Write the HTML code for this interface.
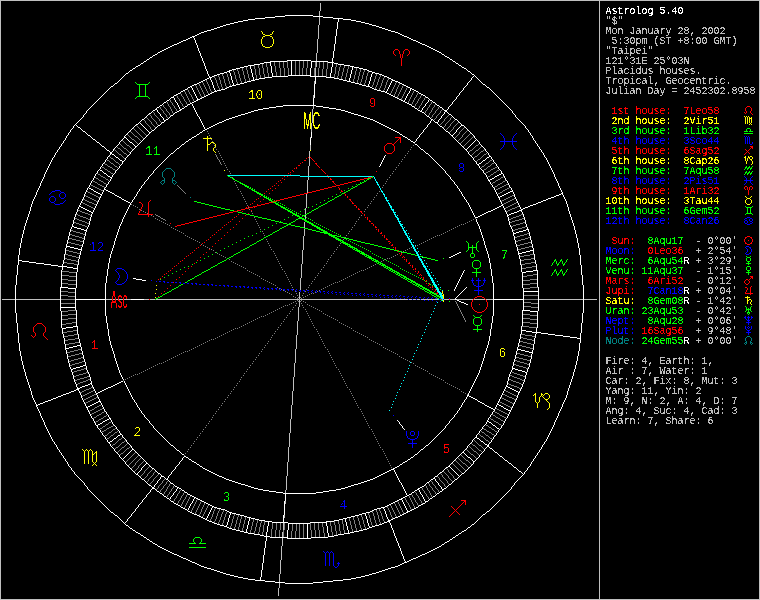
<!DOCTYPE html>
<html><head><meta charset="utf-8"><title>Astrolog 5.40</title>
<style>
html,body{margin:0;padding:0;background:#000;overflow:hidden}
svg{display:block}
.px path{fill:none;stroke-width:1;shape-rendering:crispEdges}
.sb text{font-family:"Liberation Mono",monospace;font-size:10px;white-space:pre}
.hn text{font-family:"Liberation Mono",monospace;font-size:13px}
.lb text{font-family:"Liberation Sans",sans-serif}
</style></head><body>
<svg width="760" height="600" viewBox="0 0 760 600">
<defs><filter id="bin" x="0" y="0" width="100%" height="100%" color-interpolation-filters="sRGB"><feComponentTransfer><feFuncA type="discrete" tableValues="0 0 1 1 1"/></feComponentTransfer></filter><filter id="bin2" x="0" y="0" width="100%" height="100%" color-interpolation-filters="sRGB"><feComponentTransfer><feFuncA type="discrete" tableValues="0 0 0 1 1"/></feComponentTransfer></filter><filter id="bin3" x="0" y="0" width="100%" height="100%" color-interpolation-filters="sRGB"><feComponentTransfer><feFuncA type="discrete" tableValues="0 1"/></feComponentTransfer></filter><filter id="bin4" x="0" y="0" width="100%" height="100%" color-interpolation-filters="sRGB"><feComponentTransfer><feFuncA type="discrete" tableValues="0 0 0 1"/></feComponentTransfer></filter></defs>
<rect width="760" height="600" fill="#000"/>
<g class="px" transform="translate(0,0.5)">
<path stroke="#bfbfbf" d="M0 0h760m-760 1h1m598 0h1m159 0h1m-760 1h1m598 0h1m159 0h1m-760 1h1m319 0h1m278 0h1m159 0h1m-760 1h1m319 0h1m278 0h1m159 0h1m-760 1h1m319 0h1m278 0h1m159 0h1m-760 1h1m319 0h1m278 0h1m159 0h1m-760 1h1m319 0h1m278 0h1m159 0h1m-760 1h1m319 0h1m278 0h1m159 0h1m-760 1h1m319 0h1m278 0h1m159 0h1m-760 1h1m319 0h1m278 0h1m159 0h1m-760 1h1m318 0h1m279 0h1m159 0h1m-760 1h1m318 0h1m279 0h1m159 0h1m-760 1h1m318 0h1m279 0h1m159 0h1m-760 1h1m318 0h1m279 0h1m159 0h1m-760 1h1m318 0h1m279 0h1m159 0h1m-760 1h1m598 0h1m159 0h1m-760 1h1m318 0h1m279 0h1m159 0h1m-760 1h1m318 0h1m279 0h1m159 0h1m-760 1h1m318 0h1m279 0h1m159 0h1m-760 1h1m318 0h1m279 0h1m159 0h1m-760 1h1m318 0h1m279 0h1m159 0h1m-760 1h1m318 0h1m279 0h1m159 0h1m-760 1h1m318 0h1m279 0h1m159 0h1m-760 1h1m318 0h1m279 0h1m159 0h1m-760 1h1m317 0h1m280 0h1m159 0h1m-760 1h1m317 0h1m280 0h1m159 0h1m-760 1h1m317 0h1m280 0h1m159 0h1m-760 1h1m317 0h1m280 0h1m159 0h1m-760 1h1m317 0h1m280 0h1m159 0h1m-760 1h1m317 0h1m280 0h1m159 0h1m-760 1h1m317 0h1m280 0h1m159 0h1m-760 1h1m317 0h1m280 0h1m159 0h1m-760 1h1m317 0h1m280 0h1m159 0h1m-760 1h1m317 0h1m280 0h1m159 0h1m-760 1h1m317 0h1m280 0h1m159 0h1m-760 1h1m317 0h1m280 0h1m159 0h1m-760 1h1m317 0h1m280 0h1m159 0h1m-760 1h1m317 0h1m280 0h1m159 0h1m-760 1h1m316 0h1m281 0h1m159 0h1m-760 1h1m316 0h1m281 0h1m159 0h1m-760 1h1m316 0h1m281 0h1m159 0h1m-760 1h1m316 0h1m281 0h1m159 0h1m-760 1h1m316 0h1m281 0h1m159 0h1m-760 1h1m316 0h1m281 0h1m159 0h1m-760 1h1m316 0h1m281 0h1m159 0h1m-760 1h1m316 0h1m281 0h1m159 0h1m-760 1h1m316 0h1m281 0h1m159 0h1m-760 1h1m316 0h1m281 0h1m159 0h1m-760 1h1m316 0h1m281 0h1m159 0h1m-760 1h1m316 0h1m281 0h1m159 0h1m-760 1h1m316 0h1m281 0h1m159 0h1m-760 1h1m316 0h1m281 0h1m159 0h1m-760 1h1m315 0h1m282 0h1m159 0h1m-760 1h1m315 0h1m282 0h1m159 0h1m-760 1h1m315 0h1m282 0h1m159 0h1m-760 1h1m315 0h1m282 0h1m159 0h1m-760 1h1m315 0h1m282 0h1m159 0h1m-760 1h1m315 0h1m282 0h1m159 0h1m-760 1h1m315 0h1m282 0h1m159 0h1m-760 1h1m315 0h1m282 0h1m159 0h1m-760 1h1m598 0h1m159 0h1m-760 1h1m315 0h1m282 0h1m159 0h1m-760 1h1m315 0h1m282 0h1m159 0h1m-760 1h1m315 0h1m282 0h1m159 0h1m-760 1h1m315 0h1m282 0h1m159 0h1m-760 1h1m315 0h1m282 0h1m159 0h1m-760 1h1m598 0h1m159 0h1m-760 1h1m314 0h1m283 0h1m159 0h1m-760 1h1m314 0h1m283 0h1m159 0h1m-760 1h1m314 0h1m283 0h1m159 0h1m-760 1h1m314 0h1m283 0h1m159 0h1m-760 1h1m314 0h1m283 0h1m159 0h1m-760 1h1m314 0h1m283 0h1m159 0h1m-760 1h1m314 0h1m283 0h1m159 0h1m-760 1h1m314 0h1m283 0h1m159 0h1m-760 1h1m598 0h1m159 0h1m-760 1h1m598 0h1m159 0h1m-760 1h1m598 0h1m159 0h1m-760 1h1m598 0h1m159 0h1m-760 1h1m598 0h1m159 0h1m-760 1h1m313 0h1m284 0h1m159 0h1m-760 1h1m313 0h1m284 0h1m159 0h1m-760 1h1m313 0h1m284 0h1m159 0h1m-760 1h1m598 0h1m159 0h1m-760 1h1m598 0h1m159 0h1m-760 1h1m598 0h1m159 0h1m-760 1h1m598 0h1m159 0h1m-760 1h1m598 0h1m159 0h1m-760 1h1m598 0h1m159 0h1m-760 1h1m598 0h1m159 0h1m-760 1h1m598 0h1m159 0h1m-760 1h1m598 0h1m159 0h1m-760 1h1m598 0h1m159 0h1m-760 1h1m598 0h1m159 0h1m-760 1h1m312 0h1m285 0h1m159 0h1m-760 1h1m312 0h1m285 0h1m159 0h1m-760 1h1m312 0h1m285 0h1m159 0h1m-760 1h1m598 0h1m159 0h1m-760 1h1m598 0h1m159 0h1m-760 1h1m598 0h1m159 0h1m-760 1h1m598 0h1m159 0h1m-760 1h1m598 0h1m159 0h1m-760 1h1m598 0h1m159 0h1m-760 1h1m598 0h1m159 0h1m-760 1h1m598 0h1m159 0h1m-760 1h1m312 0h1m285 0h1m159 0h1m-760 1h1m312 0h1m285 0h1m159 0h1m-760 1h1m312 0h1m285 0h1m159 0h1m-760 1h1m311 0h1m286 0h1m159 0h1m-760 1h1m311 0h1m286 0h1m159 0h1m-760 1h1m311 0h1m286 0h1m159 0h1m-760 1h1m311 0h1m286 0h1m159 0h1m-760 1h1m311 0h1m286 0h1m159 0h1m-760 1h1m311 0h1m286 0h1m159 0h1m-760 1h1m311 0h1m286 0h1m159 0h1m-760 1h1m311 0h1m286 0h1m159 0h1m-760 1h1m311 0h1m286 0h1m159 0h1m-760 1h1m311 0h1m286 0h1m159 0h1m-760 1h1m311 0h1m286 0h1m159 0h1m-760 1h1m311 0h1m286 0h1m159 0h1m-760 1h1m311 0h1m286 0h1m159 0h1m-760 1h1m311 0h1m286 0h1m159 0h1m-760 1h1m310 0h1m287 0h1m159 0h1m-760 1h1m310 0h1m287 0h1m159 0h1m-760 1h1m310 0h1m287 0h1m159 0h1m-760 1h1m310 0h1m287 0h1m159 0h1m-760 1h1m310 0h1m287 0h1m159 0h1m-760 1h1m310 0h1m287 0h1m159 0h1m-760 1h1m310 0h1m287 0h1m159 0h1m-760 1h1m310 0h1m287 0h1m159 0h1m-760 1h1m310 0h1m287 0h1m159 0h1m-760 1h1m598 0h1m159 0h1m-760 1h1m598 0h1m159 0h1m-760 1h1m598 0h1m159 0h1m-760 1h1m598 0h1m159 0h1m-760 1h1m598 0h1m159 0h1m-760 1h1m309 0h1m288 0h1m159 0h1m-760 1h1m598 0h1m159 0h1m-760 1h1m598 0h1m159 0h1m-760 1h1m598 0h1m159 0h1m-760 1h1m598 0h1m159 0h1m-760 1h1m598 0h1m159 0h1m-760 1h1m598 0h1m159 0h1m-760 1h1m598 0h1m159 0h1m-760 1h1m309 0h1m288 0h1m159 0h1m-760 1h1m309 0h1m288 0h1m159 0h1m-760 1h1m309 0h1m288 0h1m159 0h1m-760 1h1m309 0h1m288 0h1m159 0h1m-760 1h1m309 0h1m288 0h1m159 0h1m-760 1h1m598 0h1m159 0h1m-760 1h1m308 0h1m289 0h1m159 0h1m-760 1h1m308 0h1m289 0h1m159 0h1m-760 1h1m308 0h1m289 0h1m159 0h1m-760 1h1m308 0h1m289 0h1m159 0h1m-760 1h1m308 0h1m289 0h1m159 0h1m-760 1h1m308 0h1m289 0h1m159 0h1m-760 1h1m308 0h1m289 0h1m159 0h1m-760 1h1m308 0h1m289 0h1m159 0h1m-760 1h1m308 0h1m289 0h1m159 0h1m-760 1h1m308 0h1m289 0h1m159 0h1m-760 1h1m308 0h1m289 0h1m159 0h1m-760 1h1m308 0h1m289 0h1m159 0h1m-760 1h1m308 0h1m289 0h1m159 0h1m-760 1h1m308 0h1m289 0h1m159 0h1m-760 1h1m308 0h1m289 0h1m159 0h1m-760 1h1m307 0h1m290 0h1m159 0h1m-760 1h1m307 0h1m290 0h1m159 0h1m-760 1h1m307 0h1m290 0h1m159 0h1m-760 1h1m307 0h1m290 0h1m159 0h1m-760 1h1m307 0h1m290 0h1m159 0h1m-760 1h1m307 0h1m290 0h1m159 0h1m-760 1h1m307 0h1m290 0h1m159 0h1m-760 1h1m307 0h1m290 0h1m159 0h1m-760 1h1m307 0h1m290 0h1m159 0h1m-760 1h1m307 0h1m290 0h1m159 0h1m-760 1h1m598 0h1m159 0h1m-760 1h1m307 0h1m290 0h1m159 0h1m-760 1h1m307 0h1m290 0h1m159 0h1m-760 1h1m307 0h1m290 0h1m159 0h1m-760 1h1m306 0h1m291 0h1m159 0h1m-760 1h1m306 0h1m291 0h1m159 0h1m-760 1h1m306 0h1m291 0h1m159 0h1m-760 1h1m306 0h1m291 0h1m159 0h1m-760 1h1m306 0h1m291 0h1m159 0h1m-760 1h1m306 0h1m291 0h1m159 0h1m-760 1h1m306 0h1m291 0h1m159 0h1m-760 1h1m306 0h1m291 0h1m159 0h1m-760 1h1m306 0h1m291 0h1m159 0h1m-760 1h1m306 0h1m291 0h1m159 0h1m-760 1h1m306 0h1m291 0h1m159 0h1m-760 1h1m306 0h1m291 0h1m159 0h1m-760 1h1m306 0h1m291 0h1m159 0h1m-760 1h1m598 0h1m159 0h1m-760 1h1m305 0h1m292 0h1m159 0h1m-760 1h1m305 0h1m292 0h1m159 0h1m-760 1h1m305 0h1m292 0h1m159 0h1m-760 1h1m305 0h1m292 0h1m159 0h1m-760 1h1m305 0h1m292 0h1m159 0h1m-760 1h1m305 0h1m292 0h1m159 0h1m-760 1h1m305 0h1m292 0h1m159 0h1m-760 1h1m305 0h1m292 0h1m159 0h1m-760 1h1m305 0h1m292 0h1m159 0h1m-760 1h1m305 0h1m292 0h1m159 0h1m-760 1h1m305 0h1m292 0h1m159 0h1m-760 1h1m305 0h1m292 0h1m159 0h1m-760 1h1m305 0h1m292 0h1m159 0h1m-760 1h1m305 0h1m292 0h1m159 0h1m-760 1h1m304 0h1m293 0h1m159 0h1m-760 1h1m304 0h1m293 0h1m159 0h1m-760 1h1m304 0h1m293 0h1m159 0h1m-760 1h1m304 0h1m293 0h1m159 0h1m-760 1h1m304 0h1m293 0h1m159 0h1m-760 1h1m304 0h1m293 0h1m159 0h1m-760 1h1m598 0h1m159 0h1m-760 1h1m304 0h1m293 0h1m159 0h1m-760 1h1m304 0h1m293 0h1m159 0h1m-760 1h1m304 0h1m293 0h1m159 0h1m-760 1h1m304 0h1m293 0h1m159 0h1m-760 1h1m598 0h1m159 0h1m-760 1h1m598 0h1m159 0h1m-760 1h1m598 0h1m159 0h1m-760 1h1m303 0h1m294 0h1m159 0h1m-760 1h1m303 0h1m294 0h1m159 0h1m-760 1h1m303 0h1m294 0h1m159 0h1m-760 1h1m303 0h1m294 0h1m159 0h1m-760 1h1m303 0h1m294 0h1m159 0h1m-760 1h1m303 0h1m294 0h1m159 0h1m-760 1h1m598 0h1m159 0h1m-760 1h1m303 0h1m294 0h1m159 0h1m-760 1h1m303 0h1m294 0h1m159 0h1m-760 1h1m303 0h1m294 0h1m159 0h1m-760 1h1m303 0h1m294 0h1m159 0h1m-760 1h1m303 0h1m294 0h1m159 0h1m-760 1h1m303 0h1m294 0h1m159 0h1m-760 1h1m303 0h1m294 0h1m159 0h1m-760 1h1m302 0h1m295 0h1m159 0h1m-760 1h1m302 0h1m295 0h1m159 0h1m-760 1h1m302 0h1m295 0h1m159 0h1m-760 1h1m302 0h1m295 0h1m159 0h1m-760 1h1m302 0h1m295 0h1m159 0h1m-760 1h1m302 0h1m295 0h1m159 0h1m-760 1h1m302 0h1m295 0h1m159 0h1m-760 1h1m302 0h1m295 0h1m159 0h1m-760 1h1m302 0h1m295 0h1m159 0h1m-760 1h1m302 0h1m295 0h1m159 0h1m-760 1h1m302 0h1m295 0h1m159 0h1m-760 1h1m302 0h1m295 0h1m159 0h1m-760 1h1m302 0h1m295 0h1m159 0h1m-760 1h1m302 0h1m295 0h1m159 0h1m-760 1h1m301 0h1m296 0h1m159 0h1m-760 1h1m301 0h1m296 0h1m159 0h1m-760 1h1m301 0h1m296 0h1m159 0h1m-760 1h1m301 0h1m296 0h1m159 0h1m-760 1h1m301 0h1m296 0h1m159 0h1m-760 1h1m301 0h1m296 0h1m159 0h1m-760 1h1m301 0h1m296 0h1m159 0h1m-760 1h1m301 0h1m296 0h1m159 0h1m-760 1h1m301 0h1m296 0h1m159 0h1m-760 1h1m301 0h1m296 0h1m159 0h1m-760 1h1m301 0h1m296 0h1m159 0h1m-760 1h1m301 0h1m296 0h1m159 0h1m-760 1h1m301 0h1m296 0h1m159 0h1m-760 1h1m301 0h1m296 0h1m159 0h1m-760 1h1m300 0h1m297 0h1m159 0h1m-760 1h1m300 0h1m297 0h1m159 0h1m-760 1h1m300 0h1m297 0h1m159 0h1m-760 1h1m300 0h1m297 0h1m159 0h1m-760 1h1m300 0h1m297 0h1m159 0h1m-760 1h1m300 0h1m297 0h1m159 0h1m-760 1h1m300 0h1m297 0h1m159 0h1m-760 1h1m300 0h1m297 0h1m159 0h1m-760 1h1m300 0h1m297 0h1m159 0h1m-760 1h1m300 0h1m297 0h1m159 0h1m-760 1h1m300 0h1m297 0h1m159 0h1m-760 1h1m300 0h1m297 0h1m159 0h1m-760 1h1m300 0h1m297 0h1m159 0h1m-760 1h1m300 0h1m297 0h1m159 0h1m-760 1h1m299 0h1m298 0h1m159 0h1m-760 1h1m299 0h1m298 0h1m159 0h1m-760 1h1m299 0h1m298 0h1m159 0h1m-760 1h1m299 0h1m298 0h1m159 0h1m-760 1h1m299 0h1m298 0h1m159 0h1m-760 1h1m299 0h1m298 0h1m159 0h1m-760 1h1m299 0h1m298 0h1m159 0h1m-760 1h1m299 0h1m298 0h1m159 0h1m-760 1h1m299 0h1m298 0h1m159 0h1m-760 1h1m299 0h1m298 0h1m159 0h1m-760 1h1m299 0h1m298 0h1m159 0h1m-760 1h1m299 0h1m298 0h1m159 0h1m-760 1h1m598 0h1m159 0h1m-760 1h1m598 0h1m159 0h1m-760 1h1m298 0h1m299 0h1m159 0h1m-760 1h1m298 0h1m299 0h1m159 0h1m-760 1h1m298 0h1m299 0h1m159 0h1m-760 1h1m298 0h1m299 0h1m159 0h1m-760 1h1m298 0h1m299 0h1m159 0h1m-760 1h1m298 0h1m299 0h1m159 0h1m-760 1h1m298 0h1m299 0h1m159 0h1m-760 1h1m1 0h13m1 0h44m46 0h25m13 0h5m1 0h5m1 0h143m1 0h108m1 0h3m1 0h3m1 0h3m1 0h17m6 0h5m1 0h5m2 0h16m1 0h11m1 0h7m46 0h44m1 0h13m2 0h1m159 0h1m-760 1h1m298 0h1m299 0h1m159 0h1m-760 1h1m298 0h1m299 0h1m159 0h1m-760 1h1m298 0h1m299 0h1m159 0h1m-760 1h1m298 0h1m299 0h1m159 0h1m-760 1h1m298 0h1m299 0h1m159 0h1m-760 1h1m298 0h1m299 0h1m159 0h1m-760 1h1m298 0h1m299 0h1m159 0h1m-760 1h1m297 0h1m300 0h1m159 0h1m-760 1h1m297 0h1m300 0h1m159 0h1m-760 1h1m297 0h1m300 0h1m159 0h1m-760 1h1m297 0h1m300 0h1m159 0h1m-760 1h1m297 0h1m300 0h1m159 0h1m-760 1h1m297 0h1m300 0h1m159 0h1m-760 1h1m297 0h1m300 0h1m159 0h1m-760 1h1m297 0h1m300 0h1m159 0h1m-760 1h1m297 0h1m300 0h1m159 0h1m-760 1h1m297 0h1m300 0h1m159 0h1m-760 1h1m297 0h1m300 0h1m159 0h1m-760 1h1m297 0h1m300 0h1m159 0h1m-760 1h1m297 0h1m300 0h1m159 0h1m-760 1h1m297 0h1m300 0h1m159 0h1m-760 1h1m296 0h1m301 0h1m159 0h1m-760 1h1m296 0h1m301 0h1m159 0h1m-760 1h1m296 0h1m301 0h1m159 0h1m-760 1h1m296 0h1m301 0h1m159 0h1m-760 1h1m296 0h1m301 0h1m159 0h1m-760 1h1m296 0h1m301 0h1m159 0h1m-760 1h1m296 0h1m301 0h1m159 0h1m-760 1h1m296 0h1m301 0h1m159 0h1m-760 1h1m296 0h1m301 0h1m159 0h1m-760 1h1m296 0h1m301 0h1m159 0h1m-760 1h1m296 0h1m301 0h1m159 0h1m-760 1h1m296 0h1m301 0h1m159 0h1m-760 1h1m296 0h1m301 0h1m159 0h1m-760 1h1m296 0h1m301 0h1m159 0h1m-760 1h1m295 0h1m302 0h1m159 0h1m-760 1h1m295 0h1m302 0h1m159 0h1m-760 1h1m295 0h1m302 0h1m159 0h1m-760 1h1m295 0h1m302 0h1m159 0h1m-760 1h1m295 0h1m302 0h1m159 0h1m-760 1h1m295 0h1m302 0h1m159 0h1m-760 1h1m295 0h1m302 0h1m159 0h1m-760 1h1m295 0h1m302 0h1m159 0h1m-760 1h1m295 0h1m302 0h1m159 0h1m-760 1h1m295 0h1m302 0h1m159 0h1m-760 1h1m295 0h1m302 0h1m159 0h1m-760 1h1m295 0h1m302 0h1m159 0h1m-760 1h1m295 0h1m302 0h1m159 0h1m-760 1h1m295 0h1m302 0h1m159 0h1m-760 1h1m294 0h1m303 0h1m159 0h1m-760 1h1m294 0h1m303 0h1m159 0h1m-760 1h1m294 0h1m303 0h1m159 0h1m-760 1h1m294 0h1m303 0h1m159 0h1m-760 1h1m294 0h1m303 0h1m159 0h1m-760 1h1m294 0h1m303 0h1m159 0h1m-760 1h1m294 0h1m303 0h1m159 0h1m-760 1h1m294 0h1m303 0h1m159 0h1m-760 1h1m294 0h1m303 0h1m159 0h1m-760 1h1m294 0h1m303 0h1m159 0h1m-760 1h1m294 0h1m303 0h1m159 0h1m-760 1h1m294 0h1m303 0h1m159 0h1m-760 1h1m294 0h1m303 0h1m159 0h1m-760 1h1m294 0h1m303 0h1m159 0h1m-760 1h1m293 0h1m304 0h1m159 0h1m-760 1h1m293 0h1m304 0h1m159 0h1m-760 1h1m293 0h1m304 0h1m159 0h1m-760 1h1m293 0h1m304 0h1m159 0h1m-760 1h1m293 0h1m304 0h1m159 0h1m-760 1h1m293 0h1m304 0h1m159 0h1m-760 1h1m293 0h1m304 0h1m159 0h1m-760 1h1m293 0h1m304 0h1m159 0h1m-760 1h1m293 0h1m304 0h1m159 0h1m-760 1h1m293 0h1m304 0h1m159 0h1m-760 1h1m293 0h1m304 0h1m159 0h1m-760 1h1m293 0h1m304 0h1m159 0h1m-760 1h1m293 0h1m304 0h1m159 0h1m-760 1h1m293 0h1m304 0h1m159 0h1m-760 1h1m292 0h1m305 0h1m159 0h1m-760 1h1m292 0h1m305 0h1m159 0h1m-760 1h1m292 0h1m305 0h1m159 0h1m-760 1h1m292 0h1m305 0h1m159 0h1m-760 1h1m292 0h1m305 0h1m159 0h1m-760 1h1m292 0h1m305 0h1m159 0h1m-760 1h1m292 0h1m305 0h1m159 0h1m-760 1h1m292 0h1m305 0h1m159 0h1m-760 1h1m292 0h1m305 0h1m159 0h1m-760 1h1m292 0h1m305 0h1m159 0h1m-760 1h1m292 0h1m305 0h1m159 0h1m-760 1h1m292 0h1m305 0h1m159 0h1m-760 1h1m292 0h1m305 0h1m159 0h1m-760 1h1m292 0h1m305 0h1m159 0h1m-760 1h1m291 0h1m306 0h1m159 0h1m-760 1h1m291 0h1m306 0h1m159 0h1m-760 1h1m291 0h1m306 0h1m159 0h1m-760 1h1m291 0h1m306 0h1m159 0h1m-760 1h1m291 0h1m306 0h1m159 0h1m-760 1h1m291 0h1m306 0h1m159 0h1m-760 1h1m291 0h1m306 0h1m159 0h1m-760 1h1m291 0h1m306 0h1m159 0h1m-760 1h1m291 0h1m306 0h1m159 0h1m-760 1h1m291 0h1m306 0h1m159 0h1m-760 1h1m291 0h1m306 0h1m159 0h1m-760 1h1m291 0h1m306 0h1m159 0h1m-760 1h1m291 0h1m306 0h1m159 0h1m-760 1h1m291 0h1m306 0h1m159 0h1m-760 1h1m290 0h1m307 0h1m159 0h1m-760 1h1m290 0h1m307 0h1m159 0h1m-760 1h1m290 0h1m307 0h1m159 0h1m-760 1h1m290 0h1m307 0h1m159 0h1m-760 1h1m290 0h1m307 0h1m159 0h1m-760 1h1m290 0h1m307 0h1m159 0h1m-760 1h1m290 0h1m307 0h1m159 0h1m-760 1h1m290 0h1m307 0h1m159 0h1m-760 1h1m290 0h1m307 0h1m159 0h1m-760 1h1m290 0h1m307 0h1m159 0h1m-760 1h1m290 0h1m307 0h1m159 0h1m-760 1h1m290 0h1m307 0h1m159 0h1m-760 1h1m290 0h1m307 0h1m159 0h1m-760 1h1m290 0h1m307 0h1m159 0h1m-760 1h1m289 0h1m308 0h1m159 0h1m-760 1h1m289 0h1m308 0h1m159 0h1m-760 1h1m289 0h1m308 0h1m159 0h1m-760 1h1m289 0h1m308 0h1m159 0h1m-760 1h1m289 0h1m308 0h1m159 0h1m-760 1h1m289 0h1m308 0h1m159 0h1m-760 1h1m289 0h1m308 0h1m159 0h1m-760 1h1m289 0h1m308 0h1m159 0h1m-760 1h1m289 0h1m308 0h1m159 0h1m-760 1h1m289 0h1m308 0h1m159 0h1m-760 1h1m289 0h1m308 0h1m159 0h1m-760 1h1m289 0h1m308 0h1m159 0h1m-760 1h1m289 0h1m308 0h1m159 0h1m-760 1h1m289 0h1m308 0h1m159 0h1m-760 1h1m288 0h1m309 0h1m159 0h1m-760 1h1m288 0h1m309 0h1m159 0h1m-760 1h1m288 0h1m309 0h1m159 0h1m-760 1h1m288 0h1m309 0h1m159 0h1m-760 1h1m288 0h1m309 0h1m159 0h1m-760 1h1m288 0h1m309 0h1m159 0h1m-760 1h1m288 0h1m309 0h1m159 0h1m-760 1h1m288 0h1m309 0h1m159 0h1m-760 1h1m288 0h1m309 0h1m159 0h1m-760 1h1m288 0h1m309 0h1m159 0h1m-760 1h1m288 0h1m309 0h1m159 0h1m-760 1h1m288 0h1m309 0h1m159 0h1m-760 1h1m288 0h1m309 0h1m159 0h1m-760 1h1m288 0h1m309 0h1m159 0h1m-760 1h1m287 0h1m310 0h1m159 0h1m-760 1h1m287 0h1m310 0h1m159 0h1m-760 1h1m287 0h1m310 0h1m159 0h1m-760 1h1m287 0h1m310 0h1m159 0h1m-760 1h1m287 0h1m310 0h1m159 0h1m-760 1h1m287 0h1m310 0h1m159 0h1m-760 1h1m287 0h1m310 0h1m159 0h1m-760 1h1m287 0h1m310 0h1m159 0h1m-760 1h1m287 0h1m310 0h1m159 0h1m-760 1h1m287 0h1m310 0h1m159 0h1m-760 1h1m287 0h1m310 0h1m159 0h1m-760 1h1m287 0h1m310 0h1m159 0h1m-760 1h1m287 0h1m310 0h1m159 0h1m-760 1h1m287 0h1m310 0h1m159 0h1m-760 1h1m287 0h1m310 0h1m159 0h1m-760 1h1m286 0h1m311 0h1m159 0h1m-760 1h1m286 0h1m311 0h1m159 0h1m-760 1h1m286 0h1m311 0h1m159 0h1m-760 1h1m286 0h1m311 0h1m159 0h1m-760 1h1m286 0h1m311 0h1m159 0h1m-760 1h1m286 0h1m311 0h1m159 0h1m-760 1h1m286 0h1m311 0h1m159 0h1m-760 1h1m286 0h1m311 0h1m159 0h1m-760 1h1m286 0h1m311 0h1m159 0h1m-760 1h1m286 0h1m311 0h1m159 0h1m-760 1h1m286 0h1m311 0h1m159 0h1m-760 1h1m286 0h1m311 0h1m159 0h1m-760 1h1m286 0h1m311 0h1m159 0h1m-760 1h1m286 0h1m311 0h1m159 0h1m-760 1h1m285 0h1m312 0h1m159 0h1m-760 1h1m285 0h1m312 0h1m159 0h1m-760 1h1m285 0h1m312 0h1m159 0h1m-760 1h1m285 0h1m312 0h1m159 0h1m-760 1h1m285 0h1m312 0h1m159 0h1m-760 1h1m285 0h1m312 0h1m159 0h1m-760 1h1m285 0h1m312 0h1m159 0h1m-760 1h1m285 0h1m312 0h1m159 0h1m-760 1h1m285 0h1m312 0h1m159 0h1m-760 1h1m285 0h1m312 0h1m159 0h1m-760 1h1m285 0h1m312 0h1m159 0h1m-760 1h1m285 0h1m312 0h1m159 0h1m-760 1h1m285 0h1m312 0h1m159 0h1m-760 1h1m285 0h1m312 0h1m159 0h1m-760 1h1m284 0h1m313 0h1m159 0h1m-760 1h1m284 0h1m313 0h1m159 0h1m-760 1h1m284 0h1m313 0h1m159 0h1m-760 1h1m598 0h1m159 0h1m-760 1h1m598 0h1m159 0h1m-760 1h1m598 0h1m159 0h1m-760 1h1m598 0h1m159 0h1m-760 1h1m598 0h1m159 0h1m-760 1h1m598 0h1m159 0h1m-760 1h1m598 0h1m159 0h1m-760 1h1m598 0h1m159 0h1m-760 1h1m284 0h1m313 0h1m159 0h1m-760 1h1m284 0h1m313 0h1m159 0h1m-760 1h1m284 0h1m313 0h1m159 0h1m-760 1h1m598 0h1m159 0h1m-760 1h1m598 0h1m159 0h1m-760 1h1m598 0h1m159 0h1m-760 1h1m598 0h1m159 0h1m-760 1h1m598 0h1m159 0h1m-760 1h1m598 0h1m159 0h1m-760 1h1m598 0h1m159 0h1m-760 1h1m598 0h1m159 0h1m-760 1h1m598 0h1m159 0h1m-760 1h1m598 0h1m159 0h1m-760 1h1m598 0h1m159 0h1m-760 1h1m283 0h1m314 0h1m159 0h1m-760 1h1m283 0h1m314 0h1m159 0h1m-760 1h1m283 0h1m314 0h1m159 0h1m-760 1h1m598 0h1m159 0h1m-760 1h1m598 0h1m159 0h1m-760 1h1m598 0h1m159 0h1m-760 1h1m598 0h1m159 0h1m-760 1h1m598 0h1m159 0h1m-760 1h1m282 0h1m315 0h1m159 0h1m-760 1h1m282 0h1m315 0h1m159 0h1m-760 1h1m282 0h1m315 0h1m159 0h1m-760 1h1m282 0h1m315 0h1m159 0h1m-760 1h1m282 0h1m315 0h1m159 0h1m-760 1h1m282 0h1m315 0h1m159 0h1m-760 1h1m282 0h1m315 0h1m159 0h1m-760 1h1m598 0h1m159 0h1m-760 1h1m598 0h1m159 0h1m-760 1h1m281 0h1m316 0h1m159 0h1m-760 1h1m281 0h1m316 0h1m159 0h1m-760 1h1m281 0h1m316 0h1m159 0h1m-760 1h1m281 0h1m316 0h1m159 0h1m-760 1h1m281 0h1m316 0h1m159 0h1m-760 1h1m598 0h1m159 0h1m-760 1h1m281 0h1m316 0h1m159 0h1m-760 1h1m281 0h1m316 0h1m159 0h1m-760 1h1m281 0h1m316 0h1m159 0h1m-760 1h1m281 0h1m316 0h1m159 0h1m-760 1h1m281 0h1m316 0h1m159 0h1m-760 1h1m281 0h1m316 0h1m159 0h1m-760 1h1m281 0h1m316 0h1m159 0h1m-760 1h1m281 0h1m316 0h1m159 0h1m-760 1h1m280 0h1m317 0h1m159 0h1m-760 1h1m280 0h1m317 0h1m159 0h1m-760 1h1m280 0h1m317 0h1m159 0h1m-760 1h1m280 0h1m317 0h1m159 0h1m-760 1h1m280 0h1m317 0h1m159 0h1m-760 1h1m280 0h1m317 0h1m159 0h1m-760 1h1m280 0h1m317 0h1m159 0h1m-760 1h1m280 0h1m317 0h1m159 0h1m-760 1h1m280 0h1m317 0h1m159 0h1m-760 1h1m280 0h1m317 0h1m159 0h1m-760 1h1m280 0h1m317 0h1m159 0h1m-760 1h1m280 0h1m317 0h1m159 0h1m-760 1h1m280 0h1m317 0h1m159 0h1m-760 1h1m280 0h1m317 0h1m159 0h1m-760 1h1m279 0h1m318 0h1m159 0h1m-760 1h1m279 0h1m318 0h1m159 0h1m-760 1h1m279 0h1m318 0h1m159 0h1m-760 1h1m279 0h1m318 0h1m159 0h1m-760 1h1m279 0h1m318 0h1m159 0h1m-760 1h1m279 0h1m318 0h1m159 0h1m-760 1h1m279 0h1m318 0h1m159 0h1m-760 1h1m279 0h1m318 0h1m159 0h1m-760 1h1m279 0h1m318 0h1m159 0h1m-760 1h1m279 0h1m318 0h1m159 0h1m-760 1h1m279 0h1m318 0h1m159 0h1m-760 1h1m279 0h1m318 0h1m159 0h1m-760 1h1m279 0h1m318 0h1m159 0h1m-760 1h1m279 0h1m318 0h1m159 0h1m-760 1h1m278 0h1m319 0h1m159 0h1m-760 1h1m278 0h1m319 0h1m159 0h1m-760 1h1m278 0h1m319 0h1m159 0h1m-760 1h1m278 0h1m319 0h1m159 0h1m-760 1h1m278 0h1m319 0h1m159 0h1m-760 1h1m278 0h1m319 0h1m159 0h1m-760 1h1m278 0h1m319 0h1m159 0h1m-760 1h1m278 0h1m319 0h1m159 0h1m-760 1h1m598 0h1m159 0h1m-760 1h1m278 0h1m319 0h1m159 0h1m-760 1h1m278 0h1m319 0h1m159 0h1m-760 1h1m278 0h1m319 0h1m159 0h1m-760 1h1m278 0h1m319 0h1m159 0h1m-760 1h1m278 0h1m319 0h1m159 0h1m-760 1h1m277 0h1m320 0h1m159 0h1m-760 1h1m277 0h1m320 0h1m159 0h1m-760 1h1m277 0h1m320 0h1m159 0h1m-760 1h1m277 0h1m320 0h1m159 0h1m-760 1h1m277 0h1m320 0h1m159 0h1m-760 1h1m277 0h1m320 0h1m159 0h1m-760 1h1m277 0h1m320 0h1m159 0h1m-760 1h1m277 0h1m320 0h1m159 0h1m-760 1h1m598 0h1m159 0h1m-760 1h1m598 0h1m159 0h1m-760 1h1m598 0h1m159 0h1m-760 1h760"/>
<path stroke="#fff" d="M285 15h28m-38 1h10m28 0h10m-58 1h10m48 0h10m-78 1h10m68 0h10m-95 1h7m83 0h1m4 0h8m-108 1h5m90 0h1m12 0h5m-118 1h5m95 0h1m17 0h5m-127 1h4m99 0h1m23 0h4m-135 1h4m103 0h1m27 0h4m-143 1h4m107 0h1m31 0h3m-149 1h3m111 0h1m34 0h4m-156 1h3m114 0h1m38 0h3m-162 1h3m117 0h1m41 0h3m-168 1h3m120 0h1m44 0h3m-174 1h3m122 0h1m48 0h3m-181 1h4m125 0h1m51 0h3m-187 1h3m129 0h1m54 0h4m-194 1h3m132 0h1m58 0h3m-199 1h2m135 0h1m61 0h2m-203 1h2m137 0h1m63 0h2m-207 1h2m139 0h1m65 0h2m-212 1h3m140 0h1m68 0h3m-217 1h2m1 0h1m141 0h1m71 0h2m-221 1h2m4 0h1m140 0h1m73 0h2m-225 1h2m6 0h1m140 0h1m75 0h2m-230 1h3m9 0h1m139 0h1m77 0h3m-235 1h2m12 0h1m139 0h1m80 0h2m-239 1h2m14 0h1m139 0h1m82 0h2m-243 1h2m17 0h1m138 0h1m84 0h2m-248 1h3m19 0h1m137 0h1m87 0h3m-253 1h2m23 0h1m136 0h1m90 0h2m-257 1h2m25 0h1m136 0h1m92 0h2m-261 1h2m27 0h1m136 0h1m94 0h2m-265 1h2m30 0h1m135 0h1m96 0h2m-269 1h2m32 0h1m135 0h1m98 0h2m-273 1h2m34 0h1m135 0h1m100 0h2m-277 1h2m37 0h1m133 0h1m103 0h2m-281 1h2m39 0h1m133 0h1m105 0h2m-284 1h1m42 0h1m132 0h1m107 0h1m-287 1h2m43 0h1m132 0h1m108 0h2m-291 1h2m45 0h1m132 0h1m110 0h1m-293 1h1m48 0h1m131 0h1m111 0h2m-297 1h2m49 0h1m131 0h1m113 0h2m-300 1h1m52 0h1m129 0h1m116 0h1m-303 1h2m53 0h1m129 0h1m117 0h2m-306 1h1m55 0h1m84 0h24m21 0h1m119 0h1m-309 1h2m57 0h1m66 0h17m4 0h1m19 0h17m4 0h1m120 0h2m-312 1h1m59 0h1m60 0h7m20 0h1m19 0h1m16 0h6m121 0h1m-315 1h2m61 0h1m55 0h4m6 0h1m20 0h1m19 0h1m20 0h1m1 0h4m118 0h2m-318 1h1m63 0h1m49 0h6m10 0h1m20 0h1m19 0h1m20 0h1m5 0h6m114 0h1m-321 1h2m64 0h1m43 0h6m16 0h1m20 0h1m19 0h1m20 0h1m11 0h6m109 0h2m-325 1h2m67 0h1m38 0h4m2 0h1m20 0h1m19 0h1m19 0h1m20 0h1m17 0h4m107 0h1m-327 1h1m69 0h1m34 0h4m6 0h1m20 0h1m19 0h1m19 0h1m19 0h1m20 0h1m1 0h5m103 0h2m-331 1h2m70 0h1m30 0h4m10 0h1m20 0h1m19 0h1m18 0h1m20 0h1m20 0h1m6 0h4m101 0h2m-334 1h1m73 0h1m25 0h4m15 0h1m19 0h1m19 0h1m18 0h1m20 0h1m20 0h1m10 0h4m99 0h1m-337 1h2m74 0h1m22 0h3m19 0h1m19 0h1m19 0h1m18 0h1m20 0h1m19 0h1m15 0h2m98 0h1m-339 1h1m77 0h1m19 0h3m21 0h1m19 0h1m19 0h1m18 0h1m20 0h1m19 0h1m17 0h3m96 0h2m-342 1h1m78 0h1m16 0h3m2 0h1m21 0h1m19 0h1m19 0h1m18 0h1m20 0h1m19 0h1m20 0h3m95 0h1m-345 1h2m79 0h1m12 0h4m6 0h1m21 0h1m19 0h1m18 0h1m18 0h1m19 0h1m20 0h1m20 0h1m2 0h4m92 0h1m-347 1h1m82 0h1m8 0h3m10 0h1m21 0h1m19 0h1m18 0h1m18 0h1m19 0h1m19 0h1m20 0h1m7 0h3m90 0h2m-350 1h1m83 0h1m5 0h3m13 0h1m21 0h1m19 0h1m15 0h23m19 0h1m19 0h1m20 0h1m10 0h2m90 0h1m-352 1h1m85 0h1m2 0h2m17 0h1m20 0h1m19 0h16m22 0h16m4 0h1m19 0h1m20 0h1m12 0h3m86 0h1m1 0h1m-354 1h1m86 0h3m19 0h1m21 0h1m11 0h7m43 0h1m10 0h8m16 0h1m19 0h1m16 0h2m83 0h1m3 0h1m-356 1h1m85 0h2m1 0h1m20 0h1m21 0h1m5 0h6m50 0h1m18 0h5m10 0h1m20 0h1m18 0h2m80 0h1m5 0h1m-358 1h1m84 0h2m3 0h1m20 0h1m21 0h1m1 0h4m56 0h1m23 0h4m6 0h1m20 0h1m20 0h2m78 0h1m6 0h1m-360 1h1m83 0h2m6 0h1m20 0h1m18 0h4m60 0h1m27 0h4m2 0h1m20 0h1m21 0h3m75 0h1m8 0h1m-362 1h1m82 0h2m8 0h1m20 0h1m14 0h4m64 0h1m31 0h4m18 0h1m21 0h1m3 0h3m71 0h1m10 0h1m-364 1h1m81 0h2m11 0h1m19 0h1m11 0h3m68 0h1m35 0h4m14 0h1m21 0h1m6 0h2m68 0h1m12 0h1m-367 1h2m80 0h2m13 0h1m20 0h1m6 0h4m71 0h1m39 0h4m10 0h1m20 0h1m9 0h2m65 0h1m14 0h1m-369 1h1m79 0h3m15 0h1m20 0h1m2 0h4m74 0h1m44 0h3m6 0h1m21 0h1m11 0h2m63 0h1m15 0h2m-372 1h1m78 0h2m19 0h1m18 0h4m78 0h1m47 0h4m2 0h1m20 0h1m14 0h2m60 0h1m18 0h1m-375 1h2m77 0h2m21 0h1m15 0h3m82 0h1m51 0h4m19 0h1m16 0h2m57 0h1m20 0h1m-377 1h1m77 0h2m1 0h1m21 0h1m13 0h2m85 0h1m55 0h2m16 0h1m19 0h2m54 0h1m22 0h2m-380 1h1m77 0h1m4 0h1m21 0h1m10 0h2m87 0h1m57 0h2m14 0h1m21 0h2m51 0h1m25 0h1m-382 1h1m76 0h2m5 0h1m21 0h1m6 0h4m89 0h1m59 0h3m10 0h1m22 0h1m1 0h2m49 0h1m26 0h1m-384 1h1m75 0h2m8 0h1m21 0h1m1 0h4m93 0h1m62 0h4m6 0h1m22 0h1m3 0h2m46 0h1m28 0h1m-386 1h1m74 0h2m10 0h1m20 0h3m97 0h1m66 0h4m1 0h1m22 0h1m6 0h2m43 0h1m30 0h1m-388 1h1m74 0h1m13 0h1m17 0h2m100 0h1m70 0h2m22 0h1m8 0h1m41 0h1m32 0h1m-390 1h1m73 0h2m14 0h1m15 0h2m102 0h1m72 0h2m19 0h1m10 0h2m38 0h1m34 0h1m-392 1h1m72 0h2m17 0h1m12 0h2m104 0h1m74 0h2m16 0h1m13 0h2m36 0h1m35 0h1m-394 1h1m71 0h2m19 0h1m10 0h2m106 0h1m76 0h2m14 0h1m15 0h2m33 0h1m37 0h1m-396 1h1m71 0h1m22 0h1m7 0h2m108 0h1m78 0h2m11 0h1m18 0h1m31 0h1m39 0h1m-398 1h1m70 0h3m22 0h1m5 0h2m110 0h1m80 0h2m9 0h1m19 0h2m28 0h1m41 0h1m-400 1h1m70 0h1m3 0h1m22 0h1m2 0h2m111 0h1m83 0h2m6 0h1m22 0h1m27 0h1m42 0h1m-402 1h1m70 0h1m4 0h1m22 0h3m113 0h1m85 0h2m4 0h1m23 0h1m25 0h1m44 0h1m-404 1h1m69 0h2m6 0h1m20 0h2m115 0h1m87 0h2m1 0h1m23 0h1m1 0h2m22 0h1m46 0h1m-406 1h1m69 0h1m8 0h1m18 0h2m117 0h1m89 0h2m23 0h1m3 0h1m20 0h1m48 0h1m-408 1h1m68 0h2m10 0h1m15 0h2m119 0h1m91 0h2m20 0h1m5 0h2m17 0h1m50 0h1m-410 1h1m68 0h1m13 0h1m12 0h2m121 0h1m93 0h2m17 0h1m8 0h1m16 0h1m51 0h1m-412 1h1m68 0h1m14 0h1m10 0h2m2 0h1m120 0h1m95 0h2m14 0h1m10 0h1m14 0h1m53 0h1m-414 1h1m67 0h2m16 0h1m8 0h1m4 0h1m90 0h33m95 0h1m13 0h1m11 0h2m11 0h1m55 0h1m-416 1h1m67 0h1m18 0h1m6 0h2m6 0h1m82 0h7m33 0h7m89 0h2m10 0h1m14 0h1m9 0h1m57 0h1m-418 1h1m66 0h2m20 0h1m4 0h1m8 0h1m75 0h7m47 0h6m85 0h1m8 0h1m16 0h2m6 0h1m59 0h1m-420 1h1m66 0h1m22 0h1m2 0h2m10 0h1m68 0h6m60 0h7m79 0h2m5 0h1m19 0h1m5 0h1m60 0h1m-422 1h1m66 0h2m23 0h2m12 0h1m63 0h5m73 0h5m76 0h1m4 0h1m20 0h1m3 0h1m62 0h1m-424 1h1m65 0h2m2 0h1m21 0h2m14 0h1m58 0h4m83 0h4m73 0h2m1 0h1m22 0h3m64 0h1m-426 1h1m65 0h1m4 0h1m19 0h2m16 0h1m55 0h3m91 0h3m72 0h2m23 0h2m65 0h1m-427 1h1m64 0h1m6 0h1m16 0h2m19 0h1m51 0h3m97 0h3m71 0h2m20 0h1m2 0h1m64 0h1m-428 1h1m63 0h2m8 0h1m14 0h1m21 0h1m48 0h3m103 0h3m70 0h1m19 0h1m3 0h1m64 0h1m-430 1h1m63 0h1m11 0h1m12 0h1m23 0h1m43 0h4m109 0h4m67 0h1m17 0h1m5 0h2m63 0h1m-432 1h1m63 0h1m12 0h1m10 0h2m24 0h1m40 0h3m117 0h3m65 0h1m15 0h1m8 0h1m63 0h1m-433 1h1m62 0h1m14 0h1m8 0h1m27 0h1m36 0h3m123 0h3m63 0h2m12 0h1m10 0h1m62 0h1m-434 1h1m62 0h1m16 0h1m6 0h1m29 0h1m32 0h3m129 0h3m62 0h1m11 0h1m11 0h1m62 0h1m-436 1h1m62 0h1m18 0h1m4 0h1m30 0h1m29 0h3m135 0h3m60 0h1m9 0h1m13 0h1m62 0h1m-438 1h1m61 0h2m19 0h1m2 0h2m32 0h1m25 0h3m141 0h3m58 0h2m6 0h1m15 0h2m61 0h1m-440 1h1m61 0h1m22 0h2m34 0h1m23 0h2m147 0h2m56 0h1m1 0h1m4 0h1m18 0h1m61 0h1m-442 1h1m61 0h1m23 0h1m36 0h1m20 0h2m151 0h2m53 0h1m3 0h1m3 0h1m19 0h1m61 0h1m-444 1h1m61 0h1m22 0h2m37 0h1m17 0h3m155 0h2m51 0h1m4 0h3m21 0h1m61 0h1m-446 1h1m61 0h1m1 0h1m20 0h1m40 0h1m14 0h2m160 0h2m48 0h1m7 0h1m22 0h1m61 0h1m-448 1h1m60 0h2m3 0h1m18 0h1m41 0h1m12 0h2m164 0h2m45 0h1m9 0h1m22 0h1m61 0h1m-450 1h1m1 0h1m58 0h1m6 0h1m15 0h2m43 0h1m9 0h2m168 0h2m42 0h1m11 0h1m21 0h3m60 0h1m-452 1h1m3 0h1m56 0h1m8 0h1m13 0h1m45 0h1m7 0h2m172 0h2m40 0h1m12 0h2m18 0h1m3 0h1m60 0h1m-453 1h1m4 0h2m53 0h1m10 0h1m11 0h1m47 0h1m4 0h2m176 0h2m37 0h1m15 0h1m16 0h1m5 0h1m59 0h1m-454 1h1m7 0h1m51 0h1m12 0h1m9 0h1m48 0h1m2 0h2m180 0h2m34 0h1m17 0h1m14 0h1m7 0h1m59 0h1m-456 1h1m9 0h1m49 0h1m14 0h1m7 0h1m50 0h2m184 0h2m31 0h1m19 0h1m12 0h1m9 0h1m59 0h1m-458 1h1m11 0h1m47 0h1m16 0h1m4 0h2m49 0h2m188 0h2m28 0h1m21 0h1m10 0h1m11 0h1m59 0h1m-459 1h1m12 0h2m44 0h1m18 0h1m2 0h1m50 0h1m192 0h2m26 0h1m22 0h2m8 0h1m12 0h1m58 0h1m-460 1h1m15 0h1m42 0h1m20 0h2m49 0h2m109 0h1m85 0h2m23 0h1m25 0h1m6 0h1m14 0h1m58 0h1m-462 1h1m17 0h1m40 0h1m21 0h1m49 0h1m111 0h1m87 0h1m21 0h1m27 0h1m4 0h1m16 0h1m58 0h1m-463 1h1m18 0h1m38 0h1m21 0h1m48 0h2m112 0h1m88 0h2m18 0h1m29 0h1m2 0h1m18 0h1m57 0h1m-464 1h1m20 0h2m35 0h1m21 0h1m48 0h1m114 0h1m90 0h1m16 0h1m31 0h2m20 0h1m57 0h1m-466 1h1m23 0h1m33 0h1m21 0h1m47 0h2m115 0h1m91 0h2m14 0h1m32 0h1m21 0h1m57 0h1m-467 1h1m24 0h1m32 0h2m19 0h1m46 0h2m117 0h1m93 0h2m11 0h1m34 0h1m20 0h1m57 0h1m-468 1h1m26 0h1m30 0h1m2 0h1m17 0h1m46 0h1m118 0h1m96 0h1m9 0h1m36 0h1m20 0h1m57 0h1m-469 1h1m27 0h2m27 0h1m4 0h1m15 0h1m45 0h2m119 0h1m97 0h2m6 0h1m38 0h1m20 0h1m56 0h1m-470 1h1m30 0h1m25 0h1m6 0h1m13 0h1m45 0h1m121 0h1m99 0h1m5 0h1m39 0h1m18 0h1m1 0h1m56 0h1m-472 1h1m32 0h1m23 0h1m8 0h1m11 0h1m44 0h2m122 0h1m100 0h2m2 0h1m41 0h1m16 0h1m3 0h1m56 0h1m-473 1h1m33 0h2m20 0h1m10 0h2m8 0h1m44 0h1m124 0h1m102 0h2m43 0h1m14 0h1m5 0h1m55 0h1m-474 1h1m36 0h1m19 0h1m12 0h1m6 0h1m44 0h1m125 0h1m148 0h1m12 0h1m6 0h1m56 0h1m-476 1h1m38 0h1m17 0h1m14 0h1m4 0h1m43 0h2m126 0h1m104 0h2m43 0h1m10 0h1m8 0h1m56 0h1m-477 1h1m39 0h1m15 0h1m16 0h1m2 0h1m43 0h1m235 0h1m43 0h1m8 0h1m10 0h1m55 0h1m-478 1h1m41 0h2m12 0h1m18 0h2m43 0h1m237 0h1m43 0h1m6 0h1m12 0h1m55 0h1m-480 1h1m44 0h1m10 0h1m19 0h1m43 0h1m239 0h1m43 0h1m4 0h1m14 0h1m55 0h1m-481 1h1m45 0h1m8 0h1m19 0h1m42 0h2m241 0h1m43 0h1m2 0h1m16 0h1m54 0h1m-482 1h1m47 0h1m6 0h1m19 0h1m42 0h1m244 0h2m42 0h2m18 0h1m54 0h1m-484 1h1m49 0h2m4 0h1m18 0h1m42 0h1m247 0h1m42 0h1m18 0h1m55 0h1m-485 1h1m51 0h1m2 0h1m18 0h1m42 0h1m249 0h1m42 0h1m18 0h1m54 0h1m-486 1h1m53 0h2m18 0h1m42 0h1m251 0h1m42 0h1m18 0h1m54 0h1m-488 1h1m54 0h2m18 0h1m40 0h2m253 0h2m40 0h1m19 0h1m54 0h1m-489 1h1m54 0h1m1 0h2m15 0h1m40 0h1m257 0h1m40 0h1m18 0h1m54 0h1m-490 1h1m54 0h1m4 0h1m13 0h1m40 0h1m215 0h1m43 0h1m40 0h1m18 0h1m54 0h1m-491 1h1m53 0h1m6 0h1m11 0h1m40 0h1m215 0h1m45 0h1m40 0h1m17 0h2m53 0h1m-492 1h1m53 0h1m8 0h2m8 0h1m40 0h1m216 0h1m46 0h1m40 0h1m14 0h2m2 0h1m53 0h1m-494 1h1m54 0h1m10 0h1m6 0h1m40 0h1m216 0h1m48 0h1m40 0h1m12 0h1m4 0h1m54 0h1m-495 1h1m53 0h1m12 0h1m5 0h1m39 0h1m217 0h1m49 0h1m39 0h1m11 0h1m6 0h1m53 0h1m-496 1h1m53 0h1m14 0h2m2 0h1m39 0h1m217 0h1m51 0h1m39 0h1m8 0h2m8 0h1m53 0h1m-497 1h1m53 0h1m16 0h2m39 0h1m218 0h1m52 0h1m39 0h1m6 0h1m10 0h1m53 0h1m-498 1h1m53 0h1m17 0h1m39 0h1m218 0h1m54 0h1m39 0h1m4 0h1m12 0h1m53 0h1m-499 1h1m52 0h1m18 0h1m38 0h1m219 0h1m55 0h1m38 0h1m2 0h2m14 0h1m52 0h1m-500 1h1m52 0h1m18 0h1m38 0h1m219 0h1m57 0h1m38 0h2m17 0h1m52 0h1m-501 1h1m52 0h1m17 0h1m38 0h1m220 0h1m58 0h1m38 0h1m17 0h1m52 0h1m-502 1h1m52 0h1m17 0h1m38 0h1m220 0h1m60 0h1m38 0h1m17 0h1m52 0h1m-503 1h1m51 0h1m18 0h1m37 0h1m283 0h1m37 0h1m18 0h1m51 0h1m-504 1h1m52 0h1m17 0h1m37 0h1m285 0h1m37 0h1m17 0h1m52 0h1m-505 1h1m51 0h1m17 0h1m37 0h1m287 0h1m37 0h1m17 0h1m51 0h1m-506 1h1m51 0h1m1 0h2m14 0h1m37 0h1m289 0h1m37 0h1m17 0h1m51 0h1m-507 1h1m50 0h1m4 0h1m12 0h1m37 0h1m291 0h1m37 0h1m17 0h1m50 0h1m-508 1h1m51 0h1m5 0h1m11 0h1m37 0h1m291 0h1m37 0h1m17 0h1m51 0h1m-509 1h1m50 0h1m7 0h2m8 0h1m37 0h1m293 0h1m37 0h1m16 0h2m50 0h1m-510 1h1m50 0h1m10 0h1m6 0h1m37 0h1m295 0h1m37 0h1m13 0h2m2 0h1m50 0h1m-511 1h1m50 0h1m11 0h1m4 0h1m37 0h1m297 0h1m37 0h1m10 0h2m4 0h1m50 0h1m-511 1h1m49 0h1m13 0h2m2 0h1m36 0h1m299 0h1m36 0h1m8 0h2m7 0h1m49 0h1m-512 1h1m50 0h1m15 0h2m36 0h1m301 0h1m36 0h1m6 0h1m9 0h1m50 0h1m-513 1h1m49 0h1m17 0h1m36 0h1m301 0h1m36 0h1m4 0h2m11 0h1m49 0h1m-514 1h1m50 0h1m16 0h1m36 0h1m303 0h1m36 0h1m1 0h2m13 0h1m50 0h1m-515 1h1m49 0h1m17 0h1m35 0h1m305 0h1m35 0h2m16 0h1m49 0h1m-516 1h1m49 0h1m17 0h1m35 0h1m307 0h1m35 0h1m17 0h1m49 0h1m-517 1h1m49 0h1m16 0h1m35 0h1m309 0h1m35 0h1m16 0h1m49 0h1m-518 1h1m49 0h1m17 0h1m35 0h1m309 0h1m35 0h1m17 0h1m49 0h1m-519 1h1m49 0h1m16 0h1m35 0h1m311 0h1m35 0h1m16 0h1m49 0h1m-519 1h1m48 0h1m16 0h1m35 0h1m313 0h1m35 0h1m16 0h1m48 0h1m-520 1h1m49 0h1m16 0h1m34 0h1m315 0h1m34 0h1m16 0h1m49 0h1m-521 1h1m48 0h1m16 0h1m35 0h1m315 0h1m35 0h1m16 0h1m48 0h1m-522 1h1m48 0h1m1 0h2m13 0h1m35 0h1m317 0h1m35 0h1m16 0h1m48 0h1m-523 1h1m48 0h1m3 0h2m11 0h2m33 0h1m319 0h1m34 0h1m16 0h1m48 0h1m-524 1h1m48 0h1m6 0h1m9 0h1m2 0h2m31 0h1m319 0h1m35 0h1m16 0h1m48 0h1m-525 1h1m48 0h1m7 0h2m7 0h1m4 0h2m28 0h1m321 0h1m34 0h1m14 0h3m48 0h1m-526 1h1m48 0h1m10 0h2m4 0h1m7 0h2m25 0h1m323 0h1m34 0h1m11 0h2m3 0h1m48 0h1m-527 1h1m48 0h1m12 0h2m2 0h1m9 0h2m23 0h1m323 0h1m34 0h1m9 0h2m5 0h1m47 0h2m-527 1h1m47 0h1m15 0h2m12 0h1m21 0h1m325 0h1m34 0h1m6 0h2m8 0h1m44 0h2m1 0h1m-528 1h1m48 0h1m16 0h1m13 0h2m19 0h1m325 0h1m34 0h1m4 0h2m10 0h1m41 0h3m4 0h1m-529 1h1m48 0h1m15 0h1m16 0h2m16 0h1m327 0h1m34 0h1m1 0h2m12 0h1m39 0h2m7 0h1m-530 1h1m48 0h1m16 0h1m18 0h2m13 0h1m329 0h1m33 0h2m15 0h1m35 0h3m10 0h1m-531 1h1m48 0h1m15 0h1m21 0h1m12 0h1m329 0h1m34 0h1m15 0h1m32 0h3m13 0h1m-532 1h1m48 0h1m16 0h1m22 0h2m9 0h1m331 0h1m33 0h1m16 0h1m29 0h2m17 0h1m-533 1h1m48 0h1m15 0h1m25 0h2m6 0h1m333 0h1m33 0h1m15 0h1m26 0h3m19 0h1m-534 1h1m48 0h1m16 0h1m27 0h2m4 0h1m333 0h1m33 0h1m16 0h1m23 0h2m23 0h1m-535 1h1m48 0h1m15 0h1m30 0h2m1 0h1m335 0h1m33 0h1m15 0h1m20 0h3m25 0h1m-535 1h1m47 0h1m16 0h1m32 0h1m337 0h1m32 0h1m16 0h1m17 0h2m28 0h1m-536 1h1m48 0h1m15 0h1m33 0h1m337 0h1m33 0h1m15 0h1m14 0h3m31 0h1m-537 1h1m47 0h1m16 0h1m32 0h1m339 0h1m31 0h2m16 0h1m10 0h3m34 0h1m-537 1h1m47 0h2m14 0h1m33 0h1m339 0h1m29 0h2m2 0h1m15 0h1m8 0h2m37 0h1m-538 1h1m47 0h1m2 0h2m12 0h1m32 0h1m341 0h1m26 0h2m4 0h1m16 0h1m4 0h3m40 0h1m-539 1h1m47 0h1m4 0h2m9 0h1m33 0h1m341 0h1m24 0h2m7 0h1m15 0h1m2 0h2m43 0h1m-539 1h1m46 0h1m7 0h2m7 0h1m32 0h1m343 0h1m21 0h2m9 0h1m16 0h2m45 0h1m-539 1h1m46 0h1m9 0h2m4 0h1m33 0h1m343 0h1m19 0h2m12 0h1m13 0h3m46 0h1m-540 1h1m47 0h1m11 0h2m2 0h1m32 0h1m345 0h1m15 0h3m14 0h1m11 0h2m2 0h1m47 0h1m-541 1h1m46 0h1m14 0h2m33 0h1m345 0h1m13 0h2m18 0h1m7 0h3m5 0h1m46 0h1m-541 1h1m46 0h1m15 0h1m32 0h1m347 0h1m10 0h2m20 0h1m4 0h3m8 0h1m46 0h1m-542 1h1m46 0h1m15 0h1m33 0h1m347 0h1m8 0h2m23 0h1m1 0h2m12 0h1m46 0h1m-543 1h1m46 0h1m15 0h1m32 0h1m349 0h1m5 0h2m25 0h2m14 0h1m46 0h1m-543 1h1m46 0h1m15 0h1m32 0h1m349 0h1m3 0h2m27 0h1m15 0h1m46 0h1m-544 1h1m46 0h1m15 0h1m32 0h1m351 0h3m30 0h1m15 0h1m46 0h1m-545 1h1m46 0h1m15 0h1m32 0h1m384 0h1m15 0h1m46 0h1m-545 1h1m46 0h1m15 0h1m31 0h1m353 0h1m31 0h1m15 0h1m46 0h1m-546 1h1m46 0h1m16 0h1m31 0h1m353 0h1m31 0h1m16 0h1m46 0h1m-547 1h1m46 0h1m15 0h1m32 0h1m353 0h1m32 0h1m15 0h1m46 0h1m-547 1h1m46 0h1m15 0h1m31 0h1m355 0h1m31 0h1m15 0h1m46 0h1m-548 1h1m47 0h1m15 0h1m31 0h1m355 0h1m31 0h1m15 0h1m47 0h1m-549 1h1m46 0h1m16 0h1m30 0h1m357 0h1m30 0h1m16 0h1m46 0h1m-549 1h1m46 0h1m15 0h1m31 0h1m357 0h1m31 0h1m15 0h1m46 0h1m-550 1h1m47 0h2m14 0h1m30 0h1m359 0h1m30 0h1m15 0h1m47 0h1m-551 1h1m46 0h1m2 0h3m10 0h1m31 0h1m359 0h1m31 0h1m15 0h1m46 0h1m-551 1h1m46 0h1m5 0h4m6 0h1m31 0h1m359 0h1m31 0h1m15 0h1m46 0h1m-551 1h1m45 0h1m10 0h3m2 0h1m31 0h1m361 0h1m31 0h1m13 0h3m45 0h1m-552 1h1m46 0h1m13 0h3m31 0h1m361 0h1m31 0h1m10 0h3m2 0h1m46 0h1m-553 1h1m46 0h1m15 0h1m31 0h1m361 0h1m31 0h1m6 0h4m5 0h1m46 0h1m-553 1h1m45 0h1m15 0h1m31 0h1m363 0h1m31 0h1m2 0h3m10 0h1m45 0h1m-553 1h1m45 0h1m15 0h1m31 0h1m363 0h1m31 0h3m13 0h1m45 0h1m-554 1h1m46 0h1m15 0h1m31 0h1m363 0h1m31 0h1m15 0h1m46 0h1m-555 1h1m46 0h1m15 0h1m30 0h1m365 0h1m30 0h1m15 0h1m46 0h1m-555 1h1m45 0h1m15 0h1m31 0h1m365 0h1m31 0h1m15 0h1m45 0h1m-555 1h1m45 0h1m15 0h1m31 0h1m365 0h1m31 0h1m15 0h1m45 0h1m-556 1h1m46 0h1m15 0h1m30 0h1m367 0h1m30 0h1m15 0h1m46 0h1m-557 1h1m46 0h1m15 0h1m30 0h1m367 0h1m30 0h1m15 0h1m46 0h1m-557 1h1m45 0h1m15 0h1m31 0h1m367 0h1m31 0h1m15 0h1m45 0h1m-557 1h1m45 0h1m15 0h1m30 0h1m369 0h1m30 0h1m15 0h1m45 0h1m-557 1h1m45 0h1m15 0h1m30 0h1m369 0h1m30 0h1m15 0h1m45 0h1m-558 1h1m46 0h1m15 0h1m30 0h1m369 0h1m30 0h1m15 0h1m46 0h1m-559 1h1m45 0h1m15 0h1m31 0h1m369 0h1m31 0h1m15 0h1m45 0h1m-559 1h1m45 0h1m15 0h1m30 0h1m371 0h1m30 0h1m15 0h1m45 0h1m-559 1h1m45 0h4m12 0h1m30 0h1m371 0h1m30 0h1m15 0h1m45 0h1m-559 1h1m45 0h1m3 0h4m7 0h1m31 0h1m371 0h1m31 0h1m14 0h1m45 0h1m-560 1h1m45 0h1m8 0h4m3 0h1m30 0h1m373 0h1m30 0h1m15 0h1m45 0h1m-561 1h1m45 0h1m12 0h4m30 0h1m373 0h1m30 0h1m15 0h1m45 0h1m-561 1h1m45 0h1m15 0h1m30 0h1m373 0h1m30 0h1m12 0h4m45 0h1m-561 1h1m45 0h1m14 0h1m30 0h1m375 0h1m30 0h1m7 0h4m3 0h1m45 0h1m-561 1h1m45 0h1m14 0h1m30 0h1m347 0h2m26 0h1m30 0h1m3 0h4m7 0h1m45 0h1m-561 1h1m45 0h1m14 0h1m30 0h1m345 0h2m28 0h1m30 0h4m11 0h1m45 0h1m-561 1h1m44 0h1m15 0h1m29 0h1m344 0h2m31 0h1m29 0h1m15 0h1m44 0h1m-562 1h1m45 0h1m14 0h1m30 0h1m342 0h2m33 0h1m30 0h1m14 0h1m45 0h1m-563 1h1m45 0h1m14 0h1m30 0h1m340 0h2m35 0h1m30 0h1m14 0h1m45 0h1m-563 1h1m45 0h1m14 0h1m30 0h1m338 0h2m37 0h1m30 0h1m14 0h1m45 0h1m-563 1h1m45 0h1m14 0h1m29 0h1m379 0h1m29 0h1m14 0h1m45 0h1m-563 1h1m45 0h1m13 0h1m30 0h1m379 0h1m30 0h1m13 0h1m45 0h1m-563 1h4m41 0h1m14 0h1m30 0h1m379 0h1m30 0h1m14 0h1m44 0h1m-563 1h1m3 0h7m34 0h1m14 0h1m30 0h1m379 0h1m30 0h1m14 0h1m44 0h1m-563 1h1m10 0h7m27 0h1m14 0h1m30 0h1m379 0h1m30 0h1m14 0h1m44 0h1m-563 1h1m17 0h8m19 0h1m14 0h1m29 0h1m381 0h1m29 0h1m14 0h1m44 0h1m-563 1h1m25 0h7m11 0h1m15 0h1m29 0h1m381 0h1m29 0h1m15 0h1m43 0h1m-564 1h1m33 0h7m4 0h1m14 0h1m30 0h1m381 0h1m30 0h1m14 0h1m44 0h1m-565 1h1m40 0h9m10 0h1m30 0h1m381 0h1m30 0h1m14 0h1m44 0h1m-565 1h1m44 0h1m4 0h6m4 0h1m30 0h1m381 0h1m30 0h1m14 0h1m44 0h1m-565 1h1m44 0h1m10 0h5m30 0h1m381 0h1m30 0h1m14 0h1m44 0h1m-565 1h1m44 0h1m14 0h1m29 0h1m383 0h1m29 0h1m14 0h1m44 0h1m-565 1h1m43 0h1m15 0h1m29 0h1m356 0h1m26 0h1m29 0h1m11 0h5m43 0h1m-565 1h1m43 0h1m15 0h1m29 0h1m355 0h1m27 0h1m29 0h1m4 0h7m4 0h1m43 0h1m-565 1h1m43 0h1m14 0h1m30 0h1m355 0h1m27 0h1m30 0h4m11 0h1m43 0h1m-565 1h1m43 0h1m14 0h1m30 0h1m354 0h1m28 0h1m30 0h1m14 0h1m43 0h1m-565 1h1m43 0h1m14 0h1m30 0h1m354 0h1m28 0h1m30 0h1m14 0h1m43 0h1m-566 1h1m44 0h1m14 0h1m30 0h1m353 0h1m29 0h1m30 0h1m14 0h1m44 0h1m-567 1h1m44 0h1m14 0h1m29 0h1m354 0h1m30 0h1m29 0h1m14 0h1m44 0h1m-567 1h1m44 0h1m14 0h1m29 0h1m353 0h1m31 0h1m29 0h1m14 0h1m44 0h1m-567 1h1m44 0h1m14 0h1m29 0h1m26 0h3m324 0h1m31 0h1m29 0h1m14 0h1m44 0h1m-567 1h1m44 0h1m14 0h1m29 0h1m29 0h6m317 0h1m32 0h1m29 0h1m14 0h1m44 0h1m-567 1h1m44 0h1m14 0h1m29 0h1m35 0h4m313 0h1m32 0h1m29 0h1m14 0h1m44 0h1m-567 1h1m44 0h1m14 0h1m29 0h1m351 0h1m33 0h1m29 0h1m14 0h1m44 0h1m-567 1h1m44 0h1m14 0h1m29 0h1m351 0h1m33 0h1m29 0h1m14 0h1m44 0h1m-567 1h1m44 0h1m14 0h1m28 0h1m351 0h1m35 0h1m28 0h1m14 0h1m44 0h1m-567 1h1m44 0h1m14 0h1m28 0h1m351 0h1m35 0h1m28 0h1m14 0h1m44 0h1m-568 1h1m45 0h1m14 0h1m28 0h1m350 0h1m36 0h1m28 0h1m14 0h1m45 0h1m-569 1h1m45 0h1m14 0h1m28 0h1m350 0h1m36 0h1m28 0h1m14 0h1m45 0h1m-569 1h1m44 0h8m8 0h1m28 0h1m349 0h1m10 0h1m26 0h1m28 0h1m15 0h1m44 0h1m-569 1h1m44 0h1m7 0h8m29 0h1m349 0h1m9 0h1m27 0h1m29 0h1m14 0h1m44 0h1m-569 1h1m44 0h1m14 0h1m29 0h1m348 0h1m9 0h1m28 0h1m29 0h1m14 0h1m44 0h1m-569 1h1m44 0h1m14 0h1m29 0h1m348 0h1m8 0h1m29 0h1m29 0h1m14 0h1m44 0h1m-569 1h1m44 0h1m14 0h1m29 0h1m356 0h1m30 0h1m29 0h16m44 0h1m-569 1h1m44 0h1m14 0h1m29 0h1m355 0h1m31 0h1m29 0h1m14 0h1m44 0h1m-569 1h1m44 0h1m14 0h1m29 0h1m354 0h1m32 0h1m29 0h1m14 0h1m44 0h1m-569 1h1m44 0h1m14 0h1m29 0h1m353 0h1m33 0h1m29 0h1m14 0h1m44 0h1m-569 1h1m44 0h1m14 0h1m29 0h1m352 0h1m34 0h1m29 0h1m14 0h1m44 0h1m-569 1h1m44 0h1m14 0h1m29 0h1m351 0h1m35 0h1m29 0h1m14 0h1m44 0h1m-569 1h1m44 0h1m14 0h1m29 0h1m350 0h1m36 0h1m29 0h1m14 0h1m44 0h1m-569 1h1m44 0h1m14 0h1m29 0h1m349 0h1m37 0h1m29 0h1m14 0h1m44 0h1m-569 1h1m44 0h1m14 0h31m25 0h13m311 0h2m36 0h31m14 0h1m44 0h1m-569 1h1m44 0h1m14 0h1m29 0h1m351 0h2m34 0h1m29 0h1m14 0h1m44 0h1m-569 1h1m44 0h1m14 0h1m29 0h1m353 0h2m32 0h1m29 0h1m14 0h1m44 0h1m-569 1h1m44 0h1m14 0h1m29 0h1m355 0h3m29 0h1m29 0h1m14 0h1m44 0h1m-569 1h1m44 0h1m14 0h1m29 0h1m358 0h2m27 0h1m29 0h1m14 0h1m44 0h1m-569 1h1m44 0h1m14 0h1m29 0h1m360 0h2m25 0h1m29 0h1m14 0h1m44 0h1m-569 1h1m44 0h1m14 0h1m29 0h1m387 0h1m29 0h1m14 0h1m44 0h1m-569 1h1m44 0h1m14 0h1m29 0h1m387 0h1m29 0h1m14 0h1m44 0h1m-569 1h1m44 0h16m29 0h1m387 0h1m29 0h1m14 0h1m44 0h1m-569 1h1m44 0h1m14 0h1m29 0h1m387 0h1m29 0h1m14 0h1m44 0h1m-569 1h1m44 0h1m14 0h1m29 0h1m387 0h1m29 0h1m14 0h1m44 0h1m-569 1h1m44 0h1m15 0h1m28 0h1m387 0h1m28 0h8m8 0h1m44 0h1m-569 1h1m45 0h1m14 0h1m28 0h1m387 0h1m28 0h1m7 0h8m45 0h1m-569 1h1m45 0h1m14 0h1m28 0h1m387 0h1m28 0h1m14 0h1m45 0h1m-568 1h1m44 0h1m14 0h1m28 0h1m387 0h1m28 0h1m14 0h1m44 0h1m-567 1h1m44 0h1m14 0h1m28 0h1m387 0h1m28 0h1m14 0h1m44 0h1m-567 1h1m44 0h1m14 0h1m28 0h1m387 0h1m28 0h1m14 0h1m44 0h1m-567 1h1m44 0h1m14 0h1m29 0h1m385 0h1m29 0h1m14 0h1m44 0h1m-567 1h1m44 0h1m14 0h1m29 0h1m385 0h1m29 0h1m14 0h1m44 0h1m-567 1h1m44 0h1m14 0h1m29 0h1m385 0h1m29 0h1m14 0h1m44 0h1m-567 1h1m44 0h1m14 0h1m29 0h1m385 0h1m29 0h1m14 0h1m44 0h1m-567 1h1m44 0h1m14 0h1m29 0h1m385 0h1m29 0h1m14 0h1m44 0h1m-567 1h1m44 0h1m14 0h1m29 0h1m385 0h1m29 0h1m14 0h1m44 0h1m-567 1h1m44 0h1m14 0h1m29 0h1m385 0h1m29 0h1m14 0h1m44 0h1m-566 1h1m43 0h1m14 0h1m30 0h1m383 0h1m30 0h1m14 0h1m43 0h1m-565 1h1m43 0h1m14 0h1m30 0h1m383 0h1m30 0h1m14 0h1m43 0h1m-565 1h1m43 0h1m14 0h1m30 0h1m383 0h1m30 0h1m14 0h1m43 0h1m-565 1h1m43 0h1m11 0h5m29 0h1m383 0h1m29 0h1m15 0h1m43 0h1m-565 1h1m43 0h1m4 0h7m4 0h1m29 0h1m383 0h1m29 0h1m15 0h1m43 0h1m-565 1h1m44 0h4m11 0h1m29 0h1m383 0h1m29 0h1m14 0h1m44 0h1m-565 1h1m44 0h1m14 0h1m30 0h1m381 0h1m30 0h1m14 0h1m44 0h1m-565 1h1m44 0h1m14 0h1m30 0h1m381 0h1m30 0h5m10 0h1m44 0h1m-565 1h1m44 0h1m14 0h1m30 0h1m381 0h1m30 0h1m4 0h6m4 0h1m44 0h1m-565 1h1m44 0h1m14 0h1m30 0h1m381 0h1m30 0h1m10 0h9m40 0h1m-564 1h1m43 0h1m14 0h1m30 0h1m381 0h1m30 0h1m14 0h1m4 0h7m32 0h1m-563 1h1m44 0h1m14 0h1m29 0h1m381 0h1m29 0h1m14 0h1m12 0h7m25 0h1m-563 1h1m44 0h1m14 0h1m29 0h1m381 0h1m29 0h1m14 0h1m19 0h8m17 0h1m-563 1h1m44 0h1m14 0h1m30 0h1m379 0h1m30 0h1m14 0h1m27 0h7m10 0h1m-563 1h1m44 0h1m14 0h1m30 0h1m379 0h1m30 0h1m14 0h1m34 0h7m3 0h1m-563 1h1m45 0h1m13 0h1m30 0h1m379 0h1m30 0h1m13 0h1m42 0h4m-563 1h1m45 0h1m14 0h1m29 0h1m379 0h1m29 0h1m14 0h1m45 0h1m-563 1h1m45 0h1m14 0h1m29 0h1m379 0h1m29 0h1m14 0h1m45 0h1m-563 1h1m45 0h1m14 0h1m30 0h1m377 0h1m30 0h1m14 0h1m45 0h1m-563 1h1m45 0h1m14 0h1m30 0h1m377 0h1m30 0h1m14 0h1m45 0h1m-562 1h1m44 0h1m15 0h1m29 0h1m377 0h1m29 0h1m15 0h1m44 0h1m-561 1h1m45 0h1m14 0h1m29 0h1m377 0h1m29 0h1m14 0h1m45 0h1m-561 1h1m45 0h1m11 0h4m30 0h1m375 0h1m30 0h1m14 0h1m45 0h1m-561 1h1m45 0h1m7 0h4m3 0h1m30 0h1m375 0h1m30 0h1m14 0h1m45 0h1m-561 1h1m45 0h1m3 0h4m8 0h1m29 0h1m375 0h1m29 0h1m15 0h1m45 0h1m-561 1h1m45 0h4m12 0h1m30 0h1m373 0h1m30 0h1m15 0h1m45 0h1m-561 1h1m45 0h1m15 0h1m30 0h1m373 0h1m30 0h4m12 0h1m45 0h1m-561 1h1m46 0h1m14 0h1m30 0h1m373 0h1m30 0h1m3 0h4m7 0h1m46 0h1m-560 1h1m45 0h1m15 0h1m30 0h1m371 0h1m30 0h1m8 0h4m3 0h1m45 0h1m-559 1h1m45 0h1m15 0h1m30 0h1m371 0h1m30 0h1m12 0h4m45 0h1m-559 1h1m45 0h1m15 0h1m30 0h1m371 0h1m30 0h1m15 0h1m45 0h1m-559 1h1m46 0h1m14 0h1m31 0h1m369 0h1m31 0h1m14 0h1m46 0h1m-559 1h1m46 0h1m15 0h1m30 0h1m369 0h1m30 0h1m15 0h1m46 0h1m-558 1h1m45 0h1m15 0h1m30 0h1m369 0h1m30 0h1m15 0h1m45 0h1m-557 1h1m45 0h1m15 0h1m30 0h1m369 0h1m30 0h1m15 0h1m45 0h1m-557 1h1m45 0h1m15 0h1m31 0h1m367 0h1m31 0h1m15 0h1m45 0h1m-557 1h1m46 0h1m15 0h1m30 0h1m367 0h1m30 0h1m15 0h1m46 0h1m-557 1h1m46 0h1m15 0h1m30 0h1m367 0h1m30 0h1m15 0h1m46 0h1m-556 1h1m45 0h1m15 0h1m31 0h1m365 0h1m31 0h1m15 0h1m45 0h1m-555 1h1m45 0h1m16 0h1m30 0h1m365 0h1m30 0h1m16 0h1m45 0h1m-555 1h1m46 0h1m15 0h1m30 0h1m365 0h1m30 0h1m15 0h1m46 0h1m-555 1h1m46 0h1m15 0h1m31 0h1m363 0h1m31 0h1m15 0h1m46 0h1m-554 1h1m45 0h1m13 0h3m31 0h1m363 0h1m31 0h1m15 0h1m45 0h1m-553 1h1m45 0h1m10 0h3m3 0h1m30 0h1m363 0h1m30 0h1m16 0h1m45 0h1m-553 1h1m46 0h1m5 0h4m6 0h1m31 0h1m361 0h1m31 0h1m15 0h1m46 0h1m-553 1h1m46 0h1m2 0h3m10 0h1m31 0h1m361 0h1m31 0h3m13 0h1m46 0h1m-552 1h1m46 0h2m13 0h1m31 0h1m361 0h1m31 0h1m2 0h3m9 0h1m46 0h1m-551 1h1m46 0h1m15 0h1m31 0h1m359 0h1m31 0h1m6 0h4m5 0h1m46 0h1m-551 1h1m46 0h1m15 0h1m31 0h1m359 0h1m31 0h1m10 0h3m2 0h1m46 0h1m-550 1h1m46 0h1m15 0h1m30 0h1m359 0h1m30 0h1m14 0h2m46 0h1m-549 1h1m46 0h1m15 0h1m31 0h1m357 0h1m31 0h1m15 0h1m46 0h1m-549 1h1m46 0h1m16 0h1m30 0h1m357 0h1m30 0h1m16 0h1m46 0h1m-549 1h1m47 0h1m15 0h1m31 0h1m355 0h1m31 0h1m15 0h1m47 0h1m-548 1h1m46 0h1m15 0h1m31 0h1m355 0h1m31 0h1m15 0h1m46 0h1m-547 1h1m46 0h1m16 0h1m31 0h1m353 0h1m31 0h1m16 0h1m46 0h1m-547 1h1m46 0h1m16 0h1m31 0h1m353 0h1m31 0h1m16 0h1m46 0h1m-546 1h1m46 0h1m15 0h1m32 0h1m351 0h1m32 0h1m15 0h1m46 0h1m-545 1h1m46 0h1m15 0h1m384 0h1m32 0h1m15 0h1m46 0h1m-545 1h1m46 0h1m16 0h1m29 0h2m1 0h1m349 0h1m32 0h1m16 0h1m46 0h1m-544 1h1m46 0h1m15 0h1m27 0h2m3 0h1m349 0h1m32 0h1m15 0h1m46 0h1m-543 1h1m46 0h1m14 0h2m25 0h2m6 0h1m347 0h1m33 0h1m15 0h1m46 0h1m-543 1h1m47 0h1m11 0h2m1 0h1m23 0h2m8 0h1m347 0h1m33 0h1m14 0h1m47 0h1m-542 1h1m46 0h1m8 0h3m4 0h1m20 0h2m11 0h1m345 0h1m33 0h1m15 0h1m46 0h1m-541 1h1m46 0h1m5 0h3m7 0h1m18 0h2m13 0h1m345 0h1m33 0h2m14 0h1m46 0h1m-541 1h1m47 0h1m2 0h2m11 0h1m14 0h3m16 0h1m343 0h1m33 0h1m2 0h2m11 0h1m47 0h1m-540 1h1m46 0h3m13 0h1m12 0h2m19 0h1m343 0h1m33 0h1m4 0h2m9 0h1m46 0h1m-539 1h1m45 0h3m15 0h1m9 0h2m22 0h1m341 0h1m33 0h1m7 0h2m6 0h1m47 0h1m-539 1h1m43 0h2m2 0h1m15 0h1m7 0h2m24 0h1m341 0h1m33 0h1m9 0h2m4 0h1m47 0h1m-538 1h1m39 0h3m5 0h1m15 0h1m4 0h2m27 0h1m339 0h1m33 0h1m12 0h2m1 0h1m47 0h1m-537 1h1m37 0h2m8 0h1m15 0h1m2 0h2m29 0h1m339 0h1m33 0h1m14 0h2m47 0h1m-537 1h1m34 0h3m11 0h1m15 0h2m32 0h1m337 0h1m33 0h1m15 0h1m48 0h1m-537 1h1m31 0h3m14 0h1m15 0h1m33 0h1m337 0h1m33 0h1m15 0h1m48 0h1m-536 1h1m28 0h2m18 0h1m15 0h1m33 0h1m335 0h2m32 0h1m15 0h1m48 0h1m-535 1h1m25 0h3m20 0h1m15 0h1m33 0h1m335 0h1m1 0h2m30 0h1m15 0h1m48 0h1m-535 1h1m23 0h2m23 0h1m16 0h1m33 0h1m333 0h1m4 0h2m27 0h1m16 0h1m48 0h1m-534 1h1m19 0h3m26 0h1m15 0h1m33 0h1m333 0h1m6 0h2m25 0h1m15 0h1m48 0h1m-533 1h1m17 0h2m29 0h1m16 0h1m33 0h1m331 0h1m9 0h2m22 0h1m16 0h1m48 0h1m-532 1h1m13 0h3m32 0h1m15 0h1m34 0h1m329 0h1m12 0h1m21 0h1m15 0h1m48 0h1m-531 1h1m10 0h3m35 0h1m14 0h3m33 0h1m329 0h1m13 0h2m18 0h1m16 0h1m48 0h1m-530 1h1m7 0h2m39 0h1m11 0h2m2 0h1m34 0h1m327 0h1m16 0h2m16 0h1m15 0h1m48 0h1m-529 1h1m4 0h3m41 0h1m9 0h2m5 0h1m34 0h1m325 0h1m19 0h2m13 0h1m16 0h1m48 0h1m-528 1h1m1 0h2m45 0h1m6 0h2m7 0h1m34 0h1m325 0h1m21 0h1m12 0h2m14 0h1m48 0h1m-527 1h2m47 0h1m4 0h2m10 0h1m34 0h1m323 0h1m23 0h2m9 0h1m2 0h2m12 0h1m48 0h1m-527 1h1m49 0h1m1 0h2m12 0h1m34 0h1m323 0h1m25 0h2m7 0h1m4 0h2m9 0h1m49 0h1m-526 1h1m48 0h2m15 0h1m34 0h1m321 0h1m28 0h2m4 0h1m7 0h1m8 0h1m48 0h1m-525 1h1m49 0h1m15 0h1m35 0h1m319 0h1m31 0h2m2 0h1m8 0h2m5 0h1m49 0h1m-524 1h1m48 0h1m16 0h1m34 0h1m319 0h1m33 0h2m11 0h2m3 0h1m48 0h1m-523 1h1m49 0h1m15 0h1m35 0h1m317 0h1m35 0h1m13 0h3m49 0h1m-522 1h1m48 0h1m16 0h1m35 0h1m315 0h1m35 0h1m16 0h1m48 0h1m-521 1h1m49 0h1m16 0h1m34 0h1m315 0h1m34 0h1m16 0h1m49 0h1m-520 1h1m48 0h1m16 0h1m35 0h1m313 0h1m35 0h1m16 0h1m48 0h1m-519 1h1m49 0h1m16 0h1m35 0h1m311 0h1m35 0h1m16 0h1m49 0h1m-519 1h1m49 0h1m17 0h1m35 0h1m309 0h1m35 0h1m17 0h1m49 0h1m-518 1h1m49 0h1m16 0h1m35 0h1m309 0h1m35 0h1m16 0h1m49 0h1m-517 1h1m49 0h1m17 0h1m35 0h1m307 0h1m35 0h1m17 0h1m49 0h1m-516 1h1m49 0h1m16 0h2m35 0h1m305 0h1m35 0h1m17 0h1m49 0h1m-515 1h1m50 0h1m13 0h2m1 0h1m36 0h1m303 0h1m36 0h1m16 0h1m50 0h1m-514 1h1m49 0h1m11 0h2m4 0h1m36 0h1m248 0h1m52 0h1m36 0h1m17 0h1m49 0h1m-513 1h1m50 0h1m8 0h2m6 0h1m37 0h1m248 0h1m50 0h1m37 0h2m15 0h1m50 0h1m-512 1h1m49 0h1m7 0h1m9 0h1m36 0h1m249 0h1m49 0h1m36 0h1m2 0h2m13 0h1m49 0h1m-511 1h1m50 0h1m4 0h2m10 0h1m37 0h1m248 0h1m48 0h1m37 0h1m4 0h1m11 0h1m50 0h1m-511 1h1m50 0h1m2 0h2m13 0h1m37 0h1m248 0h1m46 0h1m37 0h1m6 0h1m10 0h1m50 0h1m-510 1h1m50 0h2m16 0h1m37 0h1m248 0h1m44 0h1m37 0h1m8 0h2m7 0h1m50 0h1m-509 1h1m51 0h1m17 0h1m37 0h1m248 0h1m42 0h1m37 0h1m11 0h1m5 0h1m51 0h1m-508 1h1m50 0h1m18 0h1m36 0h1m248 0h1m42 0h1m36 0h1m13 0h1m4 0h1m50 0h1m-507 1h1m51 0h1m17 0h1m37 0h1m248 0h1m40 0h1m37 0h1m14 0h2m1 0h1m51 0h1m-506 1h1m51 0h1m17 0h1m37 0h1m248 0h1m38 0h1m37 0h1m17 0h1m51 0h1m-505 1h1m52 0h1m17 0h1m37 0h1m285 0h1m37 0h1m17 0h1m52 0h1m-504 1h1m51 0h1m18 0h1m37 0h1m283 0h1m37 0h1m18 0h1m51 0h1m-503 1h1m52 0h1m17 0h1m38 0h1m281 0h1m38 0h1m17 0h1m52 0h1m-502 1h1m52 0h1m17 0h1m38 0h1m279 0h1m38 0h1m17 0h1m52 0h1m-501 1h1m52 0h1m17 0h2m38 0h1m277 0h1m38 0h1m18 0h1m52 0h1m-500 1h1m52 0h1m14 0h2m2 0h1m38 0h1m275 0h1m38 0h1m18 0h1m52 0h1m-499 1h1m53 0h1m12 0h1m4 0h1m39 0h1m273 0h1m39 0h1m17 0h1m53 0h1m-498 1h1m53 0h1m10 0h1m6 0h1m39 0h1m271 0h1m39 0h2m16 0h1m53 0h1m-497 1h1m53 0h1m8 0h2m8 0h1m39 0h1m269 0h1m39 0h1m2 0h2m14 0h1m53 0h1m-496 1h1m53 0h1m6 0h1m11 0h1m39 0h1m267 0h1m39 0h1m5 0h1m12 0h1m53 0h1m-495 1h1m54 0h1m4 0h1m13 0h1m39 0h1m265 0h1m39 0h1m7 0h1m10 0h1m54 0h1m-494 1h1m53 0h1m2 0h2m14 0h1m40 0h1m263 0h1m40 0h1m8 0h2m8 0h1m53 0h1m-492 1h1m53 0h2m17 0h1m40 0h1m261 0h1m40 0h1m11 0h1m6 0h1m53 0h1m-491 1h1m54 0h1m18 0h1m40 0h1m259 0h1m40 0h1m13 0h1m4 0h1m54 0h1m-490 1h1m54 0h1m18 0h1m40 0h1m257 0h1m40 0h1m15 0h2m1 0h1m54 0h1m-488 1h1m53 0h1m19 0h1m40 0h2m253 0h2m40 0h1m18 0h2m53 0h1m-487 1h1m54 0h1m19 0h1m41 0h1m251 0h1m41 0h1m19 0h2m53 0h1m-486 1h1m54 0h1m18 0h1m42 0h1m249 0h1m42 0h1m18 0h1m2 0h1m51 0h1m-485 1h1m55 0h1m18 0h1m42 0h1m247 0h1m42 0h1m18 0h1m4 0h2m49 0h1m-484 1h1m55 0h1m17 0h2m42 0h1m244 0h2m42 0h1m18 0h1m7 0h1m47 0h1m-482 1h1m54 0h1m16 0h1m2 0h1m42 0h2m241 0h1m43 0h1m19 0h1m8 0h1m45 0h1m-481 1h1m55 0h1m14 0h1m4 0h1m43 0h1m239 0h1m43 0h1m19 0h1m10 0h1m44 0h1m-480 1h1m55 0h1m12 0h1m6 0h1m43 0h1m237 0h1m43 0h2m18 0h1m12 0h2m41 0h1m-478 1h1m55 0h1m10 0h1m8 0h1m43 0h1m235 0h1m43 0h1m2 0h1m16 0h1m15 0h1m39 0h1m-477 1h1m56 0h1m8 0h1m10 0h1m43 0h2m231 0h2m43 0h1m4 0h1m14 0h1m17 0h1m38 0h1m-476 1h1m56 0h1m6 0h1m12 0h1m274 0h1m44 0h1m6 0h1m12 0h1m19 0h1m36 0h1m-474 1h1m55 0h1m5 0h1m14 0h1m43 0h2m227 0h1m44 0h1m8 0h1m11 0h1m20 0h2m33 0h1m-473 1h1m56 0h1m3 0h1m16 0h1m41 0h1m2 0h2m223 0h2m44 0h1m10 0h2m8 0h1m23 0h1m32 0h1m-472 1h1m56 0h1m1 0h1m18 0h1m39 0h1m5 0h1m221 0h1m45 0h1m13 0h1m6 0h1m25 0h1m30 0h1m-470 1h1m56 0h1m20 0h1m38 0h1m6 0h2m217 0h2m45 0h1m15 0h1m4 0h1m27 0h1m28 0h1m-469 1h1m57 0h1m20 0h1m36 0h1m9 0h1m215 0h1m46 0h1m17 0h1m2 0h1m29 0h2m26 0h1m-468 1h1m57 0h1m20 0h1m34 0h1m11 0h2m211 0h2m46 0h1m19 0h2m32 0h1m24 0h1m-466 1h1m57 0h1m20 0h1m32 0h1m14 0h2m207 0h2m47 0h1m20 0h1m34 0h1m22 0h1m-465 1h1m57 0h1m20 0h2m31 0h1m16 0h1m205 0h1m48 0h1m21 0h1m35 0h2m20 0h1m-464 1h1m57 0h1m18 0h1m2 0h1m29 0h1m18 0h2m201 0h2m48 0h1m21 0h1m38 0h1m18 0h1m-463 1h1m58 0h1m16 0h1m4 0h1m27 0h1m21 0h1m199 0h1m49 0h1m21 0h1m40 0h1m17 0h1m-462 1h1m58 0h1m14 0h1m6 0h1m25 0h1m23 0h2m195 0h2m49 0h2m20 0h1m42 0h1m15 0h1m-460 1h1m58 0h1m12 0h1m8 0h1m23 0h1m26 0h1m192 0h2m49 0h2m2 0h1m18 0h1m44 0h2m12 0h1m-458 1h1m58 0h1m10 0h1m10 0h2m21 0h1m27 0h2m188 0h2m50 0h1m5 0h1m16 0h1m47 0h1m10 0h1m-457 1h1m59 0h1m9 0h1m12 0h1m19 0h1m30 0h2m184 0h3m50 0h1m7 0h1m14 0h1m49 0h1m9 0h1m-456 1h1m59 0h1m7 0h1m14 0h1m17 0h1m33 0h2m180 0h2m3 0h1m48 0h1m9 0h1m12 0h1m51 0h1m7 0h1m-454 1h1m59 0h1m5 0h1m16 0h1m15 0h1m36 0h2m176 0h2m5 0h1m47 0h1m11 0h1m10 0h1m53 0h2m4 0h1m-452 1h1m59 0h1m3 0h1m18 0h1m13 0h1m39 0h2m172 0h2m8 0h1m44 0h2m13 0h1m8 0h1m56 0h1m2 0h1m-451 1h1m60 0h1m1 0h1m20 0h2m11 0h1m41 0h2m168 0h2m10 0h1m43 0h1m16 0h1m5 0h2m58 0h1m1 0h1m-450 1h1m60 0h2m22 0h1m9 0h1m44 0h2m164 0h2m13 0h1m41 0h1m18 0h1m3 0h1m61 0h1m-448 1h1m61 0h1m22 0h1m7 0h1m47 0h2m160 0h2m15 0h1m40 0h1m20 0h1m1 0h1m61 0h1m-446 1h1m61 0h1m21 0h3m4 0h1m50 0h3m155 0h2m18 0h1m37 0h2m22 0h1m61 0h1m-444 1h1m61 0h1m19 0h1m3 0h1m3 0h1m53 0h2m151 0h2m20 0h1m36 0h1m23 0h1m61 0h1m-442 1h1m61 0h1m18 0h1m4 0h1m1 0h1m56 0h2m147 0h2m23 0h1m34 0h2m22 0h1m61 0h1m-440 1h1m61 0h2m15 0h1m6 0h2m58 0h3m141 0h3m25 0h1m32 0h2m2 0h1m19 0h2m61 0h1m-438 1h1m62 0h1m13 0h1m9 0h1m60 0h3m135 0h3m29 0h1m30 0h1m4 0h1m18 0h1m62 0h1m-436 1h1m62 0h1m11 0h1m11 0h1m62 0h3m129 0h3m32 0h1m29 0h1m6 0h1m16 0h1m62 0h1m-434 1h1m62 0h1m10 0h1m12 0h1m64 0h3m123 0h3m36 0h1m26 0h2m8 0h1m14 0h1m62 0h1m-432 1h1m62 0h1m8 0h1m14 0h2m65 0h3m117 0h3m40 0h1m24 0h1m11 0h1m12 0h1m62 0h1m-431 1h1m63 0h1m6 0h1m17 0h1m67 0h4m109 0h4m43 0h1m23 0h1m12 0h1m10 0h2m63 0h1m-430 1h1m63 0h2m3 0h1m19 0h1m70 0h3m103 0h3m48 0h1m21 0h1m14 0h1m8 0h1m64 0h1m-428 1h1m64 0h1m2 0h1m20 0h2m71 0h3m97 0h3m51 0h1m19 0h2m16 0h1m6 0h1m64 0h1m-426 1h1m64 0h2m23 0h2m72 0h3m91 0h3m55 0h1m16 0h2m19 0h1m4 0h1m64 0h1m-425 1h1m64 0h3m22 0h1m1 0h2m73 0h4m83 0h4m58 0h1m14 0h2m21 0h1m2 0h2m65 0h1m-424 1h1m62 0h1m3 0h1m20 0h1m4 0h1m76 0h5m73 0h5m63 0h1m12 0h2m23 0h2m66 0h1m-422 1h1m60 0h1m5 0h1m19 0h1m5 0h2m79 0h6m60 0h7m68 0h1m10 0h2m2 0h1m22 0h1m66 0h1m-420 1h1m59 0h1m6 0h2m16 0h1m8 0h1m84 0h7m47 0h6m76 0h1m8 0h1m4 0h1m20 0h2m66 0h1m-418 1h1m57 0h1m9 0h1m14 0h1m10 0h2m89 0h7m33 0h7m82 0h1m6 0h2m6 0h1m18 0h1m67 0h1m-416 1h1m55 0h1m11 0h2m11 0h1m13 0h1m95 0h33m90 0h1m4 0h1m8 0h1m16 0h2m67 0h1m-414 1h1m53 0h1m14 0h1m10 0h1m14 0h2m95 0h1m120 0h1m2 0h2m10 0h1m14 0h1m68 0h1m-412 1h1m51 0h1m16 0h1m8 0h1m17 0h2m93 0h1m121 0h2m13 0h1m12 0h1m68 0h1m-410 1h1m50 0h1m17 0h2m5 0h1m20 0h2m91 0h1m119 0h2m15 0h1m10 0h2m68 0h1m-408 1h1m48 0h1m20 0h1m3 0h1m23 0h2m89 0h1m117 0h2m18 0h1m8 0h1m69 0h1m-406 1h1m46 0h1m22 0h2m1 0h1m23 0h1m1 0h2m87 0h1m115 0h2m20 0h1m6 0h2m69 0h1m-404 1h1m44 0h1m25 0h1m23 0h1m4 0h2m85 0h1m113 0h3m22 0h1m4 0h1m70 0h1m-402 1h1m42 0h1m27 0h1m22 0h1m6 0h2m83 0h1m111 0h2m3 0h1m21 0h1m3 0h1m70 0h1m-400 1h1m41 0h1m28 0h2m19 0h1m9 0h2m80 0h1m110 0h2m5 0h1m22 0h3m70 0h1m-398 1h1m39 0h1m31 0h1m18 0h1m11 0h2m78 0h1m108 0h2m8 0h1m21 0h1m71 0h1m-396 1h1m37 0h1m33 0h2m15 0h1m14 0h2m76 0h1m106 0h2m10 0h1m19 0h2m71 0h1m-394 1h1m35 0h1m36 0h2m12 0h1m17 0h2m74 0h1m104 0h2m13 0h1m16 0h2m72 0h1m-392 1h1m33 0h1m39 0h2m10 0h1m19 0h2m72 0h1m102 0h2m15 0h1m14 0h2m73 0h1m-390 1h1m32 0h1m41 0h1m8 0h1m22 0h2m70 0h1m100 0h2m18 0h1m12 0h1m74 0h1m-388 1h1m30 0h1m43 0h2m6 0h1m22 0h1m1 0h3m67 0h1m96 0h4m20 0h1m10 0h2m74 0h1m-386 1h1m28 0h1m46 0h2m3 0h1m22 0h1m5 0h4m63 0h1m92 0h4m2 0h1m22 0h1m7 0h2m75 0h1m-384 1h1m26 0h1m49 0h2m1 0h1m22 0h1m9 0h4m59 0h1m89 0h3m7 0h1m21 0h1m5 0h2m76 0h1m-382 1h1m25 0h1m51 0h1m22 0h1m14 0h2m57 0h1m87 0h2m10 0h1m22 0h1m2 0h2m77 0h1m-380 1h1m23 0h1m53 0h2m20 0h1m16 0h2m55 0h1m85 0h2m13 0h1m21 0h3m77 0h2m-378 1h2m20 0h1m56 0h2m17 0h1m19 0h3m52 0h1m81 0h4m15 0h1m20 0h2m78 0h1m-374 1h1m18 0h1m59 0h2m15 0h1m20 0h1m1 0h4m48 0h1m77 0h4m19 0h1m18 0h2m79 0h1m-372 1h1m16 0h1m62 0h3m11 0h1m21 0h1m5 0h4m44 0h1m74 0h3m3 0h1m20 0h1m15 0h2m79 0h2m-370 1h2m14 0h1m65 0h2m9 0h1m20 0h1m10 0h4m39 0h1m71 0h4m6 0h1m20 0h1m13 0h2m80 0h1m-366 1h1m12 0h1m68 0h2m6 0h1m21 0h1m14 0h3m36 0h1m67 0h4m11 0h1m19 0h1m11 0h2m81 0h1m-364 1h1m10 0h1m71 0h2m4 0h1m21 0h1m17 0h4m32 0h1m63 0h4m15 0h1m20 0h1m7 0h3m82 0h1m-362 1h1m8 0h1m74 0h2m1 0h1m21 0h1m20 0h1m1 0h4m28 0h1m59 0h4m19 0h1m20 0h1m5 0h2m84 0h1m-360 1h1m6 0h1m77 0h2m21 0h1m20 0h1m5 0h4m24 0h1m55 0h4m2 0h1m21 0h1m20 0h1m2 0h2m85 0h1m-358 1h1m5 0h1m79 0h2m19 0h1m20 0h1m9 0h6m18 0h1m50 0h5m6 0h1m21 0h1m20 0h3m86 0h1m-356 1h1m3 0h1m82 0h3m16 0h1m19 0h1m16 0h7m11 0h1m42 0h8m11 0h1m21 0h1m19 0h3m86 0h1m-354 1h1m1 0h1m86 0h2m13 0h1m20 0h1m19 0h1m3 0h16m22 0h17m19 0h1m20 0h1m16 0h3m2 0h1m85 0h1m-352 1h1m89 0h3m10 0h1m20 0h1m19 0h1m19 0h22m16 0h1m19 0h1m21 0h1m13 0h2m6 0h1m83 0h1m-350 1h1m91 0h3m7 0h1m20 0h1m19 0h1m19 0h1m18 0h1m18 0h1m19 0h1m21 0h1m10 0h3m8 0h1m81 0h2m-348 1h2m92 0h4m2 0h1m20 0h1m20 0h1m19 0h1m18 0h1m18 0h1m19 0h1m21 0h1m6 0h4m12 0h1m79 0h1m-344 1h1m95 0h3m20 0h1m19 0h1m20 0h1m18 0h1m19 0h1m19 0h1m21 0h1m2 0h3m16 0h1m78 0h1m-342 1h1m97 0h2m18 0h1m19 0h1m20 0h1m18 0h1m19 0h1m19 0h1m21 0h3m19 0h1m76 0h2m-340 1h2m97 0h3m15 0h1m19 0h1m20 0h1m18 0h1m19 0h1m19 0h1m19 0h2m23 0h1m74 0h1m-336 1h1m99 0h4m10 0h1m20 0h1m20 0h1m18 0h1m19 0h1m19 0h1m15 0h4m25 0h1m73 0h1m-334 1h2m101 0h4m6 0h1m20 0h1m19 0h1m19 0h1m19 0h1m20 0h1m10 0h4m30 0h1m70 0h2m-331 1h1m104 0h4m2 0h1m20 0h1m19 0h1m19 0h1m19 0h1m20 0h1m5 0h5m34 0h1m68 0h2m-328 1h2m106 0h4m18 0h1m20 0h1m19 0h1m19 0h1m20 0h1m1 0h4m39 0h1m67 0h1m-324 1h2m108 0h6m12 0h1m20 0h1m19 0h1m20 0h1m15 0h6m44 0h1m64 0h2m-321 1h1m113 0h6m6 0h1m20 0h1m19 0h1m20 0h1m9 0h6m50 0h1m63 0h1m-318 1h2m117 0h4m2 0h1m20 0h1m19 0h1m20 0h1m5 0h4m56 0h1m61 0h2m-315 1h1m120 0h6m17 0h1m19 0h1m20 0h6m61 0h1m59 0h1m-312 1h2m120 0h1m3 0h18m19 0h1m3 0h17m67 0h1m57 0h2m-309 1h1m119 0h1m20 0h24m85 0h1m55 0h1m-306 1h2m117 0h1m129 0h1m53 0h2m-303 1h1m116 0h1m129 0h1m52 0h1m-300 1h2m113 0h1m131 0h1m49 0h2m-297 1h1m112 0h1m131 0h1m47 0h2m-294 1h2m110 0h1m132 0h1m45 0h1m-290 1h2m108 0h1m132 0h1m43 0h2m-287 1h1m107 0h1m132 0h1m42 0h1m-284 1h2m105 0h1m133 0h1m39 0h2m-281 1h2m103 0h1m133 0h1m37 0h2m-277 1h2m100 0h1m135 0h1m34 0h2m-273 1h2m98 0h1m135 0h1m32 0h2m-269 1h2m96 0h1m135 0h1m30 0h2m-265 1h2m94 0h1m136 0h1m27 0h2m-261 1h2m92 0h1m136 0h1m25 0h2m-257 1h2m90 0h1m136 0h1m23 0h2m-253 1h3m87 0h1m137 0h1m19 0h3m-248 1h2m84 0h1m138 0h1m17 0h2m-243 1h2m82 0h1m139 0h1m14 0h2m-239 1h2m80 0h1m139 0h1m12 0h2m-235 1h3m77 0h1m139 0h1m9 0h3m-230 1h2m75 0h1m140 0h1m6 0h2m-225 1h2m73 0h1m140 0h1m4 0h2m-221 1h2m71 0h1m141 0h1m1 0h2m-217 1h3m68 0h1m140 0h3m-212 1h2m65 0h1m139 0h2m-207 1h2m63 0h1m137 0h2m-203 1h2m61 0h1m135 0h2m-199 1h3m58 0h1m132 0h3m-194 1h3m55 0h1m128 0h4m-188 1h4m51 0h1m125 0h3m-180 1h3m48 0h1m122 0h3m-174 1h3m44 0h1m120 0h3m-168 1h3m41 0h1m117 0h3m-162 1h3m38 0h1m114 0h3m-156 1h3m35 0h1m110 0h4m-150 1h4m31 0h1m107 0h3m-142 1h4m27 0h1m103 0h4m-135 1h4m23 0h1m99 0h4m-127 1h5m17 0h1m95 0h5m-118 1h5m12 0h1m90 0h5m-108 1h7m5 0h1m82 0h8m-96 1h10m68 0h10m-78 1h10m48 0h10m-58 1h10m28 0h10m-38 1h28"/>
<path stroke="#7f7f7f" d="M287 61h1m7 0h1m3 0h1m3 0h1m3 0h1m-34 1h1m4 0h1m3 0h1m3 0h1m7 0h1m3 0h1m3 0h1m3 0h1m7 0h1m3 0h1m3 0h1m3 0h1m-62 1h1m7 0h1m4 0h1m3 0h1m3 0h1m7 0h1m3 0h1m3 0h1m3 0h1m7 0h1m3 0h1m3 0h1m3 0h1m-66 1h1m3 0h1m7 0h1m4 0h1m3 0h1m3 0h1m7 0h1m3 0h1m3 0h1m3 0h1m7 0h1m3 0h1m3 0h1m3 0h1m8 0h1m-83 1h1m3 0h1m3 0h1m3 0h1m7 0h1m4 0h1m3 0h1m3 0h1m7 0h1m3 0h1m3 0h1m3 0h1m7 0h1m3 0h1m3 0h1m3 0h1m8 0h1m3 0h1m-87 1h1m3 0h1m3 0h1m3 0h1m8 0h1m3 0h1m3 0h1m3 0h1m7 0h1m3 0h1m3 0h1m3 0h1m7 0h1m3 0h1m3 0h1m3 0h1m8 0h1m3 0h1m3 0h1m3 0h1m-103 1h1m7 0h1m3 0h1m3 0h1m4 0h1m7 0h1m3 0h1m3 0h1m3 0h1m7 0h1m3 0h1m3 0h1m3 0h1m7 0h1m3 0h1m3 0h1m3 0h1m7 0h1m3 0h1m4 0h1m3 0h1m-107 1h1m3 0h1m7 0h1m4 0h1m3 0h1m3 0h1m7 0h1m4 0h1m3 0h1m3 0h1m6 0h1m3 0h1m2 0h1m3 0h1m7 0h1m3 0h1m4 0h1m3 0h1m7 0h1m3 0h1m3 0h1m4 0h1m7 0h1m-120 1h1m4 0h1m3 0h1m8 0h1m3 0h1m3 0h1m3 0h1m7 0h1m4 0h1m3 0h1m3 0h1m6 0h1m3 0h1m2 0h1m3 0h1m7 0h1m3 0h1m3 0h1m3 0h1m8 0h1m3 0h1m3 0h1m3 0h1m8 0h1m3 0h1m-128 1h1m3 0h1m4 0h1m4 0h1m7 0h1m3 0h1m3 0h1m3 0h1m7 0h1m4 0h1m3 0h1m3 0h1m6 0h1m3 0h1m2 0h1m3 0h1m7 0h1m3 0h1m3 0h1m3 0h1m8 0h1m3 0h1m3 0h1m3 0h1m8 0h1m3 0h1m3 0h1m-132 1h1m4 0h1m4 0h1m3 0h1m7 0h1m3 0h1m3 0h1m3 0h1m7 0h1m4 0h1m3 0h1m3 0h1m6 0h1m3 0h1m2 0h1m3 0h1m7 0h1m3 0h1m3 0h1m3 0h1m8 0h1m2 0h1m4 0h1m3 0h1m7 0h1m4 0h1m3 0h1m3 0h1m-135 1h1m3 0h1m4 0h1m3 0h1m7 0h1m3 0h1m3 0h1m3 0h1m8 0h1m3 0h1m3 0h1m3 0h1m6 0h1m3 0h1m2 0h1m3 0h1m7 0h1m3 0h1m3 0h1m3 0h1m8 0h1m2 0h1m3 0h1m4 0h1m7 0h1m3 0h1m3 0h1m4 0h1m-143 1h1m7 0h1m3 0h1m4 0h1m3 0h1m7 0h1m3 0h1m3 0h1m4 0h1m7 0h1m3 0h1m3 0h1m3 0h1m6 0h1m3 0h1m2 0h1m3 0h1m7 0h1m3 0h1m3 0h1m3 0h1m8 0h1m2 0h1m3 0h1m3 0h1m8 0h1m3 0h1m3 0h1m3 0h1m-146 1h1m4 0h1m6 0h1m4 0h1m3 0h1m4 0h1m6 0h1m3 0h1m4 0h1m3 0h1m7 0h1m3 0h1m3 0h1m3 0h1m6 0h1m3 0h1m2 0h1m3 0h1m7 0h1m3 0h1m3 0h1m3 0h1m7 0h1m3 0h1m3 0h1m3 0h1m8 0h1m3 0h1m3 0h1m3 0h1m8 0h1m-159 1h1m3 0h1m4 0h1m7 0h1m3 0h1m4 0h1m3 0h1m7 0h1m3 0h1m3 0h1m3 0h1m7 0h1m3 0h1m3 0h1m29 0h1m3 0h1m3 0h1m3 0h1m7 0h1m3 0h1m3 0h1m3 0h1m7 0h1m4 0h1m2 0h1m4 0h1m8 0h1m3 0h1m-167 1h1m3 0h1m4 0h1m3 0h1m7 0h1m3 0h1m4 0h1m3 0h1m7 0h1m3 0h1m3 0h1m3 0h1m57 0h1m7 0h1m2 0h1m3 0h1m4 0h1m7 0h1m3 0h1m3 0h1m3 0h1m8 0h1m4 0h1m-167 1h1m4 0h1m3 0h1m4 0h1m6 0h1m3 0h1m4 0h1m3 0h1m7 0h1m3 0h1m3 0h1m69 0h1m2 0h1m3 0h1m3 0h1m8 0h1m3 0h1m3 0h1m3 0h1m8 0h1m3 0h1m4 0h1m-170 1h1m3 0h1m3 0h1m4 0h1m6 0h1m4 0h1m3 0h1m4 0h1m6 0h1m84 0h1m3 0h1m8 0h1m3 0h1m3 0h1m3 0h1m8 0h1m3 0h1m3 0h1m4 0h1m-174 1h1m3 0h1m4 0h1m3 0h1m7 0h1m3 0h1m4 0h1m3 0h1m95 0h1m7 0h1m4 0h1m2 0h1m4 0h1m7 0h1m3 0h1m4 0h1m4 0h1m-183 1h1m9 0h1m3 0h1m3 0h1m3 0h1m7 0h1m3 0h1m4 0h1m3 0h1m103 0h1m3 0h1m3 0h1m3 0h1m8 0h1m3 0h1m3 0h1m4 0h1m-182 1h1m9 0h1m3 0h1m3 0h1m4 0h1m6 0h1m4 0h1m3 0h1m107 0h1m3 0h1m3 0h1m3 0h1m8 0h1m3 0h1m3 0h1m4 0h1m-186 1h1m4 0h1m8 0h1m3 0h1m3 0h1m4 0h1m7 0h1m3 0h1m115 0h1m2 0h1m4 0h1m7 0h1m3 0h1m4 0h1m3 0h1m9 0h1m-194 1h1m3 0h1m9 0h1m2 0h1m4 0h1m3 0h1m7 0h1m122 0h1m3 0h1m8 0h1m3 0h1m3 0h1m4 0h1m8 0h1m3 0h1m-201 1h1m3 0h1m4 0h1m8 0h1m3 0h1m3 0h1m4 0h1m133 0h1m8 0h1m3 0h1m3 0h1m4 0h1m8 0h1m3 0h1m-205 1h1m3 0h1m4 0h1m3 0h1m8 0h1m3 0h1m3 0h1m4 0h1m141 0h1m3 0h1m4 0h1m3 0h1m8 0h1m3 0h1m4 0h1m-208 1h1m3 0h1m3 0h1m4 0h1m8 0h1m2 0h1m4 0h1m145 0h1m3 0h1m3 0h1m4 0h1m8 0h1m3 0h1m3 0h1m-207 1h1m3 0h1m4 0h1m3 0h1m8 0h1m3 0h1m3 0h1m148 0h1m4 0h1m4 0h1m7 0h1m3 0h1m4 0h1m4 0h1m-211 1h1m3 0h1m3 0h1m3 0h1m9 0h1m2 0h1m152 0h1m3 0h1m4 0h1m8 0h1m3 0h1m3 0h1m4 0h1m-220 1h1m9 0h1m3 0h1m4 0h1m3 0h1m8 0h1m159 0h1m4 0h1m7 0h1m3 0h1m4 0h1m4 0h1m-219 1h1m9 0h1m3 0h1m3 0h1m3 0h1m172 0h1m8 0h1m3 0h1m3 0h1m4 0h1m-222 1h1m3 0h1m9 0h1m3 0h1m4 0h1m3 0h1m179 0h1m4 0h1m3 0h1m4 0h1m7 0h1m-229 1h1m3 0h1m9 0h1m3 0h1m3 0h1m3 0h1m179 0h1m3 0h1m3 0h1m4 0h1m8 0h1m-234 1h1m4 0h1m3 0h1m9 0h1m3 0h1m4 0h1m181 0h1m4 0h1m3 0h1m4 0h1m7 0h1m4 0h1m-237 1h1m4 0h1m3 0h1m9 0h1m3 0h1m189 0h1m3 0h1m4 0h1m8 0h1m4 0h1m-242 1h1m4 0h1m4 0h1m4 0h1m8 0h1m3 0h1m189 0h1m3 0h1m4 0h1m7 0h1m4 0h1m4 0h1m-245 1h1m4 0h1m4 0h1m3 0h1m9 0h1m195 0h1m4 0h1m8 0h1m4 0h1m3 0h1m-244 1h1m5 0h1m3 0h1m4 0h1m8 0h1m195 0h1m4 0h1m7 0h1m4 0h1m4 0h1m4 0h1m-248 1h1m4 0h1m4 0h1m3 0h1m208 0h1m8 0h1m3 0h1m4 0h1m4 0h1m-246 1h1m4 0h1m3 0h1m4 0h1m207 0h1m7 0h1m4 0h1m3 0h1m5 0h1m-255 1h1m8 0h1m4 0h1m4 0h1m3 0h1m215 0h1m3 0h1m4 0h1m4 0h1m-254 1h1m9 0h1m4 0h1m3 0h1m218 0h1m4 0h1m3 0h1m4 0h1m-256 1h1m3 0h1m8 0h1m5 0h1m3 0h1m217 0h1m3 0h1m4 0h1m4 0h1m8 0h1m-265 1h1m4 0h1m8 0h1m4 0h1m225 0h1m3 0h1m4 0h1m9 0h1m-264 1h1m3 0h1m9 0h1m4 0h1m223 0h1m3 0h1m5 0h1m8 0h1m4 0h1m-273 1h1m4 0h1m4 0h1m8 0h1m232 0h1m4 0h1m8 0h1m4 0h1m-272 1h1m5 0h1m4 0h1m8 0h1m230 0h1m4 0h1m9 0h1m4 0h1m-275 1h1m3 0h1m5 0h1m3 0h1m244 0h1m8 0h1m4 0h1m4 0h1m-279 1h1m4 0h1m4 0h1m4 0h1m242 0h1m8 0h1m4 0h1m5 0h1m-278 1h1m4 0h1m4 0h1m4 0h1m250 0h1m4 0h1m4 0h1m4 0h1m-281 1h1m3 0h1m4 0h1m4 0h1m249 0h1m4 0h1m4 0h1m4 0h1m-279 1h1m3 0h1m4 0h1m252 0h1m5 0h1m3 0h1m4 0h1m-288 1h1m9 0h1m4 0h1m3 0h1m252 0h1m4 0h1m4 0h1m4 0h1m-287 1h1m9 0h1m4 0h1m3 0h1m255 0h1m4 0h1m4 0h1m-291 1h1m4 0h1m10 0h1m3 0h1m259 0h1m3 0h1m4 0h1m-289 1h1m4 0h1m10 0h1m3 0h1m257 0h1m3 0h1m4 0h1m10 0h1m-298 1h1m4 0h1m9 0h1m265 0h1m3 0h1m10 0h1m-302 1h1m4 0h1m5 0h1m9 0h1m263 0h1m4 0h1m9 0h1m4 0h1m-305 1h1m4 0h1m5 0h1m276 0h1m9 0h1m4 0h1m-303 1h1m4 0h1m5 0h1m274 0h1m9 0h1m5 0h1m-307 1h1m4 0h1m4 0h1m4 0h1m284 0h1m4 0h1m4 0h1m-310 1h1m4 0h1m4 0h1m4 0h1m282 0h1m4 0h1m4 0h1m-309 1h1m5 0h1m4 0h1m4 0h1m280 0h1m4 0h1m4 0h1m5 0h1m-313 1h1m4 0h1m4 0h1m284 0h1m4 0h1m4 0h1m5 0h1m-311 1h1m4 0h1m4 0h1m282 0h1m4 0h1m4 0h1m5 0h1m-321 1h1m11 0h1m4 0h1m291 0h1m4 0h1m4 0h1m-319 1h1m11 0h1m4 0h1m289 0h1m4 0h1m4 0h1m-317 1h1m11 0h1m4 0h1m287 0h1m4 0h1m4 0h1m10 0h1m-332 1h1m5 0h1m10 0h1m296 0h1m5 0h1m9 0h1m-330 1h1m5 0h1m10 0h1m294 0h1m5 0h1m9 0h1m-328 1h1m5 0h1m309 0h1m9 0h1m5 0h1m-338 1h1m5 0h1m5 0h1m64 0h1m242 0h1m9 0h1m5 0h1m-336 1h1m5 0h1m5 0h1m305 0h1m9 0h1m5 0h1m-334 1h1m5 0h1m5 0h1m63 0h1m250 0h1m4 0h1m5 0h1m-344 1h1m5 0h1m5 0h1m5 0h1m312 0h1m4 0h1m5 0h1m-342 1h1m5 0h1m5 0h1m5 0h1m62 0h1m247 0h1m4 0h1m5 0h1m-340 1h1m5 0h2m4 0h1m314 0h1m5 0h1m4 0h1m5 0h1m-344 1h1m6 0h1m4 0h1m67 0h1m244 0h1m5 0h1m4 0h1m5 0h1m-342 1h1m6 0h1m4 0h1m316 0h1m4 0h1m5 0h1m-340 1h2m5 0h1m71 0h1m247 0h1m4 0h1m5 0h1m-349 1h1m11 0h1m5 0h1m317 0h1m4 0h1m5 0h1m-347 1h1m11 0h1m76 0h1m249 0h1m5 0h1m-345 1h1m11 0h1m324 0h1m5 0h1m-343 1h1m11 0h1m75 0h1m200 0h1m45 0h1m5 0h1m-347 1h1m5 0h1m338 0h1m12 0h1m-358 1h1m5 0h2m85 0h1m198 0h1m50 0h1m11 0h2m-356 1h1m6 0h1m333 0h1m11 0h1m5 0h1m-365 1h1m5 0h1m6 0h1m84 0h1m195 0h1m62 0h1m5 0h1m-363 1h2m4 0h2m5 0h1m341 0h1m5 0h1m-366 1h1m5 0h1m5 0h1m5 0h1m83 0h1m193 0h1m61 0h1m5 0h1m5 0h1m-370 1h1m5 0h1m5 0h1m342 0h2m4 0h2m5 0h1m-368 1h1m5 0h1m5 0h1m89 0h1m189 0h1m60 0h1m5 0h1m5 0h2m-366 1h1m5 0h1m5 0h1m344 0h1m5 0h1m-363 1h1m5 0h2m93 0h1m187 0h1m65 0h1m5 0h1m6 0h1m-368 1h2m5 0h1m88 0h1m256 0h1m5 0h1m5 0h2m-365 1h1m5 0h1m88 0h1m3 0h1m184 0h1m65 0h1m5 0h1m5 0h1m-375 1h1m12 0h1m93 0h1m258 0h2m5 0h1m-373 1h1m12 0h1m93 0h1m3 0h1m182 0h1m69 0h1m6 0h1m-371 1h2m11 0h1m92 0h1m262 0h1m-368 1h1m104 0h1m3 0h1m179 0h1m75 0h2m-373 1h2m5 0h1m104 0h1m257 0h1m12 0h2m-383 1h1m5 0h1m103 0h1m3 0h1m177 0h1m74 0h1m12 0h1m-380 1h1m5 0h2m102 0h1m267 0h1m-385 1h1m6 0h2m5 0h1m101 0h1m3 0h1m174 0h1m86 0h2m4 0h2m-389 1h2m6 0h1m5 0h1m101 0h1m263 0h1m5 0h1m-385 1h1m6 0h1m110 0h1m172 0h1m85 0h1m5 0h1m-383 1h2m5 0h2m365 0h2m4 0h2m-388 1h2m6 0h2m5 0h1m108 0h1m169 0h1m84 0h1m5 0h1m7 0h2m-393 1h1m7 0h1m373 0h1m6 0h2m-390 1h2m6 0h2m112 0h1m167 0h1m88 0h2m5 0h2m-386 1h1m7 0h1m367 0h1m6 0h1m6 0h2m-391 1h2m119 0h1m163 0h1m94 0h2m6 0h1m-387 1h1m375 0h2m6 0h2m-399 1h1m13 0h2m117 0h1m161 0h1m92 0h1m7 0h1m-396 1h2m391 0h2m-393 1h1m289 0h1m99 0h1m-390 1h2m385 0h2m13 0h1m-409 1h1m7 0h2m127 0h1m156 0h1m111 0h2m-407 1h2m7 0h1m394 0h1m-403 1h1m7 0h2m279 0h1m110 0h2m-401 1h2m7 0h1m387 0h2m7 0h1m-413 1h2m6 0h2m131 0h1m151 0h1m108 0h1m7 0h2m-410 1h2m6 0h1m389 0h2m7 0h1m-406 1h1m6 0h2m129 0h1m149 0h1m106 0h1m7 0h2m-404 1h2m6 0h1m391 0h2m6 0h2m-417 1h2m7 0h2m75 0h1m58 0h1m146 0h1m113 0h1m6 0h2m-413 1h2m7 0h2m74 0h1m316 0h2m5 0h2m-409 1h2m7 0h1m74 0h1m57 0h1m144 0h1m111 0h1m5 0h2m7 0h1m-413 1h2m81 0h1m317 0h2m7 0h2m-410 1h2m80 0h1m56 0h1m257 0h2m7 0h2m-406 1h2m79 0h1m320 0h2m-418 1h1m95 0h1m56 0h1m138 0h1m122 0h1m-415 1h2m94 0h1m315 0h2m-412 1h2m93 0h1m55 0h1m135 0h1m120 0h2m-408 1h2m-9 1h1m8 0h2m146 0h1m133 0h1m135 0h2m-428 1h2m8 0h2m412 0h2m-424 1h2m8 0h2m143 0h1m130 0h1m133 0h2m-420 1h2m414 0h2m6 0h1m-432 1h2m7 0h2m150 0h1m128 0h1m130 0h2m6 0h2m-429 1h2m7 0h2m406 0h2m6 0h2m-425 1h2m7 0h2m147 0h1m125 0h1m129 0h1m6 0h2m-428 1h1m6 0h3m414 0h2m8 0h1m-434 1h2m7 0h2m152 0h1m123 0h1m133 0h2m8 0h2m-431 1h2m7 0h2m35 0h1m371 0h1m8 0h2m-427 1h2m44 0h1m113 0h1m120 0h1m141 0h2m-423 1h2m44 0h1m372 0h2m7 0h2m-428 1h2m44 0h1m110 0h1m118 0h1m138 0h2m7 0h2m-424 1h1m411 0h1m6 0h3m-376 1h1m109 0h1m115 0h1m144 0h2m-434 1h2m61 0h1m366 0h2m-430 1h2m61 0h1m107 0h1m112 0h1m141 0h2m-426 1h3m60 0h1m-61 1h3m59 0h1m104 0h1m-177 1h2m10 0h2m65 0h1m365 0h2m-445 1h2m10 0h1m60 0h1m4 0h2m203 0h1m157 0h2m-441 1h3m70 0h1m4 0h2m356 0h3m-436 1h3m74 0h1m93 0h1m104 0h1m153 0h3m-441 1h2m9 0h2m67 0h1m5 0h2m312 0h1m35 0h2m9 0h2m-447 1h2m9 0h2m67 0h1m5 0h2m90 0h1m102 0h1m114 0h1m35 0h2m8 0h3m-443 1h3m77 0h1m5 0h1m305 0h1m43 0h4m-437 1h3m76 0h1m94 0h1m99 0h1m112 0h1m42 0h3m-441 1h2m9 0h2m76 0h1m303 0h1m42 0h2m11 0h2m-449 1h3m8 0h2m76 0h1m91 0h1m97 0h1m109 0h1m54 0h3m-444 1h3m85 0h1m293 0h1m1 0h1m52 0h4m-438 1h3m84 0h1m88 0h1m95 0h1m104 0h1m53 0h3m-431 1h2m370 0h1m53 0h2m12 0h1m-355 1h1m87 0h1m92 0h1m102 0h1m66 0h3m-352 1h1m279 0h1m64 0h4m-347 1h1m84 0h1m90 0h1m99 0h1m63 0h3m-447 1h2m104 0h1m271 0h1m63 0h2m-442 1h3m103 0h1m82 0h1m86 0h1m97 0h1m-372 1h4m101 0h1m263 0h1m-366 1h3m100 0h1m79 0h1m84 0h1m94 0h1m83 0h2m-459 1h2m11 0h2m356 0h1m82 0h3m-455 1h3m110 0h1m78 0h1m81 0h1m90 0h1m1 0h1m80 0h4m-449 1h4m108 0h1m247 0h1m81 0h3m-441 1h3m107 0h1m155 0h1m87 0h1m81 0h2m11 0h2m-461 1h3m10 0h2m107 0h1m239 0h1m93 0h3m-456 1h4m117 0h1m72 0h1m76 0h1m85 0h1m91 0h4m-449 1h4m115 0h1m231 0h1m90 0h3m-441 1h3m114 0h1m69 0h1m157 0h1m90 0h2m-450 1h3m128 0h1m223 0h1m104 0h3m-460 1h4m193 0h1m71 0h1m80 0h1m102 0h4m-453 1h4m122 0h1m217 0h1m100 0h4m-445 1h3m121 0h1m65 0h1m69 0h1m77 0h1m99 0h3m-315 1h1m209 0h1m113 0h3m-325 1h1m62 0h1m66 0h1m73 0h1m113 0h4m-320 1h1m199 0h1m111 0h4m-314 1h1m59 0h1m64 0h1m70 0h1m110 0h3m-455 1h3m144 0h1m191 0h1m-337 1h4m200 0h1m60 0h1m68 0h1m-331 1h4m138 0h1m185 0h1m-325 1h3m137 0h1m56 0h1m58 0h1m-269 1h3m151 0h1m177 0h1m132 0h4m-466 1h4m149 0h1m53 0h1m55 0h1m63 0h1m128 0h6m-458 1h4m147 0h1m169 0h1m126 0h4m-448 1h3m146 0h1m50 0h1m53 0h1m60 0h1m-327 1h2m320 0h1m1 0h1m141 0h3m-467 1h4m158 0h1m47 0h1m50 0h1m56 0h1m138 0h7m-460 1h5m307 0h1m137 0h3m-448 1h2m153 0h1m46 0h1m48 0h1m53 0h1m-318 1h3m166 0h1m297 0h4m-468 1h7m161 0h1m43 0h1m46 0h1m198 0h6m-457 1h4m159 0h1m137 0h1m145 0h4m-286 1h1m40 0h1m43 0h1m48 0h1m-133 1h1m129 0h1m160 0h4m-293 1h1m37 0h1m41 0h1m45 0h1m156 0h6m-287 1h1m121 0h1m154 0h4m-244 1h1m38 0h1m43 0h1m-119 1h1m113 0h1m1 0h1m-302 1h7m180 0h1m34 0h1m35 0h1m38 0h1m-291 1h7m175 0h1m105 0h1m-105 1h1m31 0h1m32 0h1m36 0h1m-101 1h1m97 0h1m179 0h4m-475 1h7m188 0h1m28 0h1m30 0h1m33 0h1m175 0h6m-464 1h7m183 0h1m89 0h1m173 0h4m-240 1h1m27 0h1m31 0h1m-87 1h1m83 0h1m-284 1h6m195 0h1m24 0h1m25 0h1m28 0h1m186 0h7m-469 1h8m189 0h1m75 0h1m181 0h7m-263 1h1m21 0h1m22 0h1m26 0h1m-71 1h1m65 0h1m1 0h1m-276 1h6m203 0h1m18 0h1m20 0h1m21 0h1m196 0h7m-469 1h8m197 0h1m57 0h1m191 0h7m-255 1h1m15 0h1m17 0h1m19 0h1m-3 1h1m-51 1h1m14 0h1m15 0h1m16 0h1m204 0h8m-259 1h1m43 0h1m200 0h6m-249 1h1m11 0h1m12 0h1m14 0h1m-39 1h1m35 0h1m-259 1h7m217 0h1m9 0h1m9 0h1m11 0h1m-250 1h7m212 0h1m27 0h1m-27 1h1m6 0h1m6 0h1m7 0h1m1 0h1m-23 1h1m17 0h1m-249 1h7m229 0h1m4 0h1m4 0h1m216 0h14m-470 1h7m218 0h1m11 0h1m-11 1h1m2 0h1m1 0h1m2 0h1m-7 1h1m3 0h1m-241 1h14m224 0h1m224 0h14m-241 1h1m3 0h1m-7 1h1m2 0h1m1 0h1m2 0h1m151 0h1m-163 1h1m11 0h1m150 0h1m67 0h7m-470 1h14m216 0h1m4 0h1m4 0h1m154 0h1m74 0h7m-249 1h1m17 0h1m149 0h1m-173 1h1m1 0h1m7 0h1m6 0h1m6 0h1m147 0h1m-175 1h1m27 0h1m146 0h1m65 0h7m-250 1h1m11 0h1m9 0h1m9 0h1m144 0h1m72 0h7m-259 1h1m35 0h1m143 0h1m-183 1h1m14 0h1m12 0h1m11 0h1m141 0h1m-392 1h8m199 0h1m43 0h1m140 0h1m-399 1h6m205 0h1m16 0h1m15 0h1m14 0h1m138 0h1m-190 1h1m189 0h1m-193 1h1m19 0h1m17 0h1m15 0h1m137 0h1m-394 1h8m191 0h1m57 0h1m136 0h1m60 0h7m-468 1h6m197 0h1m21 0h1m20 0h1m18 0h1m134 0h1m67 0h7m-276 1h1m1 0h1m65 0h1m133 0h1m-205 1h1m26 0h1m22 0h1m21 0h1m131 0h1m-396 1h8m181 0h1m75 0h1m130 0h1m58 0h7m-468 1h6m187 0h1m28 0h1m25 0h1m24 0h1m128 0h1m65 0h7m-284 1h1m83 0h1m127 0h1m-215 1h1m31 0h1m27 0h1m153 0h1m-394 1h4m173 0h1m89 0h1m183 0h7m-464 1h6m175 0h1m33 0h1m30 0h1m28 0h1m188 0h7m-475 1h4m179 0h1m97 0h1m-101 1h1m36 0h1m32 0h1m31 0h1m-105 1h1m105 0h1m174 0h7m-290 1h1m38 0h1m35 0h1m34 0h1m179 0h8m-302 1h1m1 0h1m113 0h1m-119 1h1m43 0h1m38 0h1m-244 1h4m154 0h1m121 0h1m-287 1h6m156 0h1m45 0h1m41 0h1m37 0h1m-293 1h4m160 0h1m129 0h1m-133 1h1m48 0h1m43 0h1m40 0h1m-286 1h4m145 0h1m137 0h1m159 0h4m-457 1h6m147 0h1m50 0h1m46 0h1m43 0h1m161 0h7m-468 1h4m151 0h1m145 0h1m166 0h3m-318 1h1m53 0h1m48 0h1m46 0h1m153 0h2m-448 1h3m137 0h1m307 0h4m-459 1h7m136 0h1m1 0h1m56 0h1m50 0h1m47 0h1m157 0h5m-467 1h3m141 0h1m161 0h1m160 0h2m-327 1h1m60 0h1m53 0h1m50 0h1m146 0h3m-448 1h4m126 0h1m169 0h1m147 0h4m-458 1h6m128 0h1m63 0h1m55 0h1m53 0h1m149 0h4m-465 1h3m132 0h1m177 0h1m151 0h2m-334 1h1m65 0h1m58 0h1m56 0h1m137 0h3m-325 1h1m324 0h4m-331 1h1m68 0h1m60 0h1m57 0h1m142 0h4m-337 1h1m191 0h1m144 0h3m-455 1h3m110 0h1m70 0h1m64 0h1m59 0h1m-314 1h4m111 0h1m199 0h1m-320 1h4m111 0h1m1 0h1m73 0h1m66 0h1m62 0h1m-325 1h3m113 0h1m209 0h1m-315 1h3m99 0h1m77 0h1m69 0h1m65 0h1m121 0h3m-445 1h4m100 0h1m217 0h1m122 0h4m-453 1h4m102 0h1m80 0h1m71 0h1m193 0h4m-460 1h3m104 0h1m223 0h1m128 0h3m-450 1h2m90 0h1m82 0h1m74 0h1m69 0h1m114 0h3m-441 1h3m90 0h1m231 0h1m115 0h4m-449 1h4m91 0h1m85 0h1m76 0h1m72 0h1m117 0h4m-456 1h3m93 0h1m239 0h1m107 0h2m10 0h3m-461 1h2m11 0h2m81 0h1m87 0h1m79 0h1m75 0h1m107 0h3m-441 1h3m81 0h1m247 0h1m108 0h4m-449 1h4m80 0h1m1 0h1m90 0h1m81 0h1m78 0h1m110 0h3m-455 1h3m82 0h1m356 0h2m11 0h2m-459 1h2m83 0h1m94 0h1m84 0h1m79 0h1m100 0h3m-366 1h1m263 0h1m101 0h4m-372 1h1m97 0h1m86 0h1m82 0h1m103 0h3m-442 1h2m63 0h1m271 0h1m104 0h2m-447 1h3m63 0h1m99 0h1m90 0h1m84 0h1m-347 1h4m64 0h1m279 0h1m-352 1h3m66 0h1m102 0h1m92 0h1m87 0h1m-355 1h1m12 0h2m53 0h1m370 0h2m-431 1h3m53 0h1m104 0h1m95 0h1m88 0h1m84 0h3m-438 1h4m52 0h1m1 0h1m293 0h1m85 0h3m-444 1h3m54 0h1m109 0h1m97 0h1m91 0h1m76 0h2m8 0h3m-449 1h2m11 0h2m42 0h1m303 0h1m76 0h2m9 0h2m-441 1h3m42 0h1m111 0h1m100 0h1m94 0h1m76 0h3m-437 1h4m43 0h1m311 0h1m77 0h3m-443 1h3m8 0h2m35 0h1m114 0h1m102 0h1m97 0h1m67 0h2m9 0h2m-447 1h2m9 0h2m35 0h1m319 0h1m67 0h2m9 0h2m-441 1h3m153 0h1m104 0h1m168 0h3m-436 1h3m362 0h1m70 0h3m-441 1h2m157 0h1m107 0h1m101 0h1m60 0h1m10 0h2m-444 1h1m371 0h1m59 0h2m10 0h1m-286 1h1m109 0h1m104 0h1m59 0h3m-61 1h1m60 0h3m-426 1h2m141 0h1m112 0h1m107 0h1m61 0h2m-430 1h2m366 0h1m61 0h2m-435 1h3m144 0h1m115 0h1m109 0h1m-376 1h2m7 0h1m411 0h1m-424 1h2m7 0h2m138 0h1m118 0h1m110 0h1m44 0h2m-428 1h2m7 0h2m372 0h1m44 0h2m-423 1h2m141 0h1m120 0h1m113 0h1m44 0h2m-427 1h2m7 0h2m371 0h1m35 0h2m7 0h2m-431 1h2m7 0h2m134 0h1m123 0h1m152 0h2m7 0h2m-434 1h1m7 0h2m415 0h2m7 0h1m-429 1h2m6 0h2m129 0h1m125 0h1m147 0h1m7 0h3m-426 1h2m6 0h2m406 0h2m8 0h2m-430 1h2m6 0h2m131 0h1m128 0h1m149 0h2m8 0h2m-426 1h2m414 0h2m-420 1h2m134 0h1m130 0h1m143 0h1m8 0h2m-424 1h2m412 0h2m8 0h2m-427 1h1m136 0h1m133 0h1m145 0h2m8 0h2m-10 1h2m-407 1h2m120 0h1m135 0h1m148 0h2m-411 1h2m409 0h2m-415 1h2m122 0h1m138 0h1m151 0h2m-418 1h1m7 0h1m393 0h1m-405 1h2m6 0h2m116 0h1m141 0h1m136 0h2m-409 1h2m6 0h2m399 0h2m-412 1h1m6 0h2m6 0h1m111 0h1m144 0h1m132 0h1m6 0h2m-409 1h2m6 0h2m391 0h2m6 0h2m-413 1h2m7 0h1m113 0h1m146 0h1m134 0h2m6 0h2m-416 1h1m7 0h2m391 0h1m6 0h1m7 0h1m-411 1h2m7 0h1m106 0h1m149 0h1m129 0h2m5 0h2m-406 1h1m7 0h2m389 0h1m6 0h2m-410 1h2m7 0h1m108 0h1m151 0h1m131 0h2m6 0h2m-413 1h1m7 0h2m387 0h1m7 0h2m-401 1h2m110 0h1m153 0h1m125 0h2m7 0h1m-403 1h1m394 0h1m7 0h2m-407 1h2m111 0h1m156 0h1m127 0h2m7 0h1m-409 1h1m13 0h2m385 0h2m-390 1h1m99 0h1m158 0h1m130 0h1m-393 1h2m391 0h2m-396 1h1m7 0h1m92 0h1m161 0h1m117 0h2m13 0h1m-399 1h2m6 0h2m375 0h1m-387 1h1m6 0h2m94 0h1m163 0h1m119 0h2m-391 1h2m5 0h2m6 0h1m367 0h1m7 0h1m-386 1h1m6 0h2m88 0h1m167 0h1m112 0h2m6 0h2m-390 1h2m6 0h1m373 0h1m7 0h1m-393 1h2m7 0h1m5 0h1m84 0h1m169 0h1m108 0h1m5 0h2m6 0h2m-388 1h2m4 0h2m365 0h2m5 0h2m-383 1h1m5 0h1m85 0h1m172 0h1m110 0h1m6 0h1m-385 1h1m5 0h1m365 0h1m5 0h1m6 0h2m-389 1h2m4 0h2m86 0h1m174 0h1m105 0h1m5 0h2m6 0h1m-385 1h1m370 0h2m5 0h1m-380 1h1m12 0h1m74 0h1m177 0h1m107 0h1m5 0h1m-383 1h2m12 0h1m362 0h1m5 0h2m-373 1h2m75 0h1m179 0h1m108 0h1m-368 1h1m6 0h1m348 0h1m11 0h2m-371 1h1m6 0h1m69 0h1m182 0h1m97 0h1m12 0h1m-373 1h1m5 0h2m352 0h1m12 0h1m-375 1h1m5 0h1m5 0h1m65 0h1m184 0h1m92 0h1m5 0h1m-365 1h2m5 0h1m5 0h1m345 0h1m5 0h1m-367 1h1m6 0h1m5 0h1m65 0h1m187 0h1m93 0h2m4 0h2m-363 1h1m5 0h1m5 0h1m338 0h1m5 0h1m5 0h1m-366 1h2m4 0h2m5 0h1m60 0h1m189 0h1m89 0h1m5 0h1m5 0h1m-368 1h1m5 0h1m5 0h2m342 0h1m5 0h1m5 0h1m-364 1h1m5 0h1m61 0h1m193 0h1m83 0h1m5 0h1m5 0h1m-360 1h1m5 0h1m341 0h1m5 0h1m5 0h2m-363 1h1m5 0h1m62 0h1m195 0h1m84 0h1m5 0h2m5 0h1m-365 1h1m5 0h1m11 0h1m333 0h1m6 0h1m-356 1h2m11 0h1m50 0h1m198 0h1m85 0h1m6 0h1m-358 1h1m12 0h1m337 0h2m5 0h1m-347 1h1m5 0h1m45 0h1m200 0h1m75 0h1m11 0h1m-343 1h1m5 0h1m324 0h1m11 0h1m-345 1h1m5 0h1m249 0h1m76 0h1m11 0h1m-347 1h1m5 0h1m4 0h1m317 0h1m5 0h1m11 0h1m-349 1h1m5 0h1m4 0h1m247 0h1m71 0h1m5 0h1m-339 1h1m5 0h1m4 0h1m316 0h1m4 0h1m5 0h2m-342 1h1m5 0h1m4 0h1m5 0h1m244 0h1m67 0h1m4 0h1m6 0h1m-338 1h1m4 0h1m5 0h1m314 0h1m4 0h1m6 0h1m-340 1h1m4 0h1m5 0h1m247 0h1m62 0h1m5 0h1m4 0h2m5 0h1m-342 1h1m5 0h1m4 0h1m312 0h1m5 0h1m5 0h1m5 0h1m-344 1h1m5 0h1m4 0h1m250 0h1m63 0h1m5 0h1m5 0h1m-334 1h1m4 0h1m10 0h1m305 0h1m5 0h1m5 0h1m-336 1h1m5 0h1m9 0h1m242 0h1m64 0h1m5 0h1m5 0h1m-338 1h1m5 0h1m9 0h1m298 0h1m10 0h1m5 0h1m-328 1h1m9 0h1m5 0h1m294 0h1m10 0h1m5 0h1m-330 1h1m9 0h1m5 0h1m296 0h1m10 0h1m5 0h1m-332 1h1m9 0h1m5 0h1m4 0h1m287 0h1m4 0h1m11 0h1m-317 1h1m4 0h1m4 0h1m289 0h1m4 0h1m11 0h1m-319 1h1m4 0h1m4 0h1m286 0h1m4 0h1m4 0h1m-309 1h1m4 0h1m5 0h1m4 0h1m282 0h1m4 0h1m4 0h1m-311 1h1m5 0h1m4 0h1m4 0h1m284 0h1m4 0h1m4 0h1m-313 1h1m5 0h1m4 0h1m4 0h1m280 0h1m4 0h1m5 0h1m4 0h1m-309 1h1m4 0h1m4 0h1m282 0h1m4 0h1m4 0h1m4 0h1m-310 1h1m4 0h1m4 0h1m284 0h1m4 0h1m4 0h1m4 0h1m-307 1h1m4 0h1m10 0h1m274 0h1m5 0h1m4 0h1m-303 1h1m4 0h1m9 0h1m276 0h1m5 0h1m4 0h1m-305 1h1m4 0h1m9 0h1m4 0h1m263 0h1m9 0h1m5 0h1m4 0h1m-302 1h1m10 0h1m3 0h1m265 0h1m9 0h1m4 0h1m-298 1h1m10 0h1m4 0h1m3 0h1m257 0h1m3 0h1m10 0h1m4 0h1m-300 1h1m10 0h1m4 0h1m3 0h1m259 0h1m3 0h1m10 0h1m-286 1h1m4 0h1m4 0h1m255 0h1m3 0h1m4 0h1m9 0h1m-287 1h1m4 0h1m4 0h1m4 0h1m252 0h1m3 0h1m4 0h1m9 0h1m-288 1h1m4 0h1m3 0h1m5 0h1m252 0h1m4 0h1m3 0h1m-279 1h1m4 0h1m4 0h1m4 0h1m249 0h1m4 0h1m4 0h1m3 0h1m-281 1h1m4 0h1m4 0h1m4 0h1m250 0h1m4 0h1m4 0h1m4 0h1m-278 1h1m5 0h1m4 0h1m8 0h1m242 0h1m4 0h1m4 0h1m4 0h1m-279 1h1m4 0h1m4 0h1m8 0h1m244 0h1m4 0h1m4 0h1m3 0h1m-275 1h1m4 0h1m9 0h1m4 0h1m230 0h1m8 0h1m4 0h1m5 0h1m-272 1h1m4 0h1m8 0h1m4 0h1m232 0h1m8 0h1m4 0h1m4 0h1m-273 1h1m4 0h1m8 0h1m5 0h1m3 0h1m223 0h1m4 0h1m9 0h1m3 0h1m-264 1h1m9 0h1m4 0h1m3 0h1m225 0h1m4 0h1m8 0h1m4 0h1m-265 1h1m8 0h1m4 0h1m4 0h1m3 0h1m218 0h1m2 0h1m5 0h1m8 0h1m3 0h1m-256 1h1m4 0h1m3 0h1m3 0h1m219 0h1m3 0h1m4 0h1m9 0h1m-254 1h1m4 0h1m4 0h1m3 0h1m215 0h1m4 0h1m3 0h1m4 0h1m8 0h1m-255 1h1m5 0h1m3 0h1m3 0h1m8 0h1m207 0h1m4 0h1m3 0h1m4 0h1m-246 1h1m4 0h1m3 0h1m4 0h1m7 0h1m209 0h1m4 0h1m3 0h1m4 0h1m-248 1h1m4 0h1m4 0h1m3 0h1m8 0h1m4 0h1m195 0h1m8 0h1m4 0h1m3 0h1m5 0h1m-244 1h1m3 0h1m4 0h1m7 0h1m4 0h1m197 0h1m8 0h1m4 0h1m3 0h1m4 0h1m-245 1h1m4 0h1m3 0h1m8 0h1m4 0h1m3 0h1m189 0h1m3 0h1m9 0h1m3 0h1m4 0h1m4 0h1m-242 1h1m4 0h1m7 0h1m4 0h1m4 0h1m190 0h1m3 0h1m8 0h1m4 0h1m3 0h1m-237 1h1m3 0h1m8 0h1m4 0h1m3 0h1m4 0h1m181 0h1m4 0h1m3 0h1m9 0h1m3 0h1m4 0h1m-234 1h1m7 0h1m4 0h1m4 0h1m3 0h1m179 0h1m3 0h1m4 0h1m3 0h1m8 0h1m4 0h1m-231 1h1m8 0h1m4 0h1m3 0h1m4 0h1m179 0h1m3 0h1m4 0h1m3 0h1m9 0h1m3 0h1m-223 1h1m4 0h1m4 0h1m3 0h1m8 0h1m172 0h1m3 0h1m4 0h1m3 0h1m8 0h1m-219 1h1m4 0h1m3 0h1m4 0h1m7 0h1m4 0h1m159 0h1m8 0h1m3 0h1m4 0h1m3 0h1m9 0h1m-221 1h1m4 0h1m4 0h1m3 0h1m8 0h1m4 0h1m3 0h1m152 0h1m2 0h1m9 0h1m3 0h1m4 0h1m3 0h1m-212 1h1m4 0h1m4 0h1m3 0h1m7 0h1m4 0h1m4 0h1m148 0h1m3 0h1m3 0h1m8 0h1m3 0h1m4 0h1m3 0h1m-208 1h1m4 0h1m3 0h1m8 0h1m4 0h1m3 0h1m3 0h1m145 0h1m4 0h1m2 0h1m9 0h1m3 0h1m4 0h1m3 0h1m-209 1h1m4 0h1m3 0h1m8 0h1m3 0h1m4 0h1m3 0h1m141 0h1m4 0h1m3 0h1m3 0h1m8 0h1m3 0h1m4 0h1m3 0h1m-205 1h1m3 0h1m8 0h1m4 0h1m3 0h1m3 0h1m8 0h1m133 0h1m4 0h1m3 0h1m3 0h1m8 0h1m4 0h1m4 0h1m-202 1h1m3 0h1m8 0h1m4 0h1m3 0h1m3 0h1m8 0h1m3 0h1m122 0h1m7 0h1m3 0h1m4 0h1m2 0h1m9 0h1m3 0h1m-194 1h1m9 0h1m3 0h1m4 0h1m3 0h1m7 0h1m4 0h1m2 0h1m115 0h1m3 0h1m7 0h1m4 0h1m3 0h1m3 0h1m8 0h1m4 0h1m-186 1h1m4 0h1m3 0h1m3 0h1m8 0h1m3 0h1m3 0h1m3 0h1m107 0h1m3 0h1m4 0h1m6 0h1m4 0h1m3 0h1m3 0h1m9 0h1m-182 1h1m4 0h1m3 0h1m3 0h1m8 0h1m3 0h1m3 0h1m3 0h1m103 0h1m3 0h1m4 0h1m3 0h1m7 0h1m3 0h1m3 0h1m3 0h1m9 0h1m-183 1h1m4 0h1m4 0h1m3 0h1m7 0h1m4 0h1m2 0h1m4 0h1m7 0h1m95 0h1m3 0h1m4 0h1m3 0h1m7 0h1m3 0h1m4 0h1m3 0h1m-174 1h1m4 0h1m3 0h1m3 0h1m8 0h1m3 0h1m3 0h1m3 0h1m8 0h1m3 0h1m84 0h1m6 0h1m4 0h1m3 0h1m4 0h1m6 0h1m4 0h1m3 0h1m3 0h1m-170 1h1m4 0h1m3 0h1m8 0h1m3 0h1m3 0h1m3 0h1m8 0h1m3 0h1m3 0h1m2 0h1m69 0h1m3 0h1m3 0h1m7 0h1m3 0h1m4 0h1m3 0h1m6 0h1m4 0h1m3 0h1m4 0h1m-171 1h1m3 0h1m4 0h1m8 0h1m3 0h1m3 0h1m3 0h1m7 0h1m4 0h1m3 0h1m2 0h1m65 0h1m3 0h1m3 0h1m3 0h1m7 0h1m3 0h1m4 0h1m3 0h1m7 0h1m3 0h1m4 0h1m-163 1h1m3 0h1m8 0h1m4 0h1m2 0h1m4 0h1m7 0h1m3 0h1m3 0h1m3 0h1m7 0h1m3 0h1m3 0h1m3 0h1m25 0h1m3 0h1m3 0h1m3 0h1m7 0h1m3 0h1m3 0h1m3 0h1m7 0h1m3 0h1m4 0h1m3 0h1m7 0h1m4 0h1m3 0h1m-159 1h1m8 0h1m3 0h1m3 0h1m3 0h1m8 0h1m3 0h1m3 0h1m3 0h1m7 0h1m3 0h1m3 0h1m3 0h1m7 0h1m3 0h1m2 0h1m3 0h1m6 0h1m3 0h1m3 0h1m3 0h1m7 0h1m3 0h1m4 0h1m3 0h1m6 0h1m4 0h1m3 0h1m4 0h1m6 0h1m4 0h1m-146 1h1m3 0h1m3 0h1m3 0h1m8 0h1m3 0h1m3 0h1m2 0h1m8 0h1m3 0h1m3 0h1m3 0h1m7 0h1m3 0h1m2 0h1m3 0h1m6 0h1m3 0h1m3 0h1m3 0h1m7 0h1m4 0h1m3 0h1m3 0h1m7 0h1m3 0h1m4 0h1m3 0h1m7 0h1m-143 1h1m4 0h1m3 0h1m3 0h1m7 0h1m4 0h1m3 0h1m2 0h1m8 0h1m3 0h1m3 0h1m3 0h1m7 0h1m3 0h1m2 0h1m3 0h1m6 0h1m3 0h1m3 0h1m3 0h1m8 0h1m3 0h1m3 0h1m3 0h1m7 0h1m3 0h1m4 0h1m3 0h1m-135 1h1m3 0h1m3 0h1m4 0h1m7 0h1m3 0h1m3 0h1m3 0h1m8 0h1m3 0h1m3 0h1m3 0h1m7 0h1m3 0h1m2 0h1m3 0h1m6 0h1m3 0h1m3 0h1m4 0h1m7 0h1m3 0h1m3 0h1m3 0h1m7 0h1m3 0h1m4 0h1m4 0h1m-132 1h1m3 0h1m3 0h1m8 0h1m3 0h1m3 0h1m3 0h1m8 0h1m3 0h1m3 0h1m3 0h1m7 0h1m3 0h1m2 0h1m3 0h1m6 0h1m3 0h1m3 0h1m4 0h1m7 0h1m3 0h1m3 0h1m3 0h1m7 0h1m4 0h1m4 0h1m3 0h1m-128 1h1m3 0h1m8 0h1m3 0h1m3 0h1m3 0h1m7 0h1m4 0h1m3 0h1m3 0h1m7 0h1m3 0h1m2 0h1m3 0h1m6 0h1m3 0h1m3 0h1m4 0h1m7 0h1m3 0h1m3 0h1m3 0h1m8 0h1m3 0h1m4 0h1m-120 1h1m7 0h1m4 0h1m3 0h1m3 0h1m7 0h1m3 0h1m3 0h1m3 0h1m8 0h1m3 0h1m2 0h1m3 0h1m7 0h1m3 0h1m3 0h1m3 0h1m7 0h1m3 0h1m3 0h1m4 0h1m7 0h1m3 0h1m-107 1h1m3 0h1m4 0h1m3 0h1m7 0h1m3 0h1m3 0h1m3 0h1m7 0h1m3 0h1m3 0h1m3 0h1m7 0h1m3 0h1m3 0h1m3 0h1m7 0h1m4 0h1m3 0h1m3 0h1m7 0h1m-103 1h1m3 0h1m3 0h1m3 0h1m8 0h1m3 0h1m3 0h1m3 0h1m7 0h1m3 0h1m3 0h1m3 0h1m7 0h1m3 0h1m3 0h1m3 0h1m8 0h1m3 0h1m3 0h1m3 0h1m-91 1h1m3 0h1m3 0h1m8 0h1m3 0h1m3 0h1m3 0h1m7 0h1m3 0h1m3 0h1m3 0h1m7 0h1m3 0h1m3 0h1m4 0h1m7 0h1m3 0h1m3 0h1m-79 1h1m8 0h1m3 0h1m3 0h1m3 0h1m7 0h1m3 0h1m3 0h1m3 0h1m7 0h1m3 0h1m3 0h1m4 0h1m7 0h1m3 0h1m-66 1h1m3 0h1m3 0h1m3 0h1m7 0h1m3 0h1m3 0h1m3 0h1m7 0h1m3 0h1m3 0h1m4 0h1m7 0h1m-62 1h1m3 0h1m3 0h1m3 0h1m7 0h1m3 0h1m3 0h1m3 0h1m7 0h1m3 0h1m3 0h1m4 0h1m-34 1h1m3 0h1m3 0h1m3 0h1"/>
<path stroke="#f00" d="M395 49h3m7 0h3m-14 1h1m3 0h1m5 0h1m3 0h1m-16 1h1m5 0h1m3 0h1m5 0h1m-17 1h1m5 0h1m3 0h1m5 0h1m-17 1h1m5 0h1m3 0h1m5 0h1m-16 1h1m5 0h1m1 0h1m5 0h1m-14 1h1m4 0h1m1 0h1m4 0h1m-8 1h1m1 0h1m-3 1h1m1 0h1m-2 1h1m-1 1h1m-1 1h1m-1 1h1m-1 1h1m-1 1h1m-1 1h1m-1 1h1m345 41h3m-4 1h1m3 0h1m-6 1h1m5 0h1m-7 1h1m5 0h1m-7 1h1m5 0h1m-6 1h1m3 0h1m-7 1h1m1 0h1m3 0h1m-6 1h1m5 0h1m0 1h1m-358 23h6m-2 1h2m-3 1h1m1 0h1m-4 1h1m2 0h1m-5 1h1m3 0h1m-6 1h1m4 0h1m-14 1h5m2 0h1m-9 1h1m5 0h2m-9 1h1m7 0h1m-10 1h1m9 0h1m355 0h3m-369 1h1m9 0h1m356 0h2m-369 1h1m9 0h1m355 0h1m1 0h1m-369 1h1m9 0h1m350 0h1m3 0h1m-366 1h1m9 0h1m351 0h1m1 0h1m-364 1h1m7 0h1m353 0h1m-362 1h1m5 0h1m353 0h1m1 0h1m-362 1h5m353 0h1m3 0h1m-6 1h1m-437 3h1m1 0h1m-5 1h1m4 0h1m0 1h1m-9 1h2m7 0h1m0 1h1m-13 1h1m-3 1h1m14 0h2m-1 1h1m-19 1h2m17 0h1m0 1h1m-23 1h1m22 0h1m-26 1h1m1 0h1m24 1h1m-30 1h1m29 0h1m-30 1h1m29 0h1m52 0h1m-87 1h1m33 0h1m-37 1h1m36 0h1m-36 1h1m36 1h1m-44 1h1m2 0h1m40 1h1m39 0h4m-90 1h1m47 0h1m33 0h4m-84 1h1m45 0h2m28 0h4m-84 1h1m75 0h4m-82 1h1m53 0h2m18 0h4m-75 1h1m51 0h1m14 0h4m-76 1h1m57 0h1m9 0h4m-13 1h1m4 0h4m-70 1h1m3 0h1m57 0h4m-68 1h1m59 0h4m409 0h2m3 0h2m-424 1h4m6 0h1m405 0h1m2 0h1m1 0h1m2 0h1m-483 1h1m4 0h1m48 0h4m11 0h1m404 0h1m2 0h1m1 0h1m2 0h1m-485 1h1m51 0h4m15 0h1m405 0h1m1 0h1m1 0h1m1 0h1m-480 1h1m43 0h4m21 0h1m406 0h1m-483 1h1m45 0h4m25 0h2m405 0h1m-441 1h4m436 0h1m-485 1h1m4 0h1m34 0h4m36 0h1m403 0h1m-449 1h4m41 0h1m402 0h1m-453 1h4m45 0h1m-86 1h1m31 0h4m51 0h1m-60 1h4m55 0h1m-90 1h1m25 0h4m-32 1h1m6 0h1m16 0h4m65 0h2m-201 1h1m125 0h4m70 0h1m-202 1h1m104 0h1m5 0h1m12 0h3m75 0h1m-213 1h2m7 0h1m120 0h4m79 0h1m-212 1h1m6 0h1m103 0h1m12 0h4m83 0h2m-212 1h1m5 0h1m101 0h1m6 0h1m3 0h4m-123 1h1m5 0h1m108 0h4m93 0h2m-214 1h1m5 0h1m99 0h1m4 0h4m99 0h1m-216 1h1m6 0h1m97 0h1m2 0h4m1 0h1m101 0h1m-216 1h1m6 0h1m96 0h4m109 0h1m-219 1h1m7 0h1m92 0h4m113 0h2m-220 1h1m7 0h1m88 0h4m10 0h1m-113 1h1m8 0h1m84 0h4m5 0h1m117 0h2m-223 1h1m8 0h1m80 0h4m128 0h1m-224 1h1m9 0h1m76 0h4m19 0h1m113 0h1m-225 1h15m68 0h4m13 0h1m125 0h1m-217 1h1m68 0h4m24 0h1m118 0h1m-217 1h1m64 0h4m19 0h1m-28 1h4m21 0h1m130 0h1m1 0h1m-163 1h4m33 0h1m124 0h1m-167 1h4m27 0h1m134 0h1m-171 1h4m168 0h1m-177 1h4m33 0h1m8 0h1m129 0h2m-182 1h4m35 0h1m-59 1h1m14 0h4m182 0h2m-192 1h4m41 0h1m9 0h1m136 0h1m-197 1h4m43 0h1m148 0h1m-199 1h2m198 0h1m-154 1h1m10 0h1m141 0h2m-157 2h1m9 0h1m145 0h1m1 0h1m-161 1h1m159 0h1m-1 1h1m-163 1h1m10 0h1m153 0h1m-2 1h2m-168 1h1m-3 1h1m11 0h1m157 0h1m1 0h1m-1 1h1m362 0h3m-540 1h1m173 0h1m360 0h2m3 0h2m-531 1h1m164 0h1m358 0h1m5 0h1m-544 1h1m177 0h2m356 0h1m7 0h1m-547 1h1m11 0h1m525 0h1m3 0h1m3 0h1m-365 1h2m354 0h1m7 0h1m-549 1h1m185 0h1m354 0h1m5 0h1m-550 1h1m12 0h1m173 0h1m355 0h2m3 0h2m-360 1h1m354 0h3m-550 1h1m190 0h2m-181 1h1m-15 1h1m194 0h1m1 0h1m-200 1h1m198 0h1m-187 1h1m185 0h1m-202 1h1m203 0h1m-2 1h1m-206 1h1m13 0h1m-17 1h1m208 0h1m1 0h1m-199 1h1m197 0h1m-214 1h1m211 0h1m-215 1h1m216 0h1m-204 1h1m201 0h1m1 0h1m-221 1h1m219 1h1m1 0h1m-225 1h1m14 0h1m208 0h1m-227 1h1m225 0h1m2 1h1m-232 1h1m15 0h1m213 0h2m-234 2h1m233 0h1m1 0h1m-239 1h1m16 0h1m220 0h1m-1 1h1m-241 1h1m15 0h1m226 0h1m-3 1h1m1 0h1m-246 1h1m-3 1h1m16 0h1m229 0h1m2 0h1m-1 1h1m-253 1h1m250 0h1m-254 1h1m17 0h1m237 0h1m-2 1h1m1 0h1m-260 1h1m587 0h3m-574 1h1m241 0h1m1 0h1m327 0h2m-593 1h1m262 0h1m326 0h1m1 0h1m-595 1h1m17 0h1m246 0h1m322 0h2m1 0h1m-324 1h1m318 0h1m2 0h1m-324 1h1m318 0h1m4 0h1m-577 1h1m570 0h1m4 0h1m-324 1h1m2 0h1m315 0h1m2 0h1m-320 1h1m316 0h2m-578 1h1m257 0h1m3 1h1m318 0h1m-322 1h1m1 0h1m312 0h2m3 0h1m-584 1h1m579 0h1m2 0h1m-319 1h1m2 0h1m311 0h1m2 0h1m-316 1h1m310 0h1m3 0h1m-587 1h1m269 0h1m311 0h1m3 0h1m-314 1h1m307 0h1m4 0h1m-590 1h1m274 0h2m307 0h8m-3 1h1m-593 2h1m318 0h5m-7 1h2m5 0h2m-10 1h1m9 0h1m-336 1h1m291 0h1m7 0h1m23 0h1m11 0h1m-14 1h1m13 0h1m-15 1h1m13 0h1m-16 1h1m15 0h1m-17 1h1m15 0h1m-17 1h1m7 0h1m7 0h1m-17 1h1m15 0h1m-17 1h1m15 0h1m-16 1h1m13 0h1m-15 1h1m13 0h1m-14 1h1m11 0h1m-12 1h1m9 0h1m-10 1h2m5 0h2m-7 1h5m-445 11h5m-6 1h1m5 0h1m-8 1h1m7 0h1m-10 1h1m9 0h1m-12 1h1m11 0h1m-13 1h1m11 0h1m-13 1h1m11 0h1m-13 1h1m11 0h1m-13 1h1m11 0h1m-12 1h1m9 0h1m-10 1h1m7 0h1m-9 1h1m7 0h1m-13 1h1m3 0h1m7 0h1m-12 1h1m1 0h1m9 0h1m-12 1h1m11 0h1m0 1h1m0 1h1m413 161h5m-2 1h2m-3 1h1m1 0h1m-4 1h1m2 0h1m-5 1h1m3 0h1m-6 1h1m-10 1h1m7 0h1m-8 1h1m5 0h1m-6 1h1m3 0h1m-4 1h1m1 0h1m-2 1h1m-2 1h1m1 0h1m-4 1h1m3 0h1m-6 1h1m5 0h1m-8 1h1m7 0h1m-10 1h1m-2 1h1"/>
<path stroke="#0f0" d="M135 82h1m13 0h1m-14 1h1m11 0h1m-12 1h11m-9 1h1m5 0h1m-7 1h1m5 0h1m-7 1h1m5 0h1m-7 1h1m5 0h1m-7 1h1m5 0h1m-7 1h1m5 0h1m-7 1h1m5 0h1m-7 1h1m5 0h1m-7 1h1m5 0h1m-7 1h1m5 0h1m-7 1h1m5 0h1m-9 1h11m-12 1h1m11 0h1m-14 1h1m13 0h1m597 30h3m-4 1h1m3 0h1m-5 1h1m3 0h1m-7 1h4m1 0h4m-9 2h9m-7 33h1m2 0h1m2 0h1m-8 1h2m1 0h2m1 0h1m-7 1h1m1 0h2m1 0h2m-8 1h1m2 0h1m2 0h1m-5 2h1m2 0h1m2 0h1m-8 1h2m1 0h2m1 0h1m-7 1h1m1 0h2m1 0h2m-8 1h1m2 0h1m2 0h1m-524 1h1m0 1h2m142 0h1m-143 1h2m140 0h1m-141 1h2m134 0h3m-138 1h2m132 0h2m-134 1h2m127 0h1m1 0h1m-130 1h2m125 0h2m-127 1h2m119 0h1m1 0h2m-124 1h3m117 0h2m-120 1h3m111 0h1m1 0h2m-116 1h3m110 0h1m-113 1h4m103 0h1m2 0h2m-110 1h2m1 0h1m102 0h2m-106 1h2m1 0h1m95 0h1m2 0h2m-102 1h2m1 0h1m95 0h1m-99 1h3m89 0h1m3 0h2m-96 1h3m89 0h2m-92 1h3m81 0h1m3 0h2m-89 1h4m81 0h2m-85 1h4m73 0h1m4 0h1m-81 1h2m1 0h1m74 0h2m-78 1h2m1 0h1m65 0h1m4 0h2m-75 1h3m1 0h1m66 0h2m-71 1h3m1 0h1m57 0h1m5 0h1m-67 1h3m1 0h1m59 0h2m-65 1h3m2 0h1m49 0h1m5 0h2m-138 1h3m74 0h2m3 0h1m51 0h2m-133 1h4m72 0h3m2 0h1m41 0h1m6 0h1m-127 1h4m70 0h3m2 0h1m44 0h2m-122 1h4m67 0h3m3 0h1m33 0h1m6 0h2m-116 1h4m65 0h3m3 0h1m36 0h2m-110 1h4m63 0h3m29 0h1m6 0h2m424 0h1m6 0h1m-536 1h4m60 0h4m1 0h1m21 0h1m9 0h1m427 0h6m-531 1h4m58 0h3m2 0h1m27 0h2m429 0h1m2 0h1m-526 1h5m55 0h3m2 0h1m13 0h1m9 0h2m431 0h1m2 0h1m-521 1h4m53 0h3m2 0h1m19 0h2m433 0h1m2 0h1m-514 1h1m50 0h4m2 0h1m5 0h1m10 0h1m435 0h1m2 0h1m-513 1h4m48 0h3m3 0h1m12 0h2m436 0h1m2 0h1m-509 1h4m46 0h3m1 0h1m1 0h1m8 0h2m437 0h6m-506 1h4m43 0h4m3 0h1m4 0h2m438 0h1m6 0h1m-503 1h4m38 0h1m2 0h4m3 0h3m-51 1h4m39 0h3m2 0h1m1 0h1m-47 1h4m26 0h1m10 0h3m4 0h1m-45 1h5m31 0h6m4 0h1m-42 1h4m13 0h1m11 0h2m4 0h4m4 0h1m-40 1h4m20 0h1m8 0h3m5 0h1m-38 1h4m1 0h1m12 0h2m10 0h4m-30 1h4m8 0h2m14 0h4m3 0h1m-39 1h1m6 0h4m2 0h2m18 0h4m3 0h1m-30 1h4m20 0h3m4 0h1m-47 1h1m13 0h2m3 0h4m17 0h4m4 0h1m-37 1h2m9 0h5m14 0h4m4 0h1m-55 1h1m13 0h2m16 0h4m12 0h4m4 0h1m-45 1h2m22 0h4m9 0h4m5 0h1m-63 1h1m14 0h1m28 0h4m7 0h4m5 0h1m-52 1h2m33 0h4m5 0h4m5 0h1m-71 1h1m14 0h2m39 0h4m3 0h4m5 0h1m-60 1h2m45 0h8m6 0h1m-79 1h1m15 0h1m51 0h6m6 0h1m-67 1h2m56 0h4m6 0h1m-87 1h1m15 0h2m59 0h8m3 0h1m-93 1h1m17 0h2m63 0h4m2 0h4m-77 1h2m67 0h4m4 0h4m-101 1h1m18 0h1m71 0h4m5 0h5m-88 1h2m73 0h5m5 0h1m2 0h4m-113 1h1m18 0h2m77 0h5m5 0h1m4 0h4m-100 1h2m81 0h1m1 0h2m6 0h1m6 0h4m105 0h1m11 0h1m-243 1h1m19 0h1m84 0h5m6 0h1m8 0h4m102 0h1m9 0h1m-224 1h2m87 0h5m6 0h1m10 0h5m98 0h1m7 0h1m-245 1h1m19 0h2m91 0h5m6 0h1m13 0h4m94 0h1m7 0h1m-227 1h2m95 0h1m1 0h2m7 0h1m15 0h4m90 0h1m3 0h1m3 0h1m-249 1h1m20 0h1m98 0h5m7 0h1m17 0h4m86 0h1m3 0h1m3 0h1m-230 1h2m101 0h5m7 0h1m19 0h4m82 0h9m-253 1h1m20 0h2m105 0h1m1 0h3m7 0h1m21 0h4m78 0h1m3 0h1m3 0h1m-234 1h2m108 0h2m1 0h2m8 0h1m23 0h4m74 0h1m3 0h1m3 0h1m-257 1h1m20 0h2m112 0h5m8 0h1m25 0h4m69 0h1m4 0h1m4 0h1m-238 1h1m116 0h5m8 0h1m27 0h4m64 0h1m5 0h1m5 0h1m-263 1h1m21 0h2m119 0h1m1 0h3m38 0h5m65 0h1m-237 1h2m122 0h5m7 0h1m34 0h4m60 0h3m-262 1h1m21 0h2m126 0h5m7 0h1m36 0h4m55 0h1m3 0h1m-242 1h1m130 0h1m1 0h3m7 0h1m38 0h2m53 0h1m3 0h1m-267 1h1m22 0h2m132 0h2m1 0h3m7 0h1m41 0h3m47 0h1m3 0h1m271 0h1m3 0h1m-522 1h2m136 0h5m8 0h1m42 0h4m44 0h3m273 0h3m-546 1h1m22 0h2m140 0h5m8 0h1m44 0h4m12 0h1m302 0h1m3 0h1m-525 1h1m144 0h1m1 0h3m8 0h1m46 0h4m120 0h1m5 0h1m5 0h1m178 0h1m3 0h1m-551 1h1m23 0h2m146 0h2m1 0h3m8 0h1m48 0h3m36 0h5m75 0h2m4 0h2m4 0h1m179 0h1m3 0h1m-529 1h2m150 0h5m9 0h1m84 0h1m5 0h1m74 0h1m1 0h1m3 0h1m1 0h1m3 0h1m180 0h3m-554 1h1m23 0h2m154 0h1m1 0h3m9 0h1m81 0h1m7 0h1m72 0h1m2 0h1m2 0h1m2 0h1m2 0h1m182 0h1m-531 1h2m157 0h2m1 0h3m9 0h1m79 0h1m7 0h1m71 0h1m3 0h1m1 0h1m3 0h1m1 0h1m181 0h5m-559 1h1m24 0h1m161 0h2m1 0h3m9 0h1m77 0h1m7 0h1m71 0h1m4 0h2m4 0h2m183 0h1m-534 1h2m164 0h5m10 0h1m75 0h1m7 0h1m70 0h1m5 0h1m5 0h1m-376 1h1m24 0h2m168 0h1m1 0h3m10 0h1m73 0h1m7 0h1m266 0h3m-566 1h1m26 0h2m171 0h2m1 0h3m83 0h1m5 0h1m266 0h1m3 0h1m-541 1h1m175 0h2m1 0h3m8 0h1m73 0h5m267 0h1m3 0h1m-571 1h1m27 0h2m178 0h1m1 0h3m9 0h1m73 0h1m78 0h1m5 0h1m5 0h1m178 0h1m3 0h1m-545 1h2m181 0h2m1 0h3m9 0h1m71 0h1m77 0h2m4 0h2m4 0h1m180 0h3m-574 1h1m27 0h2m185 0h2m1 0h3m9 0h1m69 0h1m77 0h1m1 0h1m3 0h1m1 0h1m3 0h1m181 0h1m-547 1h2m189 0h2m1 0h3m9 0h1m63 0h9m72 0h1m2 0h1m2 0h1m2 0h1m2 0h1m180 0h5m-579 1h1m28 0h1m193 0h1m1 0h3m10 0h1m65 0h1m75 0h1m3 0h1m1 0h1m3 0h1m1 0h1m183 0h1m-550 1h2m195 0h2m1 0h3m10 0h1m63 0h1m75 0h1m4 0h2m4 0h2m183 0h1m-581 1h1m28 0h2m199 0h2m1 0h3m10 0h1m61 0h1m74 0h1m5 0h1m5 0h1m-369 1h2m203 0h1m2 0h3m10 0h1m59 0h1m-313 1h1m29 0h1m206 0h2m1 0h3m11 0h1m-227 1h2m209 0h2m1 0h3m11 0h1m-261 1h1m29 0h2m213 0h2m1 0h3m11 0h1m-235 1h2m217 0h1m2 0h3m11 0h1m-238 1h1m220 0h2m1 0h4m11 0h1m-242 1h2m223 0h2m1 0h3m-4 1h1m2 0h3m10 0h1m-248 1h2m230 0h2m1 0h4m10 0h1m-252 1h2m234 0h2m1 0h4m10 0h1m-255 1h1m238 0h2m1 0h3m11 0h1m-259 1h2m241 0h1m2 0h3m-251 1h2m244 0h2m1 0h4m11 0h1m-267 1h2m248 0h2m1 0h4m11 0h1m-270 1h1m252 0h1m2 0h3m18 0h1m-280 1h2m254 0h2m2 0h3m-265 1h2m258 0h2m1 0h4m-269 1h2m262 0h2m1 0h4m-273 1h2m266 0h1m2 0h3m-275 1h1m269 0h2m2 0h3m-279 1h2m272 0h2m1 0h3m-282 1h2m276 0h1m2 0h2m-285 1h2m279 0h2m-284 1h1m284 0h1m0 1h1m7 1h1m295 5h1m5 0h1m-6 1h1m3 0h1m-5 1h1m1 0h1m1 0h1m-5 1h5m-5 1h1m1 0h1m1 0h1m-6 1h1m2 0h1m2 0h1m-5 1h3m-3 1h1m1 0h1m-2 1h1m-276 1h1m7 0h1m-8 1h1m5 0h1m-6 1h5m-6 1h1m5 0h1m-8 1h1m7 0h1m-9 1h1m7 0h1m-9 1h1m7 0h1m-9 1h1m7 0h1m-9 1h1m7 0h1m-8 1h1m5 0h1m-6 1h5m-3 1h1m-1 1h1m-1 1h1m-5 1h9m-5 1h1m-1 1h1m-283 206h5m-6 1h1m5 0h1m-8 1h1m7 0h1m-9 1h1m7 0h1m-9 1h1m7 0h1m-8 1h1m5 0h1m-12 1h7m3 0h7m-17 4h17"/>
<path stroke="#00f" d="M500 133h1m15 0h1m-16 1h1m13 0h1m-14 1h1m11 0h1m-12 1h1m9 0h1m230 0h1m1 0h1m1 0h1m-246 1h1m9 0h1m231 0h1m1 0h1m1 0h1m-246 1h1m7 0h1m232 0h1m1 0h1m1 0h1m-246 1h1m7 0h1m232 0h1m1 0h1m1 0h1m-246 1h1m7 0h1m232 0h1m1 0h1m1 0h1m-250 1h17m228 0h1m1 0h1m1 0h1m-246 1h1m7 0h1m232 0h1m1 0h1m1 0h1m2 0h1m-249 1h1m7 0h1m232 0h1m1 0h1m1 0h1m2 0h1m-249 1h1m7 0h1m237 0h2m-249 1h1m9 0h1m-11 1h1m9 0h1m-12 1h1m11 0h1m-14 1h1m13 0h1m-16 1h1m15 0h1m227 27h1m7 0h1m-8 1h1m5 0h1m-6 1h1m3 0h1m-5 1h1m3 0h1m-7 1h9m-7 1h1m3 0h1m-5 1h1m3 0h1m-6 1h1m5 0h1m-8 1h1m7 0h1m-698 6h5m-8 1h3m5 0h1m-10 1h1m9 0h3m-14 1h1m9 0h1m3 0h1m-16 1h1m9 0h1m5 0h1m-7 1h1m5 0h1m-15 1h3m5 0h1m5 0h1m-16 1h1m3 0h1m5 0h1m3 0h1m-16 1h1m5 0h1m5 0h3m-15 1h1m5 0h1m-7 1h1m5 0h1m9 0h1m-16 1h1m3 0h1m9 0h1m-14 1h3m9 0h1m-10 1h1m5 0h3m-8 1h5m687 13h3m-5 1h2m3 0h2m-8 1h1m4 0h1m2 0h1m-8 1h2m2 0h1m2 0h1m-9 1h1m2 0h1m2 0h2m-8 1h1m2 0h1m4 0h1m-8 1h2m3 0h2m-5 1h3m-4 22h3m-4 1h1m3 0h2m-5 1h1m3 0h1m-4 1h1m3 0h1m-5 1h1m3 0h1m-5 1h1m3 0h1m-6 1h1m3 0h1m-6 1h1m3 0h2m-5 1h3m-632 14h5m-6 1h1m5 0h2m-9 1h1m8 0h1m-9 1h1m8 0h1m-9 1h1m8 0h1m-9 1h1m7 0h1m-9 1h1m8 0h1m-9 1h1m7 0h1m-9 1h1m7 0h1m-9 1h1m7 0h1m-10 1h1m8 0h1m344 0h1m5 0h1m5 0h1m-367 1h1m7 0h1m345 0h1m5 0h1m5 0h1m-368 1h1m8 0h1m24 0h1m319 0h3m2 0h5m2 0h3m-370 1h1m8 0h1m30 0h1m2 0h2m2 0h2m307 0h1m5 0h1m5 0h1m-370 1h1m8 0h1m39 0h1m2 0h2m2 0h2m2 0h2m2 0h2m291 0h1m5 0h1m5 0h1m-369 1h1m5 0h2m56 0h1m2 0h2m2 0h2m2 0h2m2 0h2m276 0h1m4 0h1m4 0h1m-367 1h5m70 0h1m3 0h1m2 0h2m2 0h2m2 0h2m2 0h2m260 0h1m4 0h1m4 0h1m-276 1h1m3 0h1m2 0h2m2 0h2m2 0h2m2 0h2m245 0h2m2 0h1m2 0h2m-259 1h1m3 0h1m2 0h2m2 0h2m2 0h2m2 0h2m3 0h1m227 0h5m-245 1h1m3 0h1m3 0h1m2 0h2m2 0h2m2 0h2m2 0h2m3 0h1m213 0h1m-227 1h1m3 0h1m3 0h1m2 0h1m3 0h2m2 0h2m2 0h2m3 0h1m197 0h1m-215 1h1m3 0h1m3 0h1m3 0h1m2 0h1m3 0h2m2 0h2m2 0h2m3 0h1m181 0h1m-199 1h1m3 0h1m3 0h1m3 0h1m2 0h1m3 0h2m2 0h2m2 0h2m3 0h1m3 0h1m157 0h9m-187 1h1m3 0h1m3 0h1m6 0h1m3 0h1m3 0h2m2 0h2m3 0h1m3 0h1m145 0h1m-171 1h1m3 0h1m3 0h1m3 0h1m6 0h1m3 0h1m3 0h2m2 0h2m3 0h1m3 0h1m129 0h1m-155 1h1m3 0h1m3 0h1m10 0h1m3 0h1m3 0h2m2 0h2m3 0h1m3 0h1m113 0h1m-143 1h1m3 0h1m3 0h1m3 0h1m10 0h1m3 0h1m3 0h2m2 0h2m3 0h1m3 0h1m97 0h1m-127 1h1m3 0h1m3 0h1m3 0h1m10 0h1m3 0h1m3 0h2m2 0h2m3 0h1m3 0h1m3 0h1m-33 1h1m3 0h1m3 0h1m14 0h1m3 0h1m3 0h1m3 0h2m3 0h1m3 0h1m3 0h1m-37 1h1m3 0h1m3 0h1m3 0h1m14 0h1m3 0h1m3 0h1m3 0h2m3 0h1m3 0h1m3 0h1m-37 1h1m3 0h1m3 0h1m18 0h1m3 0h1m3 0h1m3 0h2m3 0h1m8 0h1m-42 1h1m3 0h1m3 0h1m3 0h1m18 0h1m3 0h1m-20 1h1m3 0h1m3 0h1m3 1h1m3 0h1m304 15h1m2 0h1m2 0h1m-8 1h2m1 0h3m1 0h2m-8 1h1m2 0h1m2 0h1m-6 1h1m1 0h1m1 0h1m-4 1h3m-2 1h1m-3 1h5m-3 1h1m-1 1h1m-4 2h1m2 0h1m2 0h1m-7 1h1m1 0h1m1 0h1m1 0h1m-7 1h1m2 0h1m2 0h1m-6 1h1m3 0h1m-4 1h3m-2 1h1m-3 1h5m-3 1h1m-1 1h1m-356 81h1m12 16h1m4 0h3m4 0h1m-13 1h1m3 0h1m3 0h1m3 0h1m-13 1h1m3 0h1m3 0h1m3 0h1m-13 1h1m3 0h1m3 0h1m3 0h1m-13 1h1m4 0h3m4 0h1m-12 1h1m9 0h1m-11 1h1m9 0h1m-10 1h2m5 0h2m-7 1h5m-3 1h1m-1 1h1m-1 1h1m-5 1h9m-5 1h1m-1 1h1m-1 1h1m-1 1h1m-90 104h1m3 0h1m3 0h1m-8 1h1m1 0h1m1 0h1m1 0h1m1 0h1m-8 1h1m3 0h1m3 0h1m-9 1h1m3 0h1m3 0h1m-9 1h1m3 0h1m3 0h1m-9 1h1m3 0h1m3 0h1m-9 1h1m3 0h1m3 0h1m-9 1h1m3 0h1m3 0h1m-9 1h1m3 0h1m3 0h1m-9 1h1m3 0h1m3 0h1m-9 1h1m3 0h1m3 0h1m-9 1h1m3 0h1m3 0h1m4 0h1m-14 1h1m3 0h1m3 0h1m3 0h3m-15 1h1m3 0h1m3 0h1m4 0h1m-14 1h1m3 0h1m3 0h1m4 0h1m-5 1h1m2 0h1m-3 1h2"/>
<path stroke="#0ff" d="M228 175h72m0 1h72m1 0h1m0 1h1m-1 1h1m0 1h1m-1 1h1m0 1h1m-1 1h2m-1 1h1m-1 1h2m-1 1h1m0 1h1m-1 1h1m0 1h1m-1 1h1m0 1h1m-1 1h2m-1 1h1m0 1h1m-1 1h2m-1 1h1m-1 1h1m0 1h2m-2 1h2m-1 1h1m-1 1h3m-2 1h1m0 1h1m-1 1h2m-1 1h1m-1 1h2m-1 1h2m-2 1h2m-1 1h1m-1 1h3m-2 1h2m-1 1h1m-1 1h3m-2 1h1m-1 1h2m-1 1h1m1 0h1m-3 1h2m-1 1h2m-1 1h2m-2 1h2m-1 1h1m-1 1h3m-2 1h1m-1 1h2m-1 1h3m-3 1h2m-1 1h2m-1 1h1m1 0h1m-3 1h2m-1 1h1m-1 1h2m1 0h1m-3 1h2m-2 1h2m-1 1h2m1 0h1m-4 1h2m-1 1h2m-1 1h1m1 0h1m-3 1h2m-1 1h2m-2 1h2m1 0h1m-3 1h2m-2 1h2m-1 1h2m1 0h1m-3 1h1m-1 1h2m-1 1h2m1 0h1m-4 1h2m-1 1h2m-2 1h2m2 0h1m-4 1h2m-2 1h2m-1 1h2m1 0h1m-3 1h2m-2 1h2m-1 1h2m1 0h1m-4 1h2m-1 1h2m-2 1h2m2 0h1m-4 1h2m-2 1h3m-2 1h2m2 0h1m-4 1h2m-2 1h2m-1 1h2m2 0h1m-5 1h2m-1 1h2m-2 1h3m1 0h1m-4 1h2m-1 1h2m-2 1h2m2 0h1m-4 1h2m-2 1h3m-2 1h2m2 0h1m-5 1h3m-2 1h2m-2 1h3m2 0h1m-5 1h2m-1 1h2m-2 1h3m2 0h1m-5 1h2m-2 1h3m-2 1h2m3 0h1m-6 1h3m-2 1h2m-2 1h3m2 0h1m-5 1h3m-2 1h2m-2 1h3m2 0h1m-5 1h2m-2 1h3m-2 1h2m3 0h1m-6 1h3m-2 1h3m-2 1h3m-3 1h3m-2 1h2m-2 1h3m-2 1h2m-2 1h2m-5 1h1m3 0h1m-1 1h1m-6 2h1m-3 3h1m-2 3h1m-2 3h1m-3 3h1m-2 3h1m-2 3h1m-2 3h1m-3 3h1m-2 3h1m-2 3h1m-3 3h1m-2 3h1m-2 3h1m-3 3h1m-2 3h1m-2 3h1m-3 3h1m-2 3h1m-2 3h1m-3 3h1m-2 3h1m-2 3h1m-2 3h1m-3 3h1m-2 3h1m-2 3h1m-3 3h1m-2 3h1m-2 3h1m-3 3h1m-2 3h1m-2 3h1m-3 3h1m-2 3h1m-2 3h1m-3 3h1"/>
<path stroke="#ff0" d="M261 31h1m11 0h1m-12 1h1m9 0h1m-11 1h1m9 0h1m-10 1h2m5 0h2m-7 1h5m-7 1h2m5 0h2m-10 1h1m9 0h1m-11 1h1m9 0h1m-12 1h1m11 0h1m-13 1h1m11 0h1m-13 1h1m11 0h1m-13 1h1m11 0h1m-13 1h1m11 0h1m-12 1h1m9 0h1m-11 1h1m9 0h1m-10 1h2m5 0h2m-7 1h5m474 69h1m1 0h1m1 0h1m-4 1h1m1 0h1m1 0h1m1 0h1m-7 1h1m1 0h1m1 0h3m-7 1h1m1 0h1m1 0h1m1 0h1m-7 1h1m1 0h1m1 0h1m1 0h1m-7 1h1m1 0h1m1 0h1m1 0h1m-7 1h1m1 0h1m1 0h1m1 0h1m-7 1h1m1 0h1m2 0h1m-2 1h1m1 0h1m-545 12h1m-1 1h1m-5 1h9m-5 1h1m-1 1h1m-1 1h1m-1 1h1m3 0h3m-7 1h1m2 0h1m3 0h1m-8 1h3m5 0h1m-9 1h1m7 0h1m-9 1h1m7 0h1m-9 1h1m6 0h1m-8 1h1m5 0h1m-7 1h1m5 0h1m-7 1h1m5 0h1m96 0h1m-97 1h1m0 1h1m529 4h1m2 0h1m1 0h2m-8 1h2m2 0h2m2 0h1m-8 1h1m1 0h1m1 0h1m2 0h1m-8 1h1m1 0h1m2 0h2m-7 1h1m1 0h1m3 0h1m-6 1h1m5 0h1m-7 1h1m5 0h1m-7 1h1m5 0h1m-2 1h1m-528 6h1m520 26h1m5 0h1m-6 1h1m3 0h1m-4 1h3m-4 1h1m3 0h1m-6 1h1m5 0h1m-7 1h1m5 0h1m-7 1h1m5 0h1m-6 1h1m3 0h1m-4 1h3m-594 81h1m-1 4h1m285 2h1m-1 1h1m-288 1h1m286 0h1m0 1h1m-2 1h2m-1 1h1m303 0h1m-593 1h1m287 0h1m301 0h5m-307 1h1m303 0h1m-1 1h1m1 0h2m-308 1h1m303 0h2m2 0h1m-309 1h1m303 0h1m3 0h1m-5 1h1m2 0h1m-4 1h1m2 0h1m0 1h1m-217 89h1m5 0h1m3 0h3m-14 1h2m5 0h2m1 0h1m3 0h1m-16 1h1m1 0h1m5 0h1m1 0h1m5 0h1m-15 1h1m4 0h1m1 0h1m6 0h1m-15 1h1m3 0h1m3 0h1m5 0h1m-15 1h1m3 0h1m4 0h1m3 0h1m-14 1h1m3 0h1m5 0h3m-13 1h1m3 0h1m6 0h1m-12 1h1m3 0h1m7 0h1m-12 1h1m1 0h1m9 0h1m-12 1h1m11 0h1m-13 1h1m11 0h1m-13 1h1m11 0h1m-13 1h1m11 0h1m-13 1h1m11 0h1m-2 1h1m-2 1h1m-466 40h1m3 0h1m3 0h1m-8 1h1m1 0h1m1 0h1m1 0h1m1 0h1m-8 1h1m3 0h1m3 0h1m3 0h1m-13 1h1m3 0h1m3 0h1m2 0h2m-13 1h1m3 0h1m3 0h1m1 0h1m1 0h1m-13 1h1m3 0h1m3 0h2m2 0h1m-13 1h1m3 0h1m3 0h1m3 0h1m-13 1h1m3 0h1m3 0h1m3 0h1m-13 1h1m3 0h1m3 0h1m3 0h1m-13 1h1m3 0h1m3 0h1m3 0h1m-13 1h1m3 0h1m3 0h1m3 0h1m-13 1h1m3 0h1m3 0h1m3 0h1m-13 1h1m3 0h1m3 0h1m3 0h1m-13 1h1m3 0h1m4 0h1m1 0h1m-12 1h1m3 0h1m5 0h1m-2 1h1m1 0h1m-4 1h1m3 0h1"/>
<path stroke="#007f7f" d="M166 168h5m-6 1h1m5 0h1m-8 1h1m7 0h1m-10 1h1m9 0h1m-12 1h1m11 0h1m-13 1h1m11 0h1m-13 1h1m11 0h1m-13 1h1m11 0h1m-13 1h1m11 0h1m-12 1h1m9 0h1m-10 1h1m7 0h1m-9 1h1m7 0h1m-11 1h3m7 0h3m-14 1h1m2 0h1m7 0h1m2 0h1m-16 1h1m3 0h1m7 0h1m3 0h1m-16 1h1m1 0h1m9 0h1m1 0h1m-14 1h1m11 0h1m15 13h1m556 139h3m-4 1h1m3 0h1m-6 1h1m5 0h1m-7 1h1m5 0h1m-7 1h1m5 0h1m-6 1h1m3 0h1m-6 1h2m3 0h2m-8 1h1m1 0h1m3 0h1m1 0h1m-8 1h1m5 0h1"/>
</g>
<g class="hn" filter="url(#bin2)">
<text x="94.5" y="349" fill="#f00" text-anchor="middle">1</text>
<text x="137.5" y="436" fill="#ff0" text-anchor="middle">2</text>
<text x="226.5" y="501" fill="#0f0" text-anchor="middle">3</text>
<text x="343.5" y="509" fill="#00f" text-anchor="middle">4</text>
<text x="446.5" y="453" fill="#f00" text-anchor="middle">5</text>
<text x="502.5" y="357" fill="#ff0" text-anchor="middle">6</text>
<text x="504.5" y="259" fill="#0f0" text-anchor="middle">7</text>
<text x="461.5" y="172" fill="#00f" text-anchor="middle">8</text>
<text x="372.5" y="107" fill="#f00" text-anchor="middle">9</text>
<text x="255.5" y="99" fill="#ff0" text-anchor="middle">10</text>
<text x="152.5" y="155" fill="#0f0" text-anchor="middle">11</text>
<text x="96.5" y="251" fill="#00f" text-anchor="middle">12</text>
</g>
<g class="lb">
<text transform="translate(110.5,308) scale(0.93,2.12)" font-size="11" fill="#f00" filter="url(#bin3)">Asc</text>
<text transform="translate(303,129) scale(1,2.12)" font-size="11" fill="#ff0" filter="url(#bin3)">MC</text>
</g>
<g class="sb" xml:space="preserve" filter="url(#bin)">
<text x="605.5" y="14" fill="#fff">Astrolog 5.40</text>
<text x="605.5" y="24" fill="#bfbfbf">"$"</text>
<text x="605.5" y="34" fill="#bfbfbf">Mon January 28, 2002</text>
<text x="605.5" y="44" fill="#bfbfbf"> 5:30pm (ST +8:00 GMT)</text>
<text x="605.5" y="54" fill="#bfbfbf">"Taipei"</text>
<text x="605.5" y="64" fill="#bfbfbf">121°31E 25°03N</text>
<text x="605.5" y="74" fill="#bfbfbf">Placidus houses.</text>
<text x="605.5" y="84" fill="#bfbfbf">Tropical, Geocentric.</text>
<text x="605.5" y="94" fill="#bfbfbf">Julian Day = 2452302.8958</text>
<text x="605.5" y="114" fill="#f00"> 1st house:  7Leo58</text>
<text x="605.5" y="124" fill="#ff0"> 2nd house:  2Vir51</text>
<text x="605.5" y="134" fill="#0f0"> 3rd house:  1Lib32</text>
<text x="605.5" y="144" fill="#00f"> 4th house:  3Sco44</text>
<text x="605.5" y="154" fill="#f00"> 5th house:  6Sag52</text>
<text x="605.5" y="164" fill="#ff0"> 6th house:  8Cap26</text>
<text x="605.5" y="174" fill="#0f0"> 7th house:  7Aqu58</text>
<text x="605.5" y="184" fill="#00f"> 8th house:  2Pis51</text>
<text x="605.5" y="194" fill="#f00"> 9th house:  1Ari32</text>
<text x="605.5" y="204" fill="#ff0">10th house:  3Tau44</text>
<text x="605.5" y="214" fill="#0f0">11th house:  6Gem52</text>
<text x="605.5" y="224" fill="#00f">12th house:  8Can26</text>
<text x="605.5" y="244" fill="#f00"> Sun:</text>
<text x="641.5" y="244" fill="#0f0"> 8Aqu17</text>
<text x="695.5" y="244" fill="#bfbfbf">- 0°00'</text>
<text x="605.5" y="254" fill="#00f">Moon:</text>
<text x="641.5" y="254" fill="#f00"> 0Leo36</text>
<text x="695.5" y="254" fill="#bfbfbf">+ 2°54'</text>
<text x="605.5" y="264" fill="#0f0">Merc:</text>
<text x="641.5" y="264" fill="#0f0"> 6Aqu54</text>
<text x="683.5" y="264" fill="#fff">R</text>
<text x="695.5" y="264" fill="#bfbfbf">+ 3°29'</text>
<text x="605.5" y="274" fill="#0f0">Venu:</text>
<text x="641.5" y="274" fill="#0f0">11Aqu37</text>
<text x="695.5" y="274" fill="#bfbfbf">- 1°15'</text>
<text x="605.5" y="284" fill="#f00">Mars:</text>
<text x="641.5" y="284" fill="#f00"> 6Ari52</text>
<text x="695.5" y="284" fill="#bfbfbf">- 0°12'</text>
<text x="605.5" y="294" fill="#f00">Jupi:</text>
<text x="641.5" y="294" fill="#00f"> 7Can18</text>
<text x="683.5" y="294" fill="#fff">R</text>
<text x="695.5" y="294" fill="#bfbfbf">+ 0°04'</text>
<text x="605.5" y="304" fill="#ff0">Satu:</text>
<text x="641.5" y="304" fill="#0f0"> 8Gem08</text>
<text x="683.5" y="304" fill="#fff">R</text>
<text x="695.5" y="304" fill="#bfbfbf">- 1°42'</text>
<text x="605.5" y="314" fill="#0f0">Uran:</text>
<text x="641.5" y="314" fill="#0f0">23Aqu53</text>
<text x="695.5" y="314" fill="#bfbfbf">- 0°42'</text>
<text x="605.5" y="324" fill="#00f">Nept:</text>
<text x="641.5" y="324" fill="#0f0"> 8Aqu28</text>
<text x="695.5" y="324" fill="#bfbfbf">+ 0°06'</text>
<text x="605.5" y="334" fill="#00f">Plut:</text>
<text x="641.5" y="334" fill="#f00">16Sag56</text>
<text x="695.5" y="334" fill="#bfbfbf">+ 9°48'</text>
<text x="605.5" y="344" fill="#007f7f">Node:</text>
<text x="641.5" y="344" fill="#0f0">24Gem55</text>
<text x="683.5" y="344" fill="#fff">R</text>
<text x="695.5" y="344" fill="#bfbfbf">+ 0°00'</text>
<text x="605.5" y="364" fill="#bfbfbf">Fire: 4, Earth: 1,</text>
<text x="605.5" y="374" fill="#bfbfbf">Air : 7, Water: 1</text>
<text x="605.5" y="384" fill="#bfbfbf">Car: 2, Fix: 8, Mut: 3</text>
<text x="605.5" y="394" fill="#bfbfbf">Yang: 11, Yin: 2</text>
<text x="605.5" y="404" fill="#bfbfbf">M: 9, N: 2, A: 4, D: 7</text>
<text x="605.5" y="414" fill="#bfbfbf">Ang: 4, Suc: 4, Cad: 3</text>
<text x="605.5" y="424" fill="#bfbfbf">Learn: 7, Share: 6</text>
</g>
</svg>
</body></html>
